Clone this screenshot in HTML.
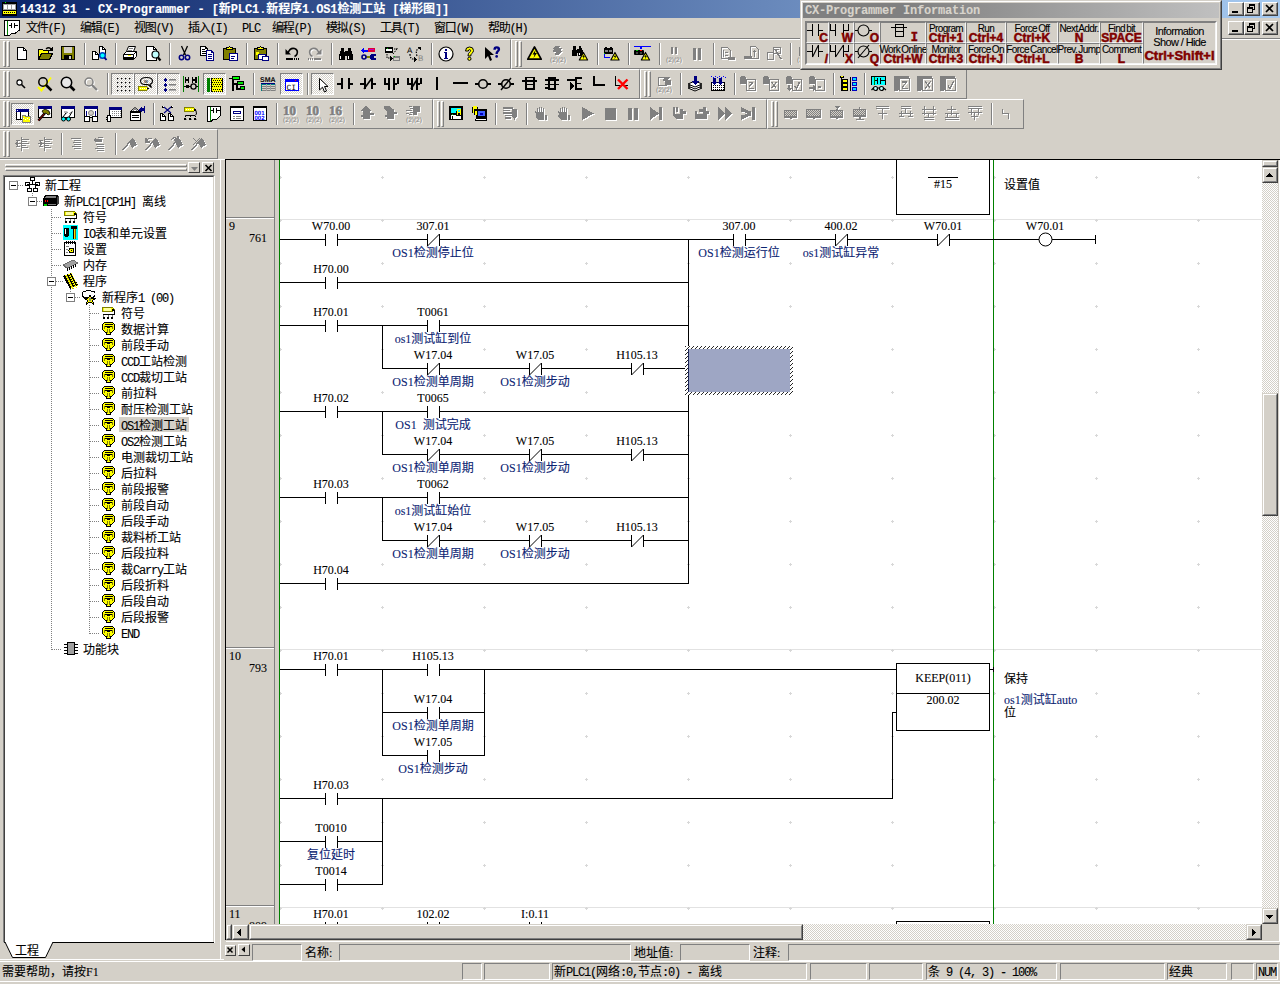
<!DOCTYPE html>
<html lang="zh"><head><meta charset="utf-8"><title>CX-Programmer</title><style>html,body{margin:0;padding:0}
body{width:1280px;height:984px;background:#d4d0c8;position:relative;overflow:hidden;font-family:"Liberation Serif","Noto Sans CJK SC",serif;font-size:12px;line-height:12px;color:#000}
div,svg{position:absolute;box-sizing:border-box}
.t{white-space:nowrap;height:12px;line-height:12px;word-spacing:3px;-webkit-text-stroke:0.1px currentColor}
.m{font-family:"Liberation Mono",monospace;letter-spacing:-1.2px;word-spacing:0}
</style></head><body>
<div style="left:0px;top:0px;width:1280px;height:18px;background:linear-gradient(90deg,#0a246a 0,#a6caf0 100%)"></div>
<svg style="left:2px;top:1px" width="16" height="16" viewBox="0 0 16 16" shape-rendering="crispEdges"><rect x="0" y="1" width="15" height="14" fill="#000"/><rect x="1" y="3" width="13" height="6" fill="#a0a0a0"/><rect x="2" y="4" width="3" height="4" fill="#fff"/><rect x="6" y="4" width="3" height="4" fill="#fff"/><rect x="10" y="4" width="3" height="4" fill="#fff"/><rect x="3" y="1" width="1" height="1" fill="#00ff00"/><rect x="1" y="10" width="13" height="3" fill="#ffff00"/><rect x="2" y="11" width="1" height="1" fill="#000"/><rect x="4" y="11" width="1" height="1" fill="#000"/><rect x="6" y="11" width="1" height="1" fill="#000"/><rect x="8" y="11" width="1" height="1" fill="#000"/><rect x="10" y="11" width="1" height="1" fill="#000"/><rect x="12" y="11" width="1" height="1" fill="#000"/></svg>
<div class="t" style="left:20px;top:4px;color:#fff;font-weight:bold;font-family:&quot;Liberation Mono&quot;,&quot;Noto Sans CJK SC&quot;,monospace;letter-spacing:-0.1px;word-spacing:0">14312 31 - CX-Programmer - [新PLC1.新程序1.OS1检测工站 [梯形图]]</div>
<div style="left:1228px;top:2px;width:16px;height:14px;border-top:1px solid #fff;border-left:1px solid #fff;border-bottom:1px solid #404040;border-right:1px solid #404040;background:#d4d0c8"><div style="left:0px;top:0px;width:14px;height:12px;border-bottom:1px solid #808080;border-right:1px solid #808080"><svg style="left:0px;top:0px" width="13" height="11" viewBox="0 0 13 11" shape-rendering="crispEdges"><rect x="3" y="8" width="6" height="2" fill="#000"/></svg></div></div>
<div style="left:1244px;top:2px;width:16px;height:14px;border-top:1px solid #fff;border-left:1px solid #fff;border-bottom:1px solid #404040;border-right:1px solid #404040;background:#d4d0c8"><div style="left:0px;top:0px;width:14px;height:12px;border-bottom:1px solid #808080;border-right:1px solid #808080"><svg style="left:0px;top:0px" width="13" height="11" viewBox="0 0 13 11" shape-rendering="crispEdges"><rect x="4" y="1" width="6" height="2" fill="#000"/><rect x="4" y="2" width="1" height="4" fill="#000"/><rect x="9" y="2" width="1" height="5" fill="#000"/><rect x="7" y="6" width="3" height="1" fill="#000"/><rect x="2" y="4" width="6" height="2" fill="#000"/><rect x="2" y="5" width="1" height="5" fill="#000"/><rect x="7" y="5" width="1" height="5" fill="#000"/><rect x="2" y="9" width="6" height="1" fill="#000"/></svg></div></div>
<div style="left:1262px;top:2px;width:16px;height:14px;border-top:1px solid #fff;border-left:1px solid #fff;border-bottom:1px solid #404040;border-right:1px solid #404040;background:#d4d0c8"><div style="left:0px;top:0px;width:14px;height:12px;border-bottom:1px solid #808080;border-right:1px solid #808080"><svg style="left:0px;top:0px" width="13" height="11" viewBox="0 0 13 11" shape-rendering="crispEdges"><path d="M3,2 L10,9 M10,2 L3,9" fill="none" stroke="#000" stroke-width="1.7" shape-rendering="auto"/></svg></div></div>
<div style="left:1228px;top:21px;width:16px;height:14px;border-top:1px solid #fff;border-left:1px solid #fff;border-bottom:1px solid #404040;border-right:1px solid #404040;background:#d4d0c8"><div style="left:0px;top:0px;width:14px;height:12px;border-bottom:1px solid #808080;border-right:1px solid #808080"><svg style="left:0px;top:0px" width="13" height="11" viewBox="0 0 13 11" shape-rendering="crispEdges"><rect x="3" y="8" width="6" height="2" fill="#000"/></svg></div></div>
<div style="left:1244px;top:21px;width:16px;height:14px;border-top:1px solid #fff;border-left:1px solid #fff;border-bottom:1px solid #404040;border-right:1px solid #404040;background:#d4d0c8"><div style="left:0px;top:0px;width:14px;height:12px;border-bottom:1px solid #808080;border-right:1px solid #808080"><svg style="left:0px;top:0px" width="13" height="11" viewBox="0 0 13 11" shape-rendering="crispEdges"><rect x="4" y="1" width="6" height="2" fill="#000"/><rect x="4" y="2" width="1" height="4" fill="#000"/><rect x="9" y="2" width="1" height="5" fill="#000"/><rect x="7" y="6" width="3" height="1" fill="#000"/><rect x="2" y="4" width="6" height="2" fill="#000"/><rect x="2" y="5" width="1" height="5" fill="#000"/><rect x="7" y="5" width="1" height="5" fill="#000"/><rect x="2" y="9" width="6" height="1" fill="#000"/></svg></div></div>
<div style="left:1262px;top:21px;width:16px;height:14px;border-top:1px solid #fff;border-left:1px solid #fff;border-bottom:1px solid #404040;border-right:1px solid #404040;background:#d4d0c8"><div style="left:0px;top:0px;width:14px;height:12px;border-bottom:1px solid #808080;border-right:1px solid #808080"><svg style="left:0px;top:0px" width="13" height="11" viewBox="0 0 13 11" shape-rendering="crispEdges"><path d="M3,2 L10,9 M10,2 L3,9" fill="none" stroke="#000" stroke-width="1.7" shape-rendering="auto"/></svg></div></div>
<svg style="left:4px;top:20px" width="16" height="16" viewBox="0 0 16 16" shape-rendering="crispEdges"><path d="M0.5,0.5 H15.5 V10 L11,13.5 H7.5 L5.5,15.5 H0.5 Z" fill="#fff" stroke="#000" stroke-width="1" /><rect x="3" y="1" width="1" height="14" fill="#008000"/><rect x="5" y="5" width="2" height="1" fill="#000"/><rect x="7" y="3" width="1" height="5" fill="#000"/><rect x="10" y="3" width="1" height="5" fill="#000"/><rect x="11" y="5" width="3" height="1" fill="#000"/></svg>
<div class="t" style="left:26px;top:23px;font-family:&quot;Liberation Mono&quot;,&quot;Noto Sans CJK SC&quot;,monospace;letter-spacing:-1.2px">文件(F)</div>
<div class="t" style="left:80px;top:23px;font-family:&quot;Liberation Mono&quot;,&quot;Noto Sans CJK SC&quot;,monospace;letter-spacing:-1.2px">编辑(E)</div>
<div class="t" style="left:134px;top:23px;font-family:&quot;Liberation Mono&quot;,&quot;Noto Sans CJK SC&quot;,monospace;letter-spacing:-1.2px">视图(V)</div>
<div class="t" style="left:188px;top:23px;font-family:&quot;Liberation Mono&quot;,&quot;Noto Sans CJK SC&quot;,monospace;letter-spacing:-1.2px">插入(I)</div>
<div class="t" style="left:242px;top:23px;font-family:&quot;Liberation Mono&quot;,&quot;Noto Sans CJK SC&quot;,monospace;letter-spacing:-1.2px">PLC</div>
<div class="t" style="left:272px;top:23px;font-family:&quot;Liberation Mono&quot;,&quot;Noto Sans CJK SC&quot;,monospace;letter-spacing:-1.2px">编程(P)</div>
<div class="t" style="left:326px;top:23px;font-family:&quot;Liberation Mono&quot;,&quot;Noto Sans CJK SC&quot;,monospace;letter-spacing:-1.2px">模拟(S)</div>
<div class="t" style="left:380px;top:23px;font-family:&quot;Liberation Mono&quot;,&quot;Noto Sans CJK SC&quot;,monospace;letter-spacing:-1.2px">工具(T)</div>
<div class="t" style="left:434px;top:23px;font-family:&quot;Liberation Mono&quot;,&quot;Noto Sans CJK SC&quot;,monospace;letter-spacing:-1.2px">窗口(W)</div>
<div class="t" style="left:488px;top:23px;font-family:&quot;Liberation Mono&quot;,&quot;Noto Sans CJK SC&quot;,monospace;letter-spacing:-1.2px">帮助(H)</div>
<div style="left:0px;top:38px;width:1280px;height:1px;background:#808080"></div>
<div style="left:0px;top:39px;width:1280px;height:1px;background:#fff"></div>
<div style="left:-1px;top:39px;width:512px;height:30px;border-top:1px solid #fff;border-left:1px solid #fff;border-bottom:1px solid #808080;border-right:1px solid #808080"></div><div style="left:3px;top:41px;width:3px;height:26px;border-top:1px solid #fff;border-left:1px solid #fff;border-bottom:1px solid #808080;border-right:1px solid #808080"></div><div style="left:7px;top:41px;width:3px;height:26px;border-top:1px solid #fff;border-left:1px solid #fff;border-bottom:1px solid #808080;border-right:1px solid #808080"></div><svg style="left:14px;top:46px" width="16" height="16" viewBox="0 0 16 16" shape-rendering="crispEdges" overflow="visible"><path d="M3.5,1.5 H9.5 L12.5,4.5 V13.5 H3.5 Z" fill="#fff" stroke="#000" stroke-width="1" /><path d="M9.5,1.5 V4.5 H12.5" fill="none" stroke="#000" stroke-width="1" /></svg><svg style="left:37px;top:46px" width="16" height="16" viewBox="0 0 16 16" shape-rendering="crispEdges" overflow="visible"><path d="M1.5,13.5 V3.5 H5.5 L6.5,4.5 H11.5 V7.5 H4.5 Z" fill="#ffff00" stroke="#000" stroke-width="1" /><path d="M1.5,13.5 L4.5,7.5 H15.5 L12.5,13.5 Z" fill="#808000" stroke="#000" stroke-width="1" /><g shape-rendering="auto"><path d="M9,3 Q11.5,0.5 14,3" fill="none" stroke="#000" stroke-width="1.2" shape-rendering="auto"/></g><path d="M15.5,0.5 V5 H11 Z" fill="#000" stroke="none" stroke-width="1" /></svg><svg style="left:60px;top:46px" width="16" height="16" viewBox="0 0 16 16" shape-rendering="crispEdges" overflow="visible"><rect x="1" y="0" width="14" height="14" fill="#000"/><rect x="2" y="1" width="12" height="12" fill="#808000"/><rect x="4" y="1" width="8" height="6" fill="#d4d0c8"/><rect x="4" y="9" width="8" height="5" fill="#000"/><rect x="9" y="10" width="2" height="3" fill="#d4d0c8"/></svg><div style="left:84px;top:43px;width:2px;height:22px;border-left:1px solid #808080;border-right:1px solid #fff"></div><svg style="left:91px;top:46px" width="16" height="16" viewBox="0 0 16 16" shape-rendering="crispEdges" overflow="visible"><path d="M1.5,5.5 H4.5 L7.5,8.5 V13.5 H1.5 Z" fill="#fff" stroke="#000" stroke-width="1" /><path d="M4.5,5.5 V8.5 H7.5" fill="none" stroke="#000" stroke-width="1" /><path d="M8.5,0.5 H11.5 L14.5,3.5 V9.5 H8.5 Z" fill="#fff" stroke="#000" stroke-width="1" /><path d="M11.5,0.5 V3.5 H14.5" fill="none" stroke="#000" stroke-width="1" /><g shape-rendering="auto"><circle cx="11.5" cy="9.5" r="2.8" fill="#00ffff" stroke="#0040c0" stroke-width="1.5"/><path d="M13.5,11.5 L15.5,14" fill="none" stroke="#000080" stroke-width="2" shape-rendering="auto"/></g></svg><div style="left:115px;top:43px;width:2px;height:22px;border-left:1px solid #808080;border-right:1px solid #fff"></div><svg style="left:122px;top:46px" width="16" height="16" viewBox="0 0 16 16" shape-rendering="crispEdges" overflow="visible"><g shape-rendering="auto"><path d="M4.5,5.5 L6.5,0.5 H13.5 L11.5,5.5 Z" fill="#fff" stroke="#000" stroke-width="1" /><path d="M1.5,8.5 L4.5,5.5 H14.5 V10.5 L11.5,13.5 H1.5 Z" fill="#fff" stroke="#000" stroke-width="1" /><path d="M1.5,8.5 H11.5 L14.5,5.5 M11.5,8.5 V13.5" fill="none" stroke="#000" stroke-width="1" /></g><rect x="2" y="11" width="9" height="2" fill="#000"/><rect x="6" y="9" width="3" height="1" fill="#ffff00"/><rect x="7" y="2" width="4" height="1" fill="#808080"/><rect x="6" y="4" width="4" height="1" fill="#808080"/></svg><svg style="left:145px;top:46px" width="16" height="16" viewBox="0 0 16 16" shape-rendering="crispEdges" overflow="visible"><path d="M1.5,0.5 H8.5 L11.5,3.5 V14.5 H1.5 Z" fill="#fff" stroke="#000" stroke-width="1" /><path d="M8.5,0.5 V3.5 H11.5" fill="none" stroke="#000" stroke-width="1" /><g shape-rendering="auto"><circle cx="10.5" cy="8.5" r="3.5" fill="#c0ffff" stroke="#000" stroke-width="1.2"/><path d="M13,11.5 L15.5,14.5" fill="none" stroke="#000" stroke-width="2.2" shape-rendering="auto"/></g></svg><div style="left:169px;top:43px;width:2px;height:22px;border-left:1px solid #808080;border-right:1px solid #fff"></div><svg style="left:176px;top:46px" width="16" height="16" viewBox="0 0 16 16" shape-rendering="crispEdges" overflow="visible"><g shape-rendering="auto"><path d="M5.5,0 L9.5,9 M11.5,0 L7.5,9" fill="none" stroke="#000" stroke-width="1.3" shape-rendering="auto"/><circle cx="5.5" cy="11.5" r="2.2" fill="none" stroke="#000080" stroke-width="1.5"/><circle cx="11.5" cy="11.5" r="2.2" fill="none" stroke="#000080" stroke-width="1.5"/></g></svg><svg style="left:199px;top:46px" width="16" height="16" viewBox="0 0 16 16" shape-rendering="crispEdges" overflow="visible"><path d="M1.5,0.5 H6.5 L8.5,2.5 V9.5 H1.5 Z" fill="#fff" stroke="#000" stroke-width="1" /><path d="M6.5,0.5 V2.5 H8.5" fill="none" stroke="#000" stroke-width="1" /><rect x="3" y="3" width="3" height="1" fill="#000"/><rect x="3" y="5" width="4" height="1" fill="#000"/><rect x="3" y="7" width="4" height="1" fill="#000"/><path d="M7.5,4.5 H12.5 L14.5,6.5 V14.5 H7.5 Z" fill="#fff" stroke="#000080" stroke-width="1" /><path d="M12.5,4.5 V6.5 H14.5" fill="none" stroke="#000080" stroke-width="1" /><rect x="9" y="8" width="4" height="1" fill="#000080"/><rect x="9" y="10" width="4" height="1" fill="#000080"/><rect x="9" y="12" width="4" height="1" fill="#000080"/></svg><svg style="left:222px;top:46px" width="16" height="16" viewBox="0 0 16 16" shape-rendering="crispEdges" overflow="visible"><rect x="1" y="2" width="13" height="12" fill="#000"/><rect x="2" y="3" width="11" height="10" fill="#808000"/><path d="M4.5,3.5 V1.5 H6.5 L7.5,0.5 L8.5,1.5 H10.5 V3.5 Z" fill="#ffff00" stroke="#000" stroke-width="1" /><rect x="7" y="7" width="9" height="8" fill="#000080"/><rect x="8" y="8" width="7" height="6" fill="#fff"/><rect x="9" y="10" width="4" height="1" fill="#000080"/><rect x="9" y="12" width="3" height="1" fill="#000080"/></svg><div style="left:246px;top:43px;width:2px;height:22px;border-left:1px solid #808080;border-right:1px solid #fff"></div><svg style="left:253px;top:46px" width="16" height="16" viewBox="0 0 16 16" shape-rendering="crispEdges" overflow="visible"><rect x="1" y="2" width="13" height="12" fill="#000"/><rect x="2" y="3" width="11" height="10" fill="#808000"/><path d="M4.5,3.5 V1.5 H6.5 L7.5,0.5 L8.5,1.5 H10.5 V3.5 Z" fill="#ffff00" stroke="#000" stroke-width="1" /><rect x="3" y="6" width="3" height="3" fill="#ffff00"/><rect x="5" y="8" width="8" height="6" fill="#000080"/><rect x="6" y="9" width="6" height="4" fill="#fff"/><rect x="9" y="10" width="7" height="5" fill="#000080"/><rect x="10" y="11" width="5" height="3" fill="#fff"/></svg><div style="left:277px;top:43px;width:2px;height:22px;border-left:1px solid #808080;border-right:1px solid #fff"></div><svg style="left:284px;top:46px" width="16" height="16" viewBox="0 0 16 16" shape-rendering="crispEdges" overflow="visible"><g shape-rendering="auto"><path d="M4,7 Q6,1.5 10.5,2.5 Q14.5,4 13,8 Q12.5,9.5 10.5,10.5" fill="none" stroke="#000" stroke-width="1.6" shape-rendering="auto"/><path d="M1.5,3 V8.5 H7 Z" fill="#000" stroke="none" stroke-width="1" /></g><rect x="2" y="12" width="7" height="2" fill="#000"/><rect x="10" y="12" width="1" height="2" fill="#000"/><rect x="12" y="12" width="1" height="2" fill="#000"/><rect x="14" y="12" width="1" height="2" fill="#000"/></svg><svg style="left:307px;top:46px" width="16" height="16" viewBox="0 0 16 16" shape-rendering="crispEdges" overflow="visible"><g transform="translate(1,1)"><g transform="translate(16,0) scale(-1,1)"><g shape-rendering="auto"><path d="M4,7 Q6,1.5 10.5,2.5 Q14.5,4 13,8 Q12.5,9.5 10.5,10.5" fill="none" stroke="#fff" stroke-width="1.6" shape-rendering="auto"/><path d="M1.5,3 V8.5 H7 Z" fill="#fff" stroke="none" stroke-width="1" /></g><rect x="2" y="12" width="7" height="2" fill="#fff"/><rect x="10" y="12" width="1" height="2" fill="#fff"/><rect x="12" y="12" width="1" height="2" fill="#fff"/><rect x="14" y="12" width="1" height="2" fill="#fff"/></g></g><g transform="translate(16,0) scale(-1,1)"><g shape-rendering="auto"><path d="M4,7 Q6,1.5 10.5,2.5 Q14.5,4 13,8 Q12.5,9.5 10.5,10.5" fill="none" stroke="#808080" stroke-width="1.6" shape-rendering="auto"/><path d="M1.5,3 V8.5 H7 Z" fill="#808080" stroke="none" stroke-width="1" /></g><rect x="2" y="12" width="7" height="2" fill="#808080"/><rect x="10" y="12" width="1" height="2" fill="#808080"/><rect x="12" y="12" width="1" height="2" fill="#808080"/><rect x="14" y="12" width="1" height="2" fill="#808080"/></g></svg><div style="left:331px;top:43px;width:2px;height:22px;border-left:1px solid #808080;border-right:1px solid #fff"></div><svg style="left:338px;top:46px" width="16" height="16" viewBox="0 0 16 16" shape-rendering="crispEdges" overflow="visible"><path d="M1,14 V9 L3,4 V2 H6 V4 L7,7 V14 Z" fill="#000" stroke="none" stroke-width="1" /><path d="M15,14 V9 L13,4 V2 H10 V4 L9,7 V14 Z" fill="#000" stroke="none" stroke-width="1" /><rect x="7" y="5" width="2" height="5" fill="#000"/><rect x="2" y="10" width="1" height="3" fill="#fff"/><rect x="10" y="10" width="1" height="3" fill="#fff"/></svg><svg style="left:361px;top:46px" width="16" height="16" viewBox="0 0 16 16" shape-rendering="crispEdges" overflow="visible"><path d="M0,4.5 L3,2 V3.5 H7 V5.5 H3 V7 Z" fill="#0000ff" stroke="none" stroke-width="1" /><rect x="7" y="2" width="7" height="4" fill="#e00030"/><rect x="8" y="3" width="5" height="1" fill="#c000c0"/><rect x="4" y="10" width="7" height="2" fill="#808000"/><g shape-rendering="auto"><circle cx="3" cy="11" r="2" fill="none" stroke="#000080" stroke-width="1.6"/></g><path d="M10,8 H15 V10 H13 V12 H15 V14 H10 L9,13 V9 Z" fill="#000080" stroke="none" stroke-width="1" /></svg><svg style="left:384px;top:46px" width="16" height="16" viewBox="0 0 16 16" shape-rendering="crispEdges" overflow="visible"><rect x="1" y="1" width="8" height="6" fill="#000"/><rect x="2" y="3" width="6" height="2" fill="#fff"/><rect x="3" y="2" width="1" height="1" fill="#00c000"/><g shape-rendering="auto"><path d="M10,3 H13 V1 M13,3 L9,8 M3,8 V12 H7" fill="none" stroke="#000" stroke-width="1" stroke-dasharray="1.5,1"/></g><path d="M6,10 L9,12.5 L6,15 Z" fill="#000" stroke="none" stroke-width="1" /><rect x="9" y="10" width="7" height="5" fill="#808080"/><rect x="10" y="12" width="5" height="2" fill="#d4d0c8"/><rect x="10" y="10" width="1" height="1" fill="#00c000"/></svg><svg style="left:407px;top:46px" width="16" height="16" viewBox="0 0 16 16" shape-rendering="crispEdges" overflow="visible"><text x="0" y="7" font-family="Liberation Sans,sans-serif" font-size="8" font-weight="normal" fill="#000" style="text-rendering:geometricPrecision">A</text><g shape-rendering="auto"><path d="M3,8 Q3,14 8,13" fill="none" stroke="#000" stroke-width="1.2" stroke-dasharray="1.5,1.2"/><path d="M10,10 Q8,4 12,2" fill="none" stroke="#000" stroke-width="1.2" stroke-dasharray="1.5,1.2"/></g><path d="M7,11 L10.5,13.5 L7,16 Z" fill="#000" stroke="none" stroke-width="1" /><path d="M10,1 H14 V5 Z" fill="#000" stroke="none" stroke-width="1" /><text x="11" y="15" font-family="Liberation Sans,sans-serif" font-size="8" font-weight="normal" fill="#808080" style="text-rendering:geometricPrecision">B</text></svg><div style="left:431px;top:43px;width:2px;height:22px;border-left:1px solid #808080;border-right:1px solid #fff"></div><svg style="left:438px;top:46px" width="16" height="16" viewBox="0 0 16 16" shape-rendering="crispEdges" overflow="visible"><g shape-rendering="auto"><circle cx="8" cy="8" r="7" fill="#fff" stroke="#000" stroke-width="1.2"/></g><rect x="7" y="3" width="2" height="2" fill="#000080"/><rect x="6" y="6" width="3" height="1" fill="#000080"/><rect x="7" y="7" width="2" height="5" fill="#000080"/><rect x="6" y="12" width="4" height="1" fill="#000080"/></svg><svg style="left:461px;top:46px" width="16" height="16" viewBox="0 0 16 16" shape-rendering="crispEdges" overflow="visible"><g shape-rendering="auto"><path d="M4.5,5 Q4.5,1 8.5,1 Q12.5,1 12.5,4.5 Q12.5,6.5 10.5,7.8 Q9.8,8.3 9.8,10 H7 Q7,7.3 8.6,6.2 Q9.6,5.6 9.6,4.6 Q9.6,3.6 8.5,3.6 Q7.4,3.6 7.4,5 Z" fill="#ffff00" stroke="#000" stroke-width="1" /><circle cx="8.4" cy="12.8" r="1.6" fill="#ffff00" stroke="#000" stroke-width="1"/></g></svg><svg style="left:484px;top:46px" width="16" height="16" viewBox="0 0 16 16" shape-rendering="crispEdges" overflow="visible"><g shape-rendering="auto"><path d="M1,1 V13 L4,10 L6,15 L8,14 L6,9 H10 Z" fill="#000" stroke="none" stroke-width="1" /></g><g transform="translate(5.5,-0.5) scale(0.85)" shape-rendering="auto"><path d="M4.5,5 Q4.5,1 8.5,1 Q12.5,1 12.5,4.5 Q12.5,6.5 10.5,7.8 Q9.8,8.3 9.8,10 H7 Q7,7.3 8.6,6.2 Q9.6,5.6 9.6,4.6 Q9.6,3.6 8.5,3.6 Q7.4,3.6 7.4,5 Z" fill="#000080" stroke="none" stroke-width="1" /><circle cx="8.4" cy="12.8" r="1.6" fill="#000080" stroke="none" stroke-width="1"/></g></svg>
<div style="left:511px;top:39px;width:350px;height:30px;border-top:1px solid #fff;border-left:1px solid #fff;border-bottom:1px solid #808080;border-right:1px solid #808080"></div><div style="left:515px;top:41px;width:3px;height:26px;border-top:1px solid #fff;border-left:1px solid #fff;border-bottom:1px solid #808080;border-right:1px solid #808080"></div><div style="left:519px;top:41px;width:3px;height:26px;border-top:1px solid #fff;border-left:1px solid #fff;border-bottom:1px solid #808080;border-right:1px solid #808080"></div><svg style="left:527px;top:46px" width="16" height="16" viewBox="0 0 16 16" shape-rendering="crispEdges" overflow="visible"><g transform="translate(-0.5,-0.5) scale(1)" shape-rendering="auto"><path d="M8,1.5 L14.7,13.7 H1.3 Z" fill="#ffff00" stroke="#000" stroke-width="1.7" stroke-linejoin="round"/><path d="M9,4.5 L6,9 H8 L7,12.5 L10.5,7.5 H8.5 Z" fill="#000" stroke="none" stroke-width="1" /></g></svg><svg style="left:550px;top:46px" width="16" height="16" viewBox="0 0 16 16" shape-rendering="crispEdges" overflow="visible"><g transform="translate(1,1)"><path d="M5,0 H10 L9,2 H12 L11,5 H12 L9,9 H5 L6,6 H3 L4,3 H3 Z" fill="#fff" stroke="none" stroke-width="1" /><text x="0" y="15.5" font-family="Liberation Sans,sans-serif" font-size="6.5" font-weight="normal" fill="#fff" style="text-rendering:geometricPrecision">(2)(2)</text></g><path d="M5,0 H10 L9,2 H12 L11,5 H12 L9,9 H5 L6,6 H3 L4,3 H3 Z" fill="#808080" stroke="none" stroke-width="1" /><text x="0" y="15.5" font-family="Liberation Sans,sans-serif" font-size="6.5" font-weight="normal" fill="#808080" style="text-rendering:geometricPrecision">(2)(2)</text></svg><svg style="left:573px;top:46px" width="16" height="16" viewBox="0 0 16 16" shape-rendering="crispEdges" overflow="visible"><g transform="translate(-2,-1.5) scale(0.8)"><path d="M1,14 V9 L3,4 V2 H6 V4 L7,7 V14 Z" fill="#000" stroke="none" stroke-width="1" /><path d="M15,14 V9 L13,4 V2 H10 V4 L9,7 V14 Z" fill="#000" stroke="none" stroke-width="1" /><rect x="7" y="5" width="2" height="5" fill="#000"/><rect x="2" y="10" width="1" height="3" fill="#fff"/><rect x="10" y="10" width="1" height="3" fill="#fff"/></g><g transform="translate(5.5,5.5) scale(0.62)" shape-rendering="auto"><path d="M8,1.5 L14.7,13.7 H1.3 Z" fill="#ffff00" stroke="#000" stroke-width="1.774193548387097" stroke-linejoin="round"/><path d="M9,4.5 L6,9 H8 L7,12.5 L10.5,7.5 H8.5 Z" fill="#000" stroke="none" stroke-width="1" /></g></svg><div style="left:597px;top:43px;width:2px;height:22px;border-left:1px solid #808080;border-right:1px solid #fff"></div><svg style="left:604px;top:46px" width="16" height="16" viewBox="0 0 16 16" shape-rendering="crispEdges" overflow="visible"><rect x="0" y="2" width="9" height="6" fill="#000"/><rect x="1" y="4" width="3" height="2" fill="#808080"/><rect x="5" y="4" width="3" height="2" fill="#808080"/><rect x="1" y="1" width="2" height="1" fill="#000"/><rect x="6" y="1" width="2" height="1" fill="#000"/><rect x="0" y="8" width="1" height="4" fill="#0000ff"/><rect x="0" y="11" width="6" height="1" fill="#0000ff"/><rect x="0" y="7" width="1" height="1" fill="#00c000"/><g transform="translate(6,5.5) scale(0.62)" shape-rendering="auto"><path d="M8,1.5 L14.7,13.7 H1.3 Z" fill="#ffff00" stroke="#000" stroke-width="1.774193548387097" stroke-linejoin="round"/><path d="M9,4.5 L6,9 H8 L7,12.5 L10.5,7.5 H8.5 Z" fill="#000" stroke="none" stroke-width="1" /></g></svg><div style="left:628px;top:43px;width:2px;height:22px;border-left:1px solid #808080;border-right:1px solid #fff"></div><svg style="left:635px;top:46px" width="16" height="16" viewBox="0 0 16 16" shape-rendering="crispEdges" overflow="visible"><rect x="-1" y="0" width="17" height="1" fill="#0000ff"/><rect x="5" y="0" width="2" height="3" fill="#0000ff"/><path d="M0,4 Q-1,4 -1,5 V8 Q-1,9 0,9 H8 Q9,9 9,8 V5 Q9,4 8,4 Z" fill="#000" stroke="none" stroke-width="0" shape-rendering="auto"/><rect x="1" y="4" width="2" height="1" fill="#00c000"/><rect x="5" y="4" width="2" height="1" fill="#f00"/><rect x="1" y="6" width="2" height="2" fill="#404040"/><rect x="5" y="6" width="2" height="2" fill="#404040"/><g transform="translate(5.5,5.5) scale(0.62)" shape-rendering="auto"><path d="M8,1.5 L14.7,13.7 H1.3 Z" fill="#ffff00" stroke="#000" stroke-width="1.774193548387097" stroke-linejoin="round"/><path d="M9,4.5 L6,9 H8 L7,12.5 L10.5,7.5 H8.5 Z" fill="#000" stroke="none" stroke-width="1" /></g></svg><div style="left:659px;top:43px;width:2px;height:22px;border-left:1px solid #808080;border-right:1px solid #fff"></div><svg style="left:666px;top:46px" width="16" height="16" viewBox="0 0 16 16" shape-rendering="crispEdges" overflow="visible"><g transform="translate(1,1)"><rect x="5" y="1" width="2" height="7" fill="#fff"/><rect x="9" y="1" width="2" height="7" fill="#fff"/><text x="0" y="15.5" font-family="Liberation Sans,sans-serif" font-size="6.5" font-weight="normal" fill="#fff" style="text-rendering:geometricPrecision">(2)(2)</text></g><rect x="5" y="1" width="2" height="7" fill="#808080"/><rect x="9" y="1" width="2" height="7" fill="#808080"/><text x="0" y="15.5" font-family="Liberation Sans,sans-serif" font-size="6.5" font-weight="normal" fill="#808080" style="text-rendering:geometricPrecision">(2)(2)</text></svg><svg style="left:689px;top:46px" width="16" height="16" viewBox="0 0 16 16" shape-rendering="crispEdges" overflow="visible"><g transform="translate(1,1)"><rect x="4" y="2" width="3" height="12" fill="#fff"/><rect x="9" y="2" width="3" height="12" fill="#fff"/></g><rect x="4" y="2" width="3" height="12" fill="#808080"/><rect x="9" y="2" width="3" height="12" fill="#808080"/></svg><div style="left:713px;top:43px;width:2px;height:22px;border-left:1px solid #808080;border-right:1px solid #fff"></div><svg style="left:720px;top:46px" width="16" height="16" viewBox="0 0 16 16" shape-rendering="crispEdges" overflow="visible"><g transform="translate(1,1)"><path d="M1.5,1.5 H7.5 L10.5,4.5 V12.5 H1.5 Z" fill="none" stroke="#fff" stroke-width="1" /><rect x="3" y="4" width="1" height="7" fill="#fff"/><rect x="5" y="6" width="3" height="1" fill="#fff"/><rect x="5" y="9" width="3" height="1" fill="#fff"/><rect x="8" y="11" width="7" height="3" fill="#fff"/></g><path d="M1.5,1.5 H7.5 L10.5,4.5 V12.5 H1.5 Z" fill="none" stroke="#808080" stroke-width="1" /><rect x="3" y="4" width="1" height="7" fill="#808080"/><rect x="5" y="6" width="3" height="1" fill="#808080"/><rect x="5" y="9" width="3" height="1" fill="#808080"/><rect x="8" y="11" width="7" height="3" fill="#808080"/></svg><svg style="left:743px;top:46px" width="16" height="16" viewBox="0 0 16 16" shape-rendering="crispEdges" overflow="visible"><g transform="translate(1,1)"><path d="M7.5,0.5 H12.5 L15.5,3.5 V12.5 H7.5 Z" fill="none" stroke="#fff" stroke-width="1" /><rect x="11" y="4" width="1" height="7" fill="#fff"/><rect x="10" y="5" width="3" height="1" fill="#fff"/><rect x="1" y="10" width="8" height="3" fill="#fff"/></g><path d="M7.5,0.5 H12.5 L15.5,3.5 V12.5 H7.5 Z" fill="none" stroke="#808080" stroke-width="1" /><rect x="11" y="4" width="1" height="7" fill="#808080"/><rect x="10" y="5" width="3" height="1" fill="#808080"/><rect x="1" y="10" width="8" height="3" fill="#808080"/></svg><svg style="left:766px;top:46px" width="16" height="16" viewBox="0 0 16 16" shape-rendering="crispEdges" overflow="visible"><g transform="translate(1,1)"><path d="M1.5,6.5 H7.5 V13.5 H1.5 Z" fill="none" stroke="#fff" stroke-width="1" /><path d="M7.5,1.5 H14.5 V7.5 H7.5 Z" fill="none" stroke="#fff" stroke-width="1" /><path d="M9,3 L15,13" fill="none" stroke="#fff" stroke-width="1.5" /><rect x="9" y="3" width="4" height="1" fill="#fff"/></g><path d="M1.5,6.5 H7.5 V13.5 H1.5 Z" fill="none" stroke="#808080" stroke-width="1" /><path d="M7.5,1.5 H14.5 V7.5 H7.5 Z" fill="none" stroke="#808080" stroke-width="1" /><path d="M9,3 L15,13" fill="none" stroke="#808080" stroke-width="1.5" /><rect x="9" y="3" width="4" height="1" fill="#808080"/></svg><div style="left:790px;top:43px;width:2px;height:22px;border-left:1px solid #808080;border-right:1px solid #fff"></div><svg style="left:797px;top:46px" width="16" height="16" viewBox="0 0 16 16" shape-rendering="crispEdges" overflow="visible"><g transform="translate(1,1)"><path d="M2.5,1.5 H10.5 V9.5 H2.5 Z" fill="none" stroke="#fff" stroke-width="1" /><path d="M8,1 H14 L12,4 H15 V9 H9 V5 H7 Z" fill="#fff" stroke="none" stroke-width="1" /><text x="0" y="15.5" font-family="Liberation Sans,sans-serif" font-size="6.5" font-weight="normal" fill="#fff" style="text-rendering:geometricPrecision">(2)(2)</text></g><path d="M2.5,1.5 H10.5 V9.5 H2.5 Z" fill="none" stroke="#808080" stroke-width="1" /><path d="M8,1 H14 L12,4 H15 V9 H9 V5 H7 Z" fill="#808080" stroke="none" stroke-width="1" /><text x="0" y="15.5" font-family="Liberation Sans,sans-serif" font-size="6.5" font-weight="normal" fill="#808080" style="text-rendering:geometricPrecision">(2)(2)</text></svg><svg style="left:820px;top:46px" width="16" height="16" viewBox="0 0 16 16" shape-rendering="crispEdges" overflow="visible"><g transform="translate(1,1)"><path d="M1.5,1.5 H7.5 L10.5,4.5 V12.5 H1.5 Z" fill="none" stroke="#fff" stroke-width="1" /><rect x="3" y="4" width="1" height="7" fill="#fff"/><rect x="5" y="6" width="3" height="1" fill="#fff"/><rect x="5" y="9" width="3" height="1" fill="#fff"/><rect x="8" y="11" width="7" height="3" fill="#fff"/></g><path d="M1.5,1.5 H7.5 L10.5,4.5 V12.5 H1.5 Z" fill="none" stroke="#808080" stroke-width="1" /><rect x="3" y="4" width="1" height="7" fill="#808080"/><rect x="5" y="6" width="3" height="1" fill="#808080"/><rect x="5" y="9" width="3" height="1" fill="#808080"/><rect x="8" y="11" width="7" height="3" fill="#808080"/></svg>
<div style="left:-1px;top:69px;width:641px;height:30px;border-top:1px solid #fff;border-left:1px solid #fff;border-bottom:1px solid #808080;border-right:1px solid #808080"></div><div style="left:3px;top:71px;width:3px;height:26px;border-top:1px solid #fff;border-left:1px solid #fff;border-bottom:1px solid #808080;border-right:1px solid #808080"></div><div style="left:7px;top:71px;width:3px;height:26px;border-top:1px solid #fff;border-left:1px solid #fff;border-bottom:1px solid #808080;border-right:1px solid #808080"></div><svg style="left:14px;top:76px" width="16" height="16" viewBox="0 0 16 16" shape-rendering="crispEdges" overflow="visible"><g shape-rendering="auto"><circle cx="5.5" cy="6.5" r="2.6" fill="#fff" stroke="#000" stroke-width="1.1"/><path d="M7.5,8.5 L11,12" fill="none" stroke="#000" stroke-width="1.6" shape-rendering="auto"/></g></svg><svg style="left:37px;top:76px" width="16" height="16" viewBox="0 0 16 16" shape-rendering="crispEdges" overflow="visible"><g shape-rendering="auto"><path d="M1,11 L4.5,14.5 L14,1.5" fill="none" stroke="#ffff00" stroke-width="1.8" shape-rendering="auto"/><circle cx="6" cy="6" r="4.2" fill="none" stroke="#000" stroke-width="1.5"/><path d="M9,9 L14.5,14.5" fill="none" stroke="#000" stroke-width="2.5" shape-rendering="auto"/></g></svg><svg style="left:60px;top:76px" width="16" height="16" viewBox="0 0 16 16" shape-rendering="crispEdges" overflow="visible"><g shape-rendering="auto"><circle cx="6.5" cy="6.5" r="5.2" fill="#e8e8e8" stroke="#000" stroke-width="1.5"/><path d="M10.5,10.5 L14.5,14.5" fill="none" stroke="#000" stroke-width="2.6" shape-rendering="auto"/></g></svg><svg style="left:83px;top:76px" width="16" height="16" viewBox="0 0 16 16" shape-rendering="crispEdges" overflow="visible"><g shape-rendering="auto"><g transform="translate(1,1)"><circle cx="6" cy="6" r="4" fill="none" stroke="#fff" stroke-width="1.5"/><path d="M9,9 L14,14" fill="none" stroke="#fff" stroke-width="2.2" shape-rendering="auto"/></g><circle cx="6" cy="6" r="4" fill="none" stroke="#808080" stroke-width="1.5"/><path d="M9,9 L14,14" fill="none" stroke="#808080" stroke-width="2.2" shape-rendering="auto"/></g></svg><div style="left:107px;top:73px;width:2px;height:22px;border-left:1px solid #808080;border-right:1px solid #fff"></div><div style="left:111px;top:73px;width:23px;height:22px;border-top:1px solid #808080;border-left:1px solid #808080;border-bottom:1px solid #fff;border-right:1px solid #fff;background:repeating-conic-gradient(#fff 0 25%,#d4d0c8 0 50%) 0 0/2px 2px;"></div><svg style="left:115px;top:77px" width="16" height="16" viewBox="0 0 16 16" shape-rendering="crispEdges" overflow="visible"><rect x="2" y="1" width="1" height="1" fill="#000"/><rect x="3" y="1" width="1" height="1" fill="#909090"/><rect x="2" y="2" width="1" height="1" fill="#909090"/><rect x="2" y="5" width="1" height="1" fill="#000"/><rect x="3" y="5" width="1" height="1" fill="#909090"/><rect x="2" y="6" width="1" height="1" fill="#909090"/><rect x="2" y="9" width="1" height="1" fill="#000"/><rect x="3" y="9" width="1" height="1" fill="#909090"/><rect x="2" y="10" width="1" height="1" fill="#909090"/><rect x="2" y="13" width="1" height="1" fill="#000"/><rect x="3" y="13" width="1" height="1" fill="#909090"/><rect x="2" y="14" width="1" height="1" fill="#909090"/><rect x="6" y="1" width="1" height="1" fill="#000"/><rect x="7" y="1" width="1" height="1" fill="#909090"/><rect x="6" y="2" width="1" height="1" fill="#909090"/><rect x="6" y="5" width="1" height="1" fill="#000"/><rect x="7" y="5" width="1" height="1" fill="#909090"/><rect x="6" y="6" width="1" height="1" fill="#909090"/><rect x="6" y="9" width="1" height="1" fill="#000"/><rect x="7" y="9" width="1" height="1" fill="#909090"/><rect x="6" y="10" width="1" height="1" fill="#909090"/><rect x="6" y="13" width="1" height="1" fill="#000"/><rect x="7" y="13" width="1" height="1" fill="#909090"/><rect x="6" y="14" width="1" height="1" fill="#909090"/><rect x="10" y="1" width="1" height="1" fill="#000"/><rect x="11" y="1" width="1" height="1" fill="#909090"/><rect x="10" y="2" width="1" height="1" fill="#909090"/><rect x="10" y="5" width="1" height="1" fill="#000"/><rect x="11" y="5" width="1" height="1" fill="#909090"/><rect x="10" y="6" width="1" height="1" fill="#909090"/><rect x="10" y="9" width="1" height="1" fill="#000"/><rect x="11" y="9" width="1" height="1" fill="#909090"/><rect x="10" y="10" width="1" height="1" fill="#909090"/><rect x="10" y="13" width="1" height="1" fill="#000"/><rect x="11" y="13" width="1" height="1" fill="#909090"/><rect x="10" y="14" width="1" height="1" fill="#909090"/><rect x="14" y="1" width="1" height="1" fill="#000"/><rect x="15" y="1" width="1" height="1" fill="#909090"/><rect x="14" y="2" width="1" height="1" fill="#909090"/><rect x="14" y="5" width="1" height="1" fill="#000"/><rect x="15" y="5" width="1" height="1" fill="#909090"/><rect x="14" y="6" width="1" height="1" fill="#909090"/><rect x="14" y="9" width="1" height="1" fill="#000"/><rect x="15" y="9" width="1" height="1" fill="#909090"/><rect x="14" y="10" width="1" height="1" fill="#909090"/><rect x="14" y="13" width="1" height="1" fill="#000"/><rect x="15" y="13" width="1" height="1" fill="#909090"/><rect x="14" y="14" width="1" height="1" fill="#909090"/></svg><div style="left:134px;top:73px;width:23px;height:22px;border-top:1px solid #808080;border-left:1px solid #808080;border-bottom:1px solid #fff;border-right:1px solid #fff;background:repeating-conic-gradient(#fff 0 25%,#d4d0c8 0 50%) 0 0/2px 2px;"></div><svg style="left:138px;top:77px" width="16" height="16" viewBox="0 0 16 16" shape-rendering="crispEdges" overflow="visible"><g shape-rendering="auto"><path d="M2.5,4 Q2.5,0.5 8.5,0.5 Q14.5,0.5 14.5,4 Q14.5,6.5 12,7.3 L13.5,10.5 L10,7.6 Q2.5,8 2.5,4 Z" fill="none" stroke="#000" stroke-width="1.1" /></g><text x="6" y="5.5" font-family="Liberation Sans,sans-serif" font-size="5.5" font-weight="normal" fill="#000" style="text-rendering:geometricPrecision">w</text><path d="M0.5,9.5 H8.5 L10.5,11.5 L8.5,13.5 H0.5 Z" fill="#ffff00" stroke="#808000" stroke-width="1" /><rect x="2" y="11" width="1" height="1" fill="#fff"/><rect x="4" y="11" width="1" height="1" fill="#fff"/><rect x="6" y="11" width="1" height="1" fill="#fff"/><rect x="8" y="11" width="1" height="1" fill="#fff"/><rect x="9" y="11" width="2" height="1" fill="#000"/></svg><div style="left:157px;top:73px;width:23px;height:22px;border-top:1px solid #808080;border-left:1px solid #808080;border-bottom:1px solid #fff;border-right:1px solid #fff;background:repeating-conic-gradient(#fff 0 25%,#d4d0c8 0 50%) 0 0/2px 2px;"></div><svg style="left:161px;top:77px" width="16" height="16" viewBox="0 0 16 16" shape-rendering="crispEdges" overflow="visible"><path d="M2,3 L4,1 L6,3 L4,5 Z" fill="#000080" stroke="none" stroke-width="1" /><rect x="8" y="2" width="7" height="1" fill="#808080"/><rect x="8" y="3" width="7" height="1" fill="#b0b0b0"/><path d="M2,8 L4,6 L6,8 L4,10 Z" fill="#000080" stroke="none" stroke-width="1" /><rect x="8" y="7" width="7" height="1" fill="#808080"/><rect x="8" y="8" width="7" height="1" fill="#b0b0b0"/><path d="M2,13 L4,11 L6,13 L4,15 Z" fill="#000080" stroke="none" stroke-width="1" /><rect x="8" y="12" width="7" height="1" fill="#808080"/><rect x="8" y="13" width="7" height="1" fill="#b0b0b0"/></svg><svg style="left:183px;top:76px" width="16" height="16" viewBox="0 0 16 16" shape-rendering="crispEdges" overflow="visible"><rect x="0" y="0" width="1" height="16" fill="#008000"/><rect x="15" y="0" width="1" height="16" fill="#008000"/><rect x="2" y="1" width="1" height="6" fill="#000"/><rect x="5" y="1" width="1" height="6" fill="#000"/><rect x="2" y="3" width="4" height="2" fill="#000"/><rect x="9" y="1" width="1" height="6" fill="#000"/><rect x="12" y="1" width="2" height="6" fill="#000"/><rect x="9" y="3" width="4" height="2" fill="#000"/><rect x="1" y="10" width="14" height="1" fill="#000"/><rect x="3" y="9" width="3" height="3" fill="#000"/><g shape-rendering="auto"><circle cx="10.5" cy="10.5" r="2.6" fill="#d4d0c8" stroke="#000" stroke-width="1.3"/></g></svg><div style="left:203px;top:73px;width:23px;height:22px;border-top:1px solid #808080;border-left:1px solid #808080;border-bottom:1px solid #fff;border-right:1px solid #fff;background:repeating-conic-gradient(#fff 0 25%,#d4d0c8 0 50%) 0 0/2px 2px;"></div><svg style="left:207px;top:77px" width="16" height="16" viewBox="0 0 16 16" shape-rendering="crispEdges" overflow="visible"><rect x="0" y="1" width="3" height="14" fill="#008000"/><rect x="4" y="1" width="12" height="14" fill="#000"/><rect x="5" y="2" width="10" height="3" fill="#ffff00"/><rect x="5" y="6" width="10" height="3" fill="#ffff00"/><rect x="5" y="10" width="10" height="4" fill="#ffff00"/><rect x="6" y="1" width="1" height="1" fill="#ffff00"/><rect x="6" y="5" width="1" height="1" fill="#ffff00"/><rect x="6" y="9" width="1" height="1" fill="#ffff00"/><rect x="6" y="14" width="1" height="1" fill="#ffff00"/><rect x="8" y="1" width="1" height="1" fill="#ffff00"/><rect x="8" y="5" width="1" height="1" fill="#ffff00"/><rect x="8" y="9" width="1" height="1" fill="#ffff00"/><rect x="8" y="14" width="1" height="1" fill="#ffff00"/><rect x="10" y="1" width="1" height="1" fill="#ffff00"/><rect x="10" y="5" width="1" height="1" fill="#ffff00"/><rect x="10" y="9" width="1" height="1" fill="#ffff00"/><rect x="10" y="14" width="1" height="1" fill="#ffff00"/><rect x="12" y="1" width="1" height="1" fill="#ffff00"/><rect x="12" y="5" width="1" height="1" fill="#ffff00"/><rect x="12" y="9" width="1" height="1" fill="#ffff00"/><rect x="12" y="14" width="1" height="1" fill="#ffff00"/><rect x="14" y="1" width="1" height="1" fill="#ffff00"/><rect x="14" y="5" width="1" height="1" fill="#ffff00"/><rect x="14" y="9" width="1" height="1" fill="#ffff00"/><rect x="14" y="14" width="1" height="1" fill="#ffff00"/><rect x="6" y="3" width="1" height="1" fill="#000"/><rect x="6" y="7" width="1" height="1" fill="#000"/><rect x="6" y="12" width="1" height="1" fill="#000"/><rect x="8" y="3" width="1" height="1" fill="#000"/><rect x="8" y="7" width="1" height="1" fill="#000"/><rect x="8" y="12" width="1" height="1" fill="#000"/><rect x="10" y="3" width="1" height="1" fill="#000"/><rect x="10" y="7" width="1" height="1" fill="#000"/><rect x="10" y="12" width="1" height="1" fill="#000"/><rect x="12" y="3" width="1" height="1" fill="#000"/><rect x="12" y="7" width="1" height="1" fill="#000"/><rect x="12" y="12" width="1" height="1" fill="#000"/><rect x="14" y="3" width="1" height="1" fill="#000"/><rect x="14" y="7" width="1" height="1" fill="#000"/><rect x="14" y="12" width="1" height="1" fill="#000"/></svg><svg style="left:229px;top:76px" width="16" height="16" viewBox="0 0 16 16" shape-rendering="crispEdges" overflow="visible"><rect x="0" y="2" width="3" height="1" fill="#000"/><rect x="3" y="2" width="2" height="13" fill="#000"/><rect x="5" y="7" width="3" height="2" fill="#000"/><rect x="7" y="7" width="2" height="7" fill="#000"/><rect x="9" y="12" width="2" height="2" fill="#000"/><rect x="3" y="0" width="8" height="4" fill="#000"/><rect x="4" y="1" width="6" height="2" fill="#00ff00"/><rect x="8" y="5" width="7" height="4" fill="#000"/><rect x="9" y="6" width="5" height="2" fill="#00e000"/><rect x="11" y="10" width="5" height="4" fill="#000"/><rect x="12" y="11" width="3" height="2" fill="#00e000"/></svg><div style="left:253px;top:73px;width:2px;height:22px;border-left:1px solid #808080;border-right:1px solid #fff"></div><svg style="left:260px;top:76px" width="16" height="16" viewBox="0 0 16 16" shape-rendering="crispEdges" overflow="visible"><text x="0" y="6" font-family="Liberation Sans,sans-serif" font-size="7" font-weight="bold" fill="#000" style="text-rendering:geometricPrecision">SMA</text><rect x="1" y="7" width="14" height="1" fill="#000080"/><rect x="1" y="8" width="14" height="1" fill="#008080"/><rect x="1" y="10" width="14" height="1" fill="#808080"/><rect x="1" y="12" width="14" height="1" fill="#808080"/><rect x="1" y="14" width="14" height="1" fill="#808080"/><rect x="1.0" y="8" width="1" height="7" fill="#a0a0a0"/><rect x="5.5" y="8" width="1" height="7" fill="#a0a0a0"/><rect x="10.0" y="8" width="1" height="7" fill="#a0a0a0"/><rect x="14.5" y="8" width="1" height="7" fill="#a0a0a0"/><rect x="1" y="8" width="1" height="7" fill="#008080"/></svg><div style="left:280px;top:73px;width:23px;height:22px;border-top:1px solid #808080;border-left:1px solid #808080;border-bottom:1px solid #fff;border-right:1px solid #fff;background:repeating-conic-gradient(#fff 0 25%,#d4d0c8 0 50%) 0 0/2px 2px;"></div><svg style="left:284px;top:77px" width="16" height="16" viewBox="0 0 16 16" shape-rendering="crispEdges" overflow="visible"><rect x="1" y="2" width="14" height="12" fill="#0000ff"/><rect x="2" y="5" width="12" height="8" fill="#fff"/><rect x="11" y="3" width="1" height="1" fill="#f00"/><text x="2.5" y="12.5" font-family="Liberation Mono,sans-serif" font-size="8" font-weight="normal" fill="#000" style="text-rendering:geometricPrecision">CI</text></svg><div style="left:307px;top:73px;width:2px;height:22px;border-left:1px solid #808080;border-right:1px solid #fff"></div><div style="left:311px;top:73px;width:23px;height:22px;border-top:1px solid #808080;border-left:1px solid #808080;border-bottom:1px solid #fff;border-right:1px solid #fff;background:repeating-conic-gradient(#fff 0 25%,#d4d0c8 0 50%) 0 0/2px 2px;"></div><svg style="left:315px;top:77px" width="16" height="16" viewBox="0 0 16 16" shape-rendering="crispEdges" overflow="visible"><g shape-rendering="auto"><path d="M4.5,1.5 V13 L7.5,10.2 L9.5,15 L11.5,14 L9.5,9.5 H13 Z" fill="#fff" stroke="#000" stroke-width="1" /></g></svg><svg style="left:337px;top:76px" width="16" height="16" viewBox="0 0 16 16" shape-rendering="crispEdges" overflow="visible"><rect x="0" y="7" width="4" height="2" fill="#000"/><rect x="4" y="2" width="2" height="11" fill="#000"/><rect x="11" y="2" width="2" height="11" fill="#000"/><rect x="13" y="7" width="3" height="2" fill="#000"/></svg><svg style="left:360px;top:76px" width="16" height="16" viewBox="0 0 16 16" shape-rendering="crispEdges" overflow="visible"><rect x="0" y="7" width="4" height="2" fill="#000"/><rect x="4" y="2" width="2" height="11" fill="#000"/><rect x="11" y="2" width="2" height="11" fill="#000"/><rect x="13" y="7" width="3" height="2" fill="#000"/><g shape-rendering="auto"><path d="M12,2 L4,13" fill="none" stroke="#000" stroke-width="1.6" shape-rendering="auto"/></g></svg><svg style="left:383px;top:76px" width="16" height="16" viewBox="0 0 16 16" shape-rendering="crispEdges" overflow="visible"><rect x="1" y="2" width="2" height="6" fill="#000"/><rect x="1" y="7" width="4" height="2" fill="#000"/><rect x="5" y="2" width="2" height="12" fill="#000"/><rect x="10" y="2" width="2" height="12" fill="#000"/><rect x="10" y="7" width="4" height="2" fill="#000"/><rect x="14" y="2" width="2" height="6" fill="#000"/></svg><svg style="left:406px;top:76px" width="16" height="16" viewBox="0 0 16 16" shape-rendering="crispEdges" overflow="visible"><rect x="1" y="2" width="2" height="6" fill="#000"/><rect x="1" y="7" width="4" height="2" fill="#000"/><rect x="5" y="2" width="2" height="12" fill="#000"/><rect x="10" y="2" width="2" height="12" fill="#000"/><rect x="10" y="7" width="4" height="2" fill="#000"/><rect x="14" y="2" width="2" height="6" fill="#000"/><g shape-rendering="auto"><path d="M12,2 L5,13" fill="none" stroke="#000" stroke-width="1.6" shape-rendering="auto"/></g></svg><svg style="left:429px;top:76px" width="16" height="16" viewBox="0 0 16 16" shape-rendering="crispEdges" overflow="visible"><rect x="7" y="1" width="2" height="13" fill="#000"/></svg><svg style="left:452px;top:76px" width="16" height="16" viewBox="0 0 16 16" shape-rendering="crispEdges" overflow="visible"><rect x="1" y="6" width="15" height="2" fill="#000"/></svg><svg style="left:475px;top:76px" width="16" height="16" viewBox="0 0 16 16" shape-rendering="crispEdges" overflow="visible"><rect x="0" y="7" width="4" height="2" fill="#000"/><rect x="12" y="7" width="4" height="2" fill="#000"/><g shape-rendering="auto"><circle cx="8" cy="8" r="4.3" fill="none" stroke="#000" stroke-width="1.6"/></g></svg><svg style="left:498px;top:76px" width="16" height="16" viewBox="0 0 16 16" shape-rendering="crispEdges" overflow="visible"><rect x="0" y="7" width="4" height="2" fill="#000"/><rect x="12" y="7" width="4" height="2" fill="#000"/><g shape-rendering="auto"><circle cx="8" cy="8" r="4.3" fill="none" stroke="#000" stroke-width="1.6"/><path d="M13,2 L3,14" fill="none" stroke="#000" stroke-width="1.4" shape-rendering="auto"/></g></svg><svg style="left:521px;top:76px" width="16" height="16" viewBox="0 0 16 16" shape-rendering="crispEdges" overflow="visible"><rect x="1" y="4" width="15" height="2" fill="#000"/><rect x="4" y="1" width="2" height="13" fill="#000"/><rect x="12" y="1" width="2" height="13" fill="#000"/><rect x="4" y="1" width="10" height="1" fill="#000"/><rect x="4" y="8" width="10" height="1" fill="#000"/><rect x="4" y="12" width="10" height="2" fill="#000"/></svg><svg style="left:544px;top:76px" width="16" height="16" viewBox="0 0 16 16" shape-rendering="crispEdges" overflow="visible"><rect x="1" y="3" width="14" height="2" fill="#000"/><rect x="1" y="8" width="14" height="1" fill="#000"/><rect x="4" y="1" width="2" height="13" fill="#000"/><rect x="10" y="1" width="2" height="13" fill="#000"/><rect x="4" y="1" width="8" height="2" fill="#000"/><rect x="4" y="12" width="8" height="2" fill="#000"/><rect x="1" y="11" width="3" height="2" fill="#000"/></svg><svg style="left:567px;top:76px" width="16" height="16" viewBox="0 0 16 16" shape-rendering="crispEdges" overflow="visible"><rect x="0" y="3" width="9" height="2" fill="#000"/><path d="M3,6 L8,10 L3,14 Z" fill="#000" stroke="none" stroke-width="1" /><rect x="8" y="1" width="2" height="13" fill="#000"/><rect x="8" y="1" width="7" height="2" fill="#000"/><rect x="8" y="7" width="6" height="1" fill="#000"/><rect x="8" y="12" width="7" height="2" fill="#000"/></svg><svg style="left:590px;top:76px" width="16" height="16" viewBox="0 0 16 16" shape-rendering="crispEdges" overflow="visible"><rect x="3" y="0" width="2" height="10" fill="#000"/><rect x="3" y="8" width="12" height="2" fill="#000"/></svg><svg style="left:613px;top:76px" width="16" height="16" viewBox="0 0 16 16" shape-rendering="crispEdges" overflow="visible"><rect x="2" y="0" width="1" height="10" fill="#000"/><rect x="2" y="9" width="13" height="1" fill="#000"/><g shape-rendering="auto"><path d="M5,3.5 L14.5,13 M14.5,3.5 L5,13" fill="none" stroke="#f00" stroke-width="2.4" shape-rendering="auto"/></g></svg>
<div style="left:640px;top:69px;width:327px;height:30px;border-top:1px solid #fff;border-left:1px solid #fff;border-bottom:1px solid #808080;border-right:1px solid #808080"></div><div style="left:644px;top:71px;width:3px;height:26px;border-top:1px solid #fff;border-left:1px solid #fff;border-bottom:1px solid #808080;border-right:1px solid #808080"></div><div style="left:648px;top:71px;width:3px;height:26px;border-top:1px solid #fff;border-left:1px solid #fff;border-bottom:1px solid #808080;border-right:1px solid #808080"></div><svg style="left:656px;top:76px" width="16" height="16" viewBox="0 0 16 16" shape-rendering="crispEdges" overflow="visible"><g transform="translate(1,1)"><path d="M2.5,1.5 H10.5 V9.5 H2.5 Z" fill="none" stroke="#fff" stroke-width="1" /><path d="M8,1 H14 L12,4 H15 V9 H9 V5 H7 Z" fill="#fff" stroke="none" stroke-width="1" /><text x="0" y="15.5" font-family="Liberation Sans,sans-serif" font-size="6.5" font-weight="normal" fill="#fff" style="text-rendering:geometricPrecision">(2)(2)</text></g><path d="M2.5,1.5 H10.5 V9.5 H2.5 Z" fill="none" stroke="#808080" stroke-width="1" /><path d="M8,1 H14 L12,4 H15 V9 H9 V5 H7 Z" fill="#808080" stroke="none" stroke-width="1" /><text x="0" y="15.5" font-family="Liberation Sans,sans-serif" font-size="6.5" font-weight="normal" fill="#808080" style="text-rendering:geometricPrecision">(2)(2)</text></svg><div style="left:680px;top:73px;width:2px;height:22px;border-left:1px solid #808080;border-right:1px solid #fff"></div><svg style="left:687px;top:76px" width="16" height="16" viewBox="0 0 16 16" shape-rendering="crispEdges" overflow="visible"><g shape-rendering="auto"><path d="M1,12 L8,9 L15,12 L8,15 Z" fill="#fff" stroke="#000" stroke-width="1" /><path d="M1,10 L8,7 L15,10 L8,13 Z" fill="#fff" stroke="#000" stroke-width="1" /><path d="M1,8 L8,5 L15,8 L8,11 Z" fill="#fff" stroke="#000" stroke-width="1" /></g><rect x="7" y="0" width="3" height="5" fill="#000080"/><path d="M4.5,5 H12.5 L8.5,9 Z" fill="#000080" stroke="none" stroke-width="1" /></svg><svg style="left:710px;top:76px" width="16" height="16" viewBox="0 0 16 16" shape-rendering="crispEdges" overflow="visible"><rect x="1" y="6" width="14" height="9" fill="#000"/><rect x="2" y="7" width="12" height="7" fill="#fff"/><rect x="3" y="9" width="1" height="1" fill="#000"/><rect x="3" y="11" width="1" height="1" fill="#000"/><rect x="3" y="13" width="1" height="1" fill="#000"/><rect x="5" y="9" width="1" height="1" fill="#000"/><rect x="5" y="11" width="1" height="1" fill="#000"/><rect x="5" y="13" width="1" height="1" fill="#000"/><rect x="7" y="9" width="1" height="1" fill="#000"/><rect x="7" y="11" width="1" height="1" fill="#000"/><rect x="7" y="13" width="1" height="1" fill="#000"/><rect x="9" y="9" width="1" height="1" fill="#000"/><rect x="9" y="11" width="1" height="1" fill="#000"/><rect x="9" y="13" width="1" height="1" fill="#000"/><rect x="11" y="9" width="1" height="1" fill="#000"/><rect x="11" y="11" width="1" height="1" fill="#000"/><rect x="11" y="13" width="1" height="1" fill="#000"/><rect x="13" y="9" width="1" height="1" fill="#000"/><rect x="13" y="11" width="1" height="1" fill="#000"/><rect x="13" y="13" width="1" height="1" fill="#000"/><rect x="3" y="2" width="3" height="4" fill="#000080"/><path d="M2,6 H7 L4.5,9 Z" fill="#000080" stroke="none" stroke-width="1" /><rect x="9" y="2" width="3" height="4" fill="#000080"/><path d="M8,6 H13 L10.5,9 Z" fill="#000080" stroke="none" stroke-width="1" /><rect x="1" y="0" width="1" height="1" fill="#0000ff"/><rect x="3" y="1" width="1" height="1" fill="#0000ff"/><rect x="5" y="0" width="1" height="1" fill="#0000ff"/><rect x="7" y="1" width="1" height="1" fill="#0000ff"/><rect x="9" y="0" width="1" height="1" fill="#0000ff"/><rect x="11" y="1" width="1" height="1" fill="#0000ff"/><rect x="13" y="0" width="1" height="1" fill="#0000ff"/><rect x="15" y="1" width="1" height="1" fill="#0000ff"/></svg><div style="left:734px;top:73px;width:2px;height:22px;border-left:1px solid #808080;border-right:1px solid #fff"></div><svg style="left:740px;top:76px" width="16" height="16" viewBox="0 0 16 16" shape-rendering="crispEdges" overflow="visible"><g transform="translate(1,1)"><path d="M0,8 V3 Q0,0 3,0 Q6,0 6,3 V5 H7 V8 Z" fill="#fff" stroke="none" stroke-width="1" /><path d="M6.5,3.5 H15.5 V14.5 H6.5 Z" fill="none" stroke="#fff" stroke-width="1" /><path d="M8.5,11.5 L13,6 M8.5,6.5 H13 M8.5,12.5 H13.5" fill="none" stroke="#fff" stroke-width="1.2" /></g><path d="M0,8 V3 Q0,0 3,0 Q6,0 6,3 V5 H7 V8 Z" fill="#808080" stroke="none" stroke-width="1" /><path d="M6.5,3.5 H15.5 V14.5 H6.5 Z" fill="none" stroke="#808080" stroke-width="1" /><path d="M8.5,11.5 L13,6 M8.5,6.5 H13 M8.5,12.5 H13.5" fill="none" stroke="#808080" stroke-width="1.2" /></svg><svg style="left:763px;top:76px" width="16" height="16" viewBox="0 0 16 16" shape-rendering="crispEdges" overflow="visible"><g transform="translate(1,1)"><path d="M0,8 V3 Q0,0 3,0 Q6,0 6,3 V5 H7 V8 Z" fill="#fff" stroke="none" stroke-width="1" /><path d="M6.5,3.5 H15.5 V14.5 H6.5 Z" fill="none" stroke="#fff" stroke-width="1" /><path d="M8.5,6 L13.5,12.5 M13.5,6 L8.5,12.5" fill="none" stroke="#fff" stroke-width="1.2" /></g><path d="M0,8 V3 Q0,0 3,0 Q6,0 6,3 V5 H7 V8 Z" fill="#808080" stroke="none" stroke-width="1" /><path d="M6.5,3.5 H15.5 V14.5 H6.5 Z" fill="none" stroke="#808080" stroke-width="1" /><path d="M8.5,6 L13.5,12.5 M13.5,6 L8.5,12.5" fill="none" stroke="#808080" stroke-width="1.2" /></svg><svg style="left:786px;top:76px" width="16" height="16" viewBox="0 0 16 16" shape-rendering="crispEdges" overflow="visible"><g transform="translate(1,1)"><path d="M0,8 V3 Q0,0 3,0 Q6,0 6,3 V5 H7 V8 Z" fill="#fff" stroke="none" stroke-width="1" /><path d="M6.5,3.5 H15.5 V14.5 H6.5 Z" fill="none" stroke="#fff" stroke-width="1" /><path d="M8.5,10 L10.5,12.5 L13.5,6" fill="none" stroke="#fff" stroke-width="1.4" /><path d="M2,9 H4 V12 H6 L3,15 L0,12 H2 Z" fill="#fff" stroke="none" stroke-width="1" /></g><path d="M0,8 V3 Q0,0 3,0 Q6,0 6,3 V5 H7 V8 Z" fill="#808080" stroke="none" stroke-width="1" /><path d="M6.5,3.5 H15.5 V14.5 H6.5 Z" fill="none" stroke="#808080" stroke-width="1" /><path d="M8.5,10 L10.5,12.5 L13.5,6" fill="none" stroke="#808080" stroke-width="1.4" /><path d="M2,9 H4 V12 H6 L3,15 L0,12 H2 Z" fill="#808080" stroke="none" stroke-width="1" /></svg><svg style="left:809px;top:76px" width="16" height="16" viewBox="0 0 16 16" shape-rendering="crispEdges" overflow="visible"><g transform="translate(1,1)"><path d="M0,8 V3 Q0,0 3,0 Q6,0 6,3 V5 H7 V8 Z" fill="#fff" stroke="none" stroke-width="1" /><path d="M6.5,3.5 H15.5 V14.5 H6.5 Z" fill="none" stroke="#fff" stroke-width="1" /><rect x="9" y="10" width="3" height="2" fill="#fff"/><path d="M0,11 H4 V9 L7,12 L4,15 V13 H0 Z" fill="#fff" stroke="none" stroke-width="1" /></g><path d="M0,8 V3 Q0,0 3,0 Q6,0 6,3 V5 H7 V8 Z" fill="#808080" stroke="none" stroke-width="1" /><path d="M6.5,3.5 H15.5 V14.5 H6.5 Z" fill="none" stroke="#808080" stroke-width="1" /><rect x="9" y="10" width="3" height="2" fill="#808080"/><path d="M0,11 H4 V9 L7,12 L4,15 V13 H0 Z" fill="#808080" stroke="none" stroke-width="1" /></svg><div style="left:833px;top:73px;width:2px;height:22px;border-left:1px solid #808080;border-right:1px solid #fff"></div><svg style="left:840px;top:76px" width="16" height="16" viewBox="0 0 16 16" shape-rendering="crispEdges" overflow="visible"><rect x="0" y="0" width="4" height="2" fill="#000"/><rect x="1" y="0" width="2" height="1" fill="#ffff00"/><rect x="1" y="2" width="1" height="13" fill="#000"/><rect x="2" y="3" width="6" height="4" fill="#000"/><rect x="3" y="4" width="4" height="2" fill="#ffff00"/><rect x="2" y="7" width="6" height="4" fill="#000"/><rect x="3" y="8" width="4" height="2" fill="#ffff00"/><rect x="2" y="11" width="6" height="4" fill="#000"/><rect x="3" y="12" width="4" height="2" fill="#ffff00"/><rect x="10" y="1" width="1" height="14" fill="#000"/><rect x="12" y="1" width="5" height="4" fill="#0000c0"/><rect x="13" y="2" width="3" height="2" fill="#00e0ff"/><rect x="12" y="6" width="5" height="4" fill="#0000c0"/><rect x="13" y="7" width="3" height="2" fill="#00e0ff"/><rect x="12" y="11" width="5" height="4" fill="#0000c0"/><rect x="13" y="12" width="3" height="2" fill="#00e0ff"/></svg><div style="left:864px;top:73px;width:2px;height:22px;border-left:1px solid #808080;border-right:1px solid #fff"></div><svg style="left:871px;top:76px" width="16" height="16" viewBox="0 0 16 16" shape-rendering="crispEdges" overflow="visible"><rect x="0" y="0" width="15" height="9" fill="#000"/><rect x="1" y="1" width="13" height="8" fill="#00ffff"/><rect x="3" y="1" width="1" height="8" fill="#008000"/><rect x="4" y="4" width="2" height="1" fill="#000"/><rect x="6" y="2" width="1" height="6" fill="#000"/><rect x="9" y="2" width="1" height="6" fill="#000"/><rect x="10" y="4" width="4" height="1" fill="#000"/><g shape-rendering="auto"><circle cx="4.5" cy="12.5" r="2" fill="#c0ffff" stroke="#000" stroke-width="1.2"/><circle cx="10.5" cy="12.5" r="2" fill="#c0ffff" stroke="#000" stroke-width="1.2"/><path d="M0.5,14 L2.5,12 M6.5,12 H8.5 M12.5,12 L15,14" fill="none" stroke="#000" stroke-width="1.2" shape-rendering="auto"/></g></svg><svg style="left:894px;top:76px" width="16" height="16" viewBox="0 0 16 16" shape-rendering="crispEdges" overflow="visible"><g transform="translate(1,1)"><path d="M0,0 H15 V2 H5 V13 L3,15 H0 Z" fill="#fff" stroke="none" stroke-width="1" /><path d="M5.5,2.5 H15.5 V14.5 H5.5 Z" fill="none" stroke="#fff" stroke-width="1" /><path d="M8,11.5 L13,5.5 M8,6 H13 M8,12.5 H13.5" fill="none" stroke="#fff" stroke-width="1.2" /></g><path d="M0,0 H15 V2 H5 V13 L3,15 H0 Z" fill="#808080" stroke="none" stroke-width="1" /><path d="M5.5,2.5 H15.5 V14.5 H5.5 Z" fill="none" stroke="#808080" stroke-width="1" /><path d="M8,11.5 L13,5.5 M8,6 H13 M8,12.5 H13.5" fill="none" stroke="#808080" stroke-width="1.2" /></svg><svg style="left:917px;top:76px" width="16" height="16" viewBox="0 0 16 16" shape-rendering="crispEdges" overflow="visible"><g transform="translate(1,1)"><path d="M0,0 H15 V2 H5 V13 L3,15 H0 Z" fill="#fff" stroke="none" stroke-width="1" /><path d="M5.5,2.5 H15.5 V14.5 H5.5 Z" fill="none" stroke="#fff" stroke-width="1" /><path d="M8,5.5 L13.5,12.5 M13.5,5.5 L8,12.5" fill="none" stroke="#fff" stroke-width="1.2" /></g><path d="M0,0 H15 V2 H5 V13 L3,15 H0 Z" fill="#808080" stroke="none" stroke-width="1" /><path d="M5.5,2.5 H15.5 V14.5 H5.5 Z" fill="none" stroke="#808080" stroke-width="1" /><path d="M8,5.5 L13.5,12.5 M13.5,5.5 L8,12.5" fill="none" stroke="#808080" stroke-width="1.2" /></svg><svg style="left:940px;top:76px" width="16" height="16" viewBox="0 0 16 16" shape-rendering="crispEdges" overflow="visible"><g transform="translate(1,1)"><path d="M0,0 H15 V2 H5 V13 L3,15 H0 Z" fill="#fff" stroke="none" stroke-width="1" /><path d="M5.5,2.5 H15.5 V14.5 H5.5 Z" fill="none" stroke="#fff" stroke-width="1" /><path d="M8,9.5 L10,12.5 L13.5,5.5" fill="none" stroke="#fff" stroke-width="1.4" /></g><path d="M0,0 H15 V2 H5 V13 L3,15 H0 Z" fill="#808080" stroke="none" stroke-width="1" /><path d="M5.5,2.5 H15.5 V14.5 H5.5 Z" fill="none" stroke="#808080" stroke-width="1" /><path d="M8,9.5 L10,12.5 L13.5,5.5" fill="none" stroke="#808080" stroke-width="1.4" /></svg>
<div style="left:-1px;top:99px;width:434px;height:30px;border-top:1px solid #fff;border-left:1px solid #fff;border-bottom:1px solid #808080;border-right:1px solid #808080"></div><div style="left:3px;top:101px;width:3px;height:26px;border-top:1px solid #fff;border-left:1px solid #fff;border-bottom:1px solid #808080;border-right:1px solid #808080"></div><div style="left:7px;top:101px;width:3px;height:26px;border-top:1px solid #fff;border-left:1px solid #fff;border-bottom:1px solid #808080;border-right:1px solid #808080"></div><div style="left:11px;top:103px;width:23px;height:22px;border-top:1px solid #808080;border-left:1px solid #808080;border-bottom:1px solid #fff;border-right:1px solid #fff;background:repeating-conic-gradient(#fff 0 25%,#d4d0c8 0 50%) 0 0/2px 2px;"></div><svg style="left:15px;top:107px" width="16" height="16" viewBox="0 0 16 16" shape-rendering="crispEdges" overflow="visible"><rect x="1" y="2" width="13" height="11" fill="#000"/><rect x="2" y="5" width="11" height="7" fill="#fff"/><rect x="1" y="2" width="13" height="3" fill="#000080"/><rect x="2" y="3" width="1" height="1" fill="#fff"/><rect x="5" y="5" width="1" height="7" fill="#000"/><path d="M7.5,8.5 H10 L11,9.5 H15.5 V15.5 H7.5 Z" fill="#ffff00" stroke="#808080" stroke-width="1" /><rect x="8" y="11" width="1" height="1" fill="#fff"/><rect x="10" y="12" width="1" height="1" fill="#fff"/><rect x="12" y="11" width="1" height="1" fill="#fff"/><rect x="14" y="12" width="1" height="1" fill="#fff"/></svg><svg style="left:37px;top:106px" width="16" height="16" viewBox="0 0 16 16" shape-rendering="crispEdges" overflow="visible"><rect x="1" y="0" width="14" height="12" fill="#000"/><rect x="2" y="3" width="12" height="8" fill="#fff"/><rect x="1" y="0" width="14" height="3" fill="#000080"/><g shape-rendering="auto"><path d="M1.5,14.5 L8,7" fill="none" stroke="#000" stroke-width="2.6" shape-rendering="auto"/><path d="M1.5,14.5 L7.5,7.5" fill="none" stroke="#a00000" stroke-width="1" shape-rendering="auto"/><path d="M5,5 L8,3 L12,5 L13,8 L11,9 L9,7 L7,8 Z" fill="#808000" stroke="#000" stroke-width="0.8" /></g></svg><svg style="left:60px;top:106px" width="16" height="16" viewBox="0 0 16 16" shape-rendering="crispEdges" overflow="visible"><rect x="1" y="0" width="14" height="12" fill="#000"/><rect x="2" y="3" width="12" height="8" fill="#fff"/><rect x="1" y="0" width="14" height="3" fill="#000080"/><g shape-rendering="auto"><path d="M4,6 H7 M5,8 L8,6 M9,8 L13,5" fill="none" stroke="#808080" stroke-width="1" shape-rendering="auto"/><circle cx="3.5" cy="13" r="2" fill="#00ffff" stroke="#000" stroke-width="1"/><circle cx="8.5" cy="13" r="2" fill="#00ffff" stroke="#000" stroke-width="1"/><path d="M5.5,12.5 H6.5 M3,11 L6,7 M9,11 L12,6" fill="none" stroke="#000" stroke-width="1" shape-rendering="auto"/></g></svg><svg style="left:83px;top:106px" width="16" height="16" viewBox="0 0 16 16" shape-rendering="crispEdges" overflow="visible"><rect x="1" y="0" width="14" height="12" fill="#000"/><rect x="2" y="3" width="12" height="8" fill="#fff"/><rect x="1" y="0" width="14" height="3" fill="#000080"/><g shape-rendering="auto"><circle cx="8" cy="7" r="2.5" fill="#d4d0c8" stroke="#808080" stroke-width="1"/></g><rect x="3" y="5" width="1" height="5" fill="#000080"/><rect x="12" y="5" width="1" height="5" fill="#000080"/><rect x="1" y="10" width="6" height="6" fill="#000"/><rect x="2" y="11" width="4" height="4" fill="#fff"/><rect x="9" y="10" width="6" height="6" fill="#000"/><rect x="10" y="11" width="4" height="4" fill="#fff"/></svg><svg style="left:106px;top:106px" width="16" height="16" viewBox="0 0 16 16" shape-rendering="crispEdges" overflow="visible"><rect x="3" y="1" width="13" height="11" fill="#000"/><rect x="4" y="4" width="11" height="7" fill="#fff"/><rect x="3" y="1" width="13" height="3" fill="#000080"/><rect x="6" y="5" width="1" height="1" fill="#808080"/><rect x="6" y="7" width="1" height="1" fill="#808080"/><rect x="6" y="9" width="1" height="1" fill="#808080"/><rect x="8" y="5" width="1" height="1" fill="#808080"/><rect x="8" y="7" width="1" height="1" fill="#808080"/><rect x="8" y="9" width="1" height="1" fill="#808080"/><rect x="10" y="5" width="1" height="1" fill="#808080"/><rect x="10" y="7" width="1" height="1" fill="#808080"/><rect x="10" y="9" width="1" height="1" fill="#808080"/><rect x="12" y="5" width="1" height="1" fill="#808080"/><rect x="12" y="7" width="1" height="1" fill="#808080"/><rect x="12" y="9" width="1" height="1" fill="#808080"/><rect x="14" y="5" width="1" height="1" fill="#808080"/><rect x="14" y="7" width="1" height="1" fill="#808080"/><rect x="14" y="9" width="1" height="1" fill="#808080"/><rect x="1" y="9" width="4" height="7" fill="#000"/><rect x="2" y="10" width="2" height="5" fill="#fff"/><rect x="0" y="11" width="1" height="1" fill="#000"/><rect x="0" y="13" width="1" height="1" fill="#000"/></svg><svg style="left:129px;top:106px" width="16" height="16" viewBox="0 0 16 16" shape-rendering="crispEdges" overflow="visible"><rect x="1" y="5" width="11" height="10" fill="#000"/><rect x="2" y="7" width="9" height="7" fill="#fff"/><rect x="3" y="9" width="7" height="1" fill="#000"/><rect x="3" y="11" width="7" height="1" fill="#000"/><g shape-rendering="auto"><path d="M2,5 L6,1.5 L10,5" fill="#fff" stroke="#000" stroke-width="1" /><path d="M4,5 L6,3 L8,5" fill="none" stroke="#808080" stroke-width="1" shape-rendering="auto"/></g><path d="M9,4 L13,1 V2 H15 V0 H16 V7 H15 V5 H13 V6 Z" fill="#000080" stroke="none" stroke-width="1" /></svg><div style="left:153px;top:103px;width:2px;height:22px;border-left:1px solid #808080;border-right:1px solid #fff"></div><svg style="left:160px;top:106px" width="16" height="16" viewBox="0 0 16 16" shape-rendering="crispEdges" overflow="visible"><path d="M0.5,7.5 H2.5 L5.5,10.5 V14.5 H0.5 Z" fill="#fff" stroke="#000" stroke-width="1" /><path d="M2.5,7.5 V10.5 H5.5" fill="none" stroke="#000" stroke-width="1" /><path d="M8.5,7.5 H10.5 L13.5,10.5 V14.5 H8.5 Z" fill="#fff" stroke="#000" stroke-width="1" /><path d="M10.5,7.5 V10.5 H13.5" fill="none" stroke="#000" stroke-width="1" /><g shape-rendering="auto"><path d="M4,1 L11,7 M11,1 L4,7" fill="none" stroke="#000080" stroke-width="1.1" shape-rendering="auto"/></g><rect x="2" y="0" width="2" height="2" fill="#000"/><rect x="11" y="0" width="2" height="2" fill="#000"/><rect x="3" y="0" width="1" height="1" fill="#fff"/><rect x="12" y="0" width="1" height="1" fill="#fff"/></svg><svg style="left:183px;top:106px" width="16" height="16" viewBox="0 0 16 16" shape-rendering="crispEdges" overflow="visible"><path d="M1.5,1.5 H10.5 L12.5,3.5 L10.5,5.5 H1.5 Z" fill="#ffff00" stroke="#808000" stroke-width="1" /><rect x="3" y="3" width="1" height="1" fill="#fff"/><rect x="5" y="3" width="1" height="1" fill="#fff"/><rect x="7" y="3" width="1" height="1" fill="#fff"/><rect x="9" y="3" width="1" height="1" fill="#fff"/><rect x="11" y="3" width="2" height="2" fill="#000"/><g shape-rendering="auto"><path d="M13,4.5 Q14.5,9 12,9.5 H2.5 V11" fill="none" stroke="#000" stroke-width="1" shape-rendering="auto"/></g><path d="M7.5,9.5 V11 M12.5,9.5 V11" fill="none" stroke="#000" stroke-width="1" /><rect x="1" y="12" width="2" height="2" fill="#000"/><rect x="3" y="13" width="1" height="1" fill="#808080"/><rect x="6" y="12" width="2" height="2" fill="#000"/><rect x="8" y="13" width="1" height="1" fill="#808080"/><rect x="11" y="12" width="2" height="2" fill="#000"/><rect x="13" y="13" width="1" height="1" fill="#808080"/></svg><svg style="left:206px;top:106px" width="16" height="16" viewBox="0 0 16 16" shape-rendering="crispEdges" overflow="visible"><path d="M1.5,0.5 H14.5 V9.5 L10.5,13.5 H7 L5,15.5 H1.5 Z" fill="#fff" stroke="#000" stroke-width="1" /><rect x="4" y="1" width="1" height="14" fill="#008000"/><rect x="5" y="4" width="2" height="1" fill="#000"/><rect x="7" y="2" width="1" height="5" fill="#000"/><rect x="10" y="2" width="1" height="5" fill="#000"/><rect x="11" y="4" width="3" height="1" fill="#000"/></svg><svg style="left:229px;top:106px" width="16" height="16" viewBox="0 0 16 16" shape-rendering="crispEdges" overflow="visible"><rect x="1" y="0" width="14" height="15" fill="#000"/><rect x="2" y="2" width="12" height="12" fill="#fff"/><rect x="4" y="5" width="8" height="3" fill="#000080"/><rect x="5" y="6" width="6" height="1" fill="#fff"/><rect x="4" y="10" width="2" height="1" fill="#808080"/><rect x="7" y="10" width="5" height="1" fill="#808080"/><rect x="4" y="12" width="2" height="1" fill="#808080"/><rect x="7" y="12" width="5" height="1" fill="#808080"/></svg><svg style="left:252px;top:106px" width="16" height="16" viewBox="0 0 16 16" shape-rendering="crispEdges" overflow="visible"><rect x="1" y="0" width="14" height="15" fill="#000"/><rect x="2" y="2" width="12" height="12" fill="#fff"/><text x="2.5" y="8.5" font-family="Liberation Sans,sans-serif" font-size="6" font-weight="bold" fill="#0000ff" style="text-rendering:geometricPrecision">001</text><text x="2.5" y="13.5" font-family="Liberation Sans,sans-serif" font-size="6" font-weight="bold" fill="#0000ff" style="text-rendering:geometricPrecision">002</text></svg><div style="left:276px;top:103px;width:2px;height:22px;border-left:1px solid #808080;border-right:1px solid #fff"></div><svg style="left:283px;top:106px" width="16" height="16" viewBox="0 0 16 16" shape-rendering="crispEdges" overflow="visible"><g transform="translate(1,1)"><g stroke="#fff" stroke-width="0.6"><text x="0" y="9" font-family="Liberation Serif,sans-serif" font-size="13" font-weight="bold" fill="#fff" style="text-rendering:geometricPrecision">10</text></g><text x="0" y="15.5" font-family="Liberation Sans,sans-serif" font-size="6.5" font-weight="normal" fill="#fff" style="text-rendering:geometricPrecision">(2)(2)</text></g><g stroke="#808080" stroke-width="0.6"><text x="0" y="9" font-family="Liberation Serif,sans-serif" font-size="13" font-weight="bold" fill="#808080" style="text-rendering:geometricPrecision">10</text></g><text x="0" y="15.5" font-family="Liberation Sans,sans-serif" font-size="6.5" font-weight="normal" fill="#808080" style="text-rendering:geometricPrecision">(2)(2)</text></svg><svg style="left:306px;top:106px" width="16" height="16" viewBox="0 0 16 16" shape-rendering="crispEdges" overflow="visible"><g transform="translate(1,1)"><g stroke="#fff" stroke-width="0.6"><text x="0" y="9" font-family="Liberation Serif,sans-serif" font-size="13" font-weight="bold" fill="#fff" style="text-rendering:geometricPrecision">10</text></g><text x="0" y="15.5" font-family="Liberation Sans,sans-serif" font-size="6.5" font-weight="normal" fill="#fff" style="text-rendering:geometricPrecision">(2)(2)</text></g><g stroke="#808080" stroke-width="0.6"><text x="0" y="9" font-family="Liberation Serif,sans-serif" font-size="13" font-weight="bold" fill="#808080" style="text-rendering:geometricPrecision">10</text></g><text x="0" y="15.5" font-family="Liberation Sans,sans-serif" font-size="6.5" font-weight="normal" fill="#808080" style="text-rendering:geometricPrecision">(2)(2)</text></svg><svg style="left:329px;top:106px" width="16" height="16" viewBox="0 0 16 16" shape-rendering="crispEdges" overflow="visible"><g transform="translate(1,1)"><g stroke="#fff" stroke-width="0.6"><text x="0" y="9" font-family="Liberation Serif,sans-serif" font-size="13" font-weight="bold" fill="#fff" style="text-rendering:geometricPrecision">16</text></g><text x="0" y="15.5" font-family="Liberation Sans,sans-serif" font-size="6.5" font-weight="normal" fill="#fff" style="text-rendering:geometricPrecision">(2)(2)</text></g><g stroke="#808080" stroke-width="0.6"><text x="0" y="9" font-family="Liberation Serif,sans-serif" font-size="13" font-weight="bold" fill="#808080" style="text-rendering:geometricPrecision">16</text></g><text x="0" y="15.5" font-family="Liberation Sans,sans-serif" font-size="6.5" font-weight="normal" fill="#808080" style="text-rendering:geometricPrecision">(2)(2)</text></svg><div style="left:353px;top:103px;width:2px;height:22px;border-left:1px solid #808080;border-right:1px solid #fff"></div><svg style="left:360px;top:106px" width="16" height="16" viewBox="0 0 16 16" shape-rendering="crispEdges" overflow="visible"><g transform="translate(1,1)"><path d="M6,0 L12,5 H10 V7 H14 V9 H10 V13 H3 V11 H1 V9 H3 V5 H0 Z" fill="#fff" stroke="none" stroke-width="1" /></g><path d="M6,0 L12,5 H10 V7 H14 V9 H10 V13 H3 V11 H1 V9 H3 V5 H0 Z" fill="#808080" stroke="none" stroke-width="1" /></svg><svg style="left:383px;top:106px" width="16" height="16" viewBox="0 0 16 16" shape-rendering="crispEdges" overflow="visible"><g transform="translate(1,1)"><path d="M1,0 H7 L9,3 H11 V6 H14 V8 H11 V13 H4 V11 H2 V9 H4 V5 L1,3 Z" fill="#fff" stroke="none" stroke-width="1" /></g><path d="M1,0 H7 L9,3 H11 V6 H14 V8 H11 V13 H4 V11 H2 V9 H4 V5 L1,3 Z" fill="#808080" stroke="none" stroke-width="1" /></svg><svg style="left:406px;top:106px" width="16" height="16" viewBox="0 0 16 16" shape-rendering="crispEdges" overflow="visible"><g transform="translate(1,1)"><rect x="3" y="0" width="3" height="1" fill="#fff"/><rect x="4" y="2" width="3" height="1" fill="#fff"/><rect x="3" y="4" width="3" height="1" fill="#fff"/><rect x="4" y="6" width="3" height="1" fill="#fff"/><rect x="3" y="8" width="3" height="1" fill="#fff"/><path d="M7,0 H14 V6 H11 V9 H7 Z" fill="#fff" stroke="none" stroke-width="1" /><rect x="0" y="4" width="3" height="1" fill="#fff"/><rect x="0" y="7" width="3" height="1" fill="#fff"/><text x="0" y="15.5" font-family="Liberation Sans,sans-serif" font-size="6.5" font-weight="normal" fill="#fff" style="text-rendering:geometricPrecision">(2)(2)</text></g><rect x="3" y="0" width="3" height="1" fill="#808080"/><rect x="4" y="2" width="3" height="1" fill="#808080"/><rect x="3" y="4" width="3" height="1" fill="#808080"/><rect x="4" y="6" width="3" height="1" fill="#808080"/><rect x="3" y="8" width="3" height="1" fill="#808080"/><path d="M7,0 H14 V6 H11 V9 H7 Z" fill="#808080" stroke="none" stroke-width="1" /><rect x="0" y="4" width="3" height="1" fill="#808080"/><rect x="0" y="7" width="3" height="1" fill="#808080"/><text x="0" y="15.5" font-family="Liberation Sans,sans-serif" font-size="6.5" font-weight="normal" fill="#808080" style="text-rendering:geometricPrecision">(2)(2)</text></svg>
<div style="left:433px;top:99px;width:334px;height:30px;border-top:1px solid #fff;border-left:1px solid #fff;border-bottom:1px solid #808080;border-right:1px solid #808080"></div><div style="left:437px;top:101px;width:3px;height:26px;border-top:1px solid #fff;border-left:1px solid #fff;border-bottom:1px solid #808080;border-right:1px solid #808080"></div><div style="left:441px;top:101px;width:3px;height:26px;border-top:1px solid #fff;border-left:1px solid #fff;border-bottom:1px solid #808080;border-right:1px solid #808080"></div><svg style="left:448px;top:106px" width="16" height="16" viewBox="0 0 16 16" shape-rendering="crispEdges" overflow="visible"><rect x="1" y="0" width="14" height="14" fill="#000"/><rect x="3" y="2" width="10" height="5" fill="#00ffff"/><rect x="3" y="9" width="10" height="4" fill="#fff"/><rect x="4" y="10" width="1" height="3" fill="#000"/><rect x="4" y="8" width="1" height="1" fill="#00c000"/><rect x="8" y="5" width="6" height="5" fill="#ffff00"/><rect x="9" y="3" width="4" height="3" fill="#ffff00"/><rect x="10" y="4" width="2" height="2" fill="#00ffff"/><rect x="10" y="7" width="2" height="2" fill="#000"/><rect x="8" y="5" width="1" height="5" fill="#000"/><rect x="13" y="5" width="1" height="5" fill="#000"/><rect x="8" y="9" width="6" height="1" fill="#000"/></svg><svg style="left:471px;top:106px" width="16" height="16" viewBox="0 0 16 16" shape-rendering="crispEdges" overflow="visible"><rect x="1" y="1" width="6" height="6" fill="#ffff00"/><rect x="2" y="0" width="4" height="2" fill="#ffff00"/><rect x="1" y="1" width="1" height="6" fill="#000"/><rect x="6" y="1" width="1" height="6" fill="#000"/><rect x="3" y="3" width="2" height="2" fill="#000"/><rect x="5" y="3" width="11" height="10" fill="#000"/><rect x="7" y="5" width="7" height="5" fill="#4060ff"/><rect x="9" y="7" width="3" height="2" fill="#0000c0"/><rect x="4" y="13" width="12" height="2" fill="#000"/><rect x="5" y="13" width="10" height="1" fill="#fff"/><rect x="3" y="5" width="3" height="4" fill="#ffff00"/><rect x="3" y="5" width="1" height="4" fill="#000"/></svg><div style="left:495px;top:103px;width:2px;height:22px;border-left:1px solid #808080;border-right:1px solid #fff"></div><svg style="left:502px;top:106px" width="16" height="16" viewBox="0 0 16 16" shape-rendering="crispEdges" overflow="visible"><g transform="translate(1,1)"><rect x="1" y="1" width="10" height="2" fill="#fff"/><rect x="1" y="4" width="7" height="1" fill="#fff"/><rect x="1" y="6" width="10" height="2" fill="#fff"/><rect x="3" y="9" width="8" height="1" fill="#fff"/><rect x="3" y="11" width="6" height="2" fill="#fff"/><path d="M10,3 H15 V10 L12.5,14 L10,10 Z" fill="#fff" stroke="none" stroke-width="1" /></g><rect x="1" y="1" width="10" height="2" fill="#808080"/><rect x="1" y="4" width="7" height="1" fill="#808080"/><rect x="1" y="6" width="10" height="2" fill="#808080"/><rect x="3" y="9" width="8" height="1" fill="#808080"/><rect x="3" y="11" width="6" height="2" fill="#808080"/><path d="M10,3 H15 V10 L12.5,14 L10,10 Z" fill="#808080" stroke="none" stroke-width="1" /></svg><div style="left:526px;top:103px;width:2px;height:22px;border-left:1px solid #808080;border-right:1px solid #fff"></div><svg style="left:533px;top:106px" width="16" height="16" viewBox="0 0 16 16" shape-rendering="crispEdges" overflow="visible"><g transform="translate(1,1)"><path d="M3,8 L1,6 L2,5 L4,7 V2 H5 V6 H6 V1 H7 V6 H8 V1 H9 V6 H10 V2 H11 V10 L9,14 H5 L3,11 Z" fill="#fff" stroke="none" stroke-width="1" /><rect x="12" y="9" width="2" height="5" fill="#fff"/><rect x="9" y="11" width="2" height="3" fill="#fff"/></g><path d="M3,8 L1,6 L2,5 L4,7 V2 H5 V6 H6 V1 H7 V6 H8 V1 H9 V6 H10 V2 H11 V10 L9,14 H5 L3,11 Z" fill="#808080" stroke="none" stroke-width="1" /><rect x="12" y="9" width="2" height="5" fill="#808080"/><rect x="9" y="11" width="2" height="3" fill="#808080"/></svg><svg style="left:556px;top:106px" width="16" height="16" viewBox="0 0 16 16" shape-rendering="crispEdges" overflow="visible"><g transform="translate(1,1)"><path d="M3,8 L1,6 L2,5 L4,7 V2 H5 V6 H6 V1 H7 V6 H8 V1 H9 V6 H10 V2 H11 V10 L9,14 H5 L3,11 Z" fill="#fff" stroke="none" stroke-width="1" /><rect x="12" y="9" width="2" height="5" fill="#fff"/><rect x="9" y="11" width="2" height="3" fill="#fff"/><rect x="2" y="9" width="2" height="2" fill="#fff"/><rect x="6" y="7" width="3" height="3" fill="#fff"/></g><path d="M3,8 L1,6 L2,5 L4,7 V2 H5 V6 H6 V1 H7 V6 H8 V1 H9 V6 H10 V2 H11 V10 L9,14 H5 L3,11 Z" fill="#808080" stroke="none" stroke-width="1" /><rect x="12" y="9" width="2" height="5" fill="#808080"/><rect x="9" y="11" width="2" height="3" fill="#808080"/><rect x="2" y="9" width="2" height="2" fill="#808080"/><rect x="6" y="7" width="3" height="3" fill="#808080"/></svg><svg style="left:579px;top:106px" width="16" height="16" viewBox="0 0 16 16" shape-rendering="crispEdges" overflow="visible"><g transform="translate(1,1)"><path d="M3,1 L15,7.5 L3,14 Z" fill="#fff" stroke="none" stroke-width="1" /></g><path d="M3,1 L15,7.5 L3,14 Z" fill="#808080" stroke="none" stroke-width="1" /></svg><svg style="left:602px;top:106px" width="16" height="16" viewBox="0 0 16 16" shape-rendering="crispEdges" overflow="visible"><g transform="translate(1,1)"><rect x="3" y="2" width="11" height="12" fill="#fff"/></g><rect x="3" y="2" width="11" height="12" fill="#808080"/></svg><svg style="left:625px;top:106px" width="16" height="16" viewBox="0 0 16 16" shape-rendering="crispEdges" overflow="visible"><g transform="translate(1,1)"><rect x="3" y="2" width="4" height="12" fill="#fff"/><rect x="9" y="2" width="4" height="12" fill="#fff"/></g><rect x="3" y="2" width="4" height="12" fill="#808080"/><rect x="9" y="2" width="4" height="12" fill="#808080"/></svg><svg style="left:648px;top:106px" width="16" height="16" viewBox="0 0 16 16" shape-rendering="crispEdges" overflow="visible"><g transform="translate(1,1)"><path d="M2,1 L11,7.5 L2,14 Z" fill="#fff" stroke="none" stroke-width="1" /><rect x="11" y="1" width="3" height="13" fill="#fff"/></g><path d="M2,1 L11,7.5 L2,14 Z" fill="#808080" stroke="none" stroke-width="1" /><rect x="11" y="1" width="3" height="13" fill="#808080"/></svg><svg style="left:671px;top:106px" width="16" height="16" viewBox="0 0 16 16" shape-rendering="crispEdges" overflow="visible"><g transform="translate(1,1)"><rect x="2" y="1" width="2" height="7" fill="#fff"/><rect x="5" y="1" width="2" height="5" fill="#fff"/><path d="M2,8 H12 V13 H5 L2,10 Z" fill="#fff" stroke="none" stroke-width="1" /><rect x="9" y="3" width="3" height="6" fill="#fff"/><rect x="12" y="5" width="3" height="3" fill="#fff"/></g><rect x="2" y="1" width="2" height="7" fill="#808080"/><rect x="5" y="1" width="2" height="5" fill="#808080"/><path d="M2,8 H12 V13 H5 L2,10 Z" fill="#808080" stroke="none" stroke-width="1" /><rect x="9" y="3" width="3" height="6" fill="#808080"/><rect x="12" y="5" width="3" height="3" fill="#808080"/></svg><svg style="left:694px;top:106px" width="16" height="16" viewBox="0 0 16 16" shape-rendering="crispEdges" overflow="visible"><g transform="translate(1,1)"><rect x="1" y="5" width="2" height="8" fill="#fff"/><path d="M1,8 H13 V13 H1 Z" fill="#fff" stroke="none" stroke-width="1" /><rect x="9" y="1" width="3" height="8" fill="#fff"/><path d="M5,3 H9 V6 H5 Z" fill="#fff" stroke="none" stroke-width="1" /><rect x="12" y="5" width="3" height="3" fill="#fff"/></g><rect x="1" y="5" width="2" height="8" fill="#808080"/><path d="M1,8 H13 V13 H1 Z" fill="#808080" stroke="none" stroke-width="1" /><rect x="9" y="1" width="3" height="8" fill="#808080"/><path d="M5,3 H9 V6 H5 Z" fill="#808080" stroke="none" stroke-width="1" /><rect x="12" y="5" width="3" height="3" fill="#808080"/></svg><svg style="left:717px;top:106px" width="16" height="16" viewBox="0 0 16 16" shape-rendering="crispEdges" overflow="visible"><g transform="translate(1,1)"><path d="M1,1 L8,7.5 L1,14 Z" fill="#fff" stroke="none" stroke-width="1" /><path d="M8,1 L15,7.5 L8,14 Z" fill="#fff" stroke="none" stroke-width="1" /></g><path d="M1,1 L8,7.5 L1,14 Z" fill="#808080" stroke="none" stroke-width="1" /><path d="M8,1 L15,7.5 L8,14 Z" fill="#808080" stroke="none" stroke-width="1" /></svg><svg style="left:740px;top:106px" width="16" height="16" viewBox="0 0 16 16" shape-rendering="crispEdges" overflow="visible"><g transform="translate(1,1)"><path d="M1,1 L11,6 L1,6 Z" fill="#fff" stroke="none" stroke-width="1" /><path d="M1,9 L11,9 L1,14 Z" fill="#fff" stroke="none" stroke-width="1" /><path d="M2,5 H11 V10 H2 L7,7.5 Z" fill="#fff" stroke="none" stroke-width="1" /><rect x="12" y="1" width="3" height="13" fill="#fff"/></g><path d="M1,1 L11,6 L1,6 Z" fill="#808080" stroke="none" stroke-width="1" /><path d="M1,9 L11,9 L1,14 Z" fill="#808080" stroke="none" stroke-width="1" /><path d="M2,5 H11 V10 H2 L7,7.5 Z" fill="#808080" stroke="none" stroke-width="1" /><rect x="12" y="1" width="3" height="13" fill="#808080"/></svg>
<div style="left:767px;top:99px;width:257px;height:30px;border-top:1px solid #fff;border-left:1px solid #fff;border-bottom:1px solid #808080;border-right:1px solid #808080"></div><div style="left:771px;top:101px;width:3px;height:26px;border-top:1px solid #fff;border-left:1px solid #fff;border-bottom:1px solid #808080;border-right:1px solid #808080"></div><div style="left:775px;top:101px;width:3px;height:26px;border-top:1px solid #fff;border-left:1px solid #fff;border-bottom:1px solid #808080;border-right:1px solid #808080"></div><svg style="left:783px;top:106px" width="16" height="16" viewBox="0 0 16 16" shape-rendering="crispEdges" overflow="visible"><g transform="translate(1,1)"><rect x="1" y="4" width="13" height="8" fill="#fff"/><rect x="7" y="12" width="2" height="1" fill="#fff"/></g><rect x="1" y="4" width="13" height="8" fill="#808080"/><rect x="2" y="5" width="1" height="1" fill="#d4d0c8"/><rect x="2" y="7" width="1" height="1" fill="#d4d0c8"/><rect x="2" y="9" width="1" height="1" fill="#d4d0c8"/><rect x="3" y="6" width="1" height="1" fill="#d4d0c8"/><rect x="3" y="8" width="1" height="1" fill="#d4d0c8"/><rect x="4" y="5" width="1" height="1" fill="#d4d0c8"/><rect x="4" y="7" width="1" height="1" fill="#d4d0c8"/><rect x="4" y="9" width="1" height="1" fill="#d4d0c8"/><rect x="5" y="6" width="1" height="1" fill="#d4d0c8"/><rect x="5" y="8" width="1" height="1" fill="#d4d0c8"/><rect x="6" y="5" width="1" height="1" fill="#d4d0c8"/><rect x="6" y="7" width="1" height="1" fill="#d4d0c8"/><rect x="6" y="9" width="1" height="1" fill="#d4d0c8"/><rect x="7" y="6" width="1" height="1" fill="#d4d0c8"/><rect x="7" y="8" width="1" height="1" fill="#d4d0c8"/><rect x="8" y="5" width="1" height="1" fill="#d4d0c8"/><rect x="8" y="7" width="1" height="1" fill="#d4d0c8"/><rect x="8" y="9" width="1" height="1" fill="#d4d0c8"/><rect x="9" y="6" width="1" height="1" fill="#d4d0c8"/><rect x="9" y="8" width="1" height="1" fill="#d4d0c8"/><rect x="10" y="5" width="1" height="1" fill="#d4d0c8"/><rect x="10" y="7" width="1" height="1" fill="#d4d0c8"/><rect x="10" y="9" width="1" height="1" fill="#d4d0c8"/><rect x="11" y="6" width="1" height="1" fill="#d4d0c8"/><rect x="11" y="8" width="1" height="1" fill="#d4d0c8"/><rect x="12" y="5" width="1" height="1" fill="#d4d0c8"/><rect x="12" y="7" width="1" height="1" fill="#d4d0c8"/><rect x="12" y="9" width="1" height="1" fill="#d4d0c8"/><rect x="7" y="12" width="2" height="1" fill="#808080"/></svg><svg style="left:806px;top:106px" width="16" height="16" viewBox="0 0 16 16" shape-rendering="crispEdges" overflow="visible"><g transform="translate(1,1)"><rect x="0" y="3" width="15" height="9" fill="#fff"/><rect x="7" y="12" width="2" height="1" fill="#fff"/></g><rect x="0" y="3" width="15" height="9" fill="#808080"/><rect x="1" y="4" width="1" height="1" fill="#d4d0c8"/><rect x="1" y="6" width="1" height="1" fill="#d4d0c8"/><rect x="1" y="8" width="1" height="1" fill="#d4d0c8"/><rect x="2" y="5" width="1" height="1" fill="#d4d0c8"/><rect x="2" y="7" width="1" height="1" fill="#d4d0c8"/><rect x="2" y="9" width="1" height="1" fill="#d4d0c8"/><rect x="3" y="4" width="1" height="1" fill="#d4d0c8"/><rect x="3" y="6" width="1" height="1" fill="#d4d0c8"/><rect x="3" y="8" width="1" height="1" fill="#d4d0c8"/><rect x="4" y="5" width="1" height="1" fill="#d4d0c8"/><rect x="4" y="7" width="1" height="1" fill="#d4d0c8"/><rect x="4" y="9" width="1" height="1" fill="#d4d0c8"/><rect x="5" y="4" width="1" height="1" fill="#d4d0c8"/><rect x="5" y="6" width="1" height="1" fill="#d4d0c8"/><rect x="5" y="8" width="1" height="1" fill="#d4d0c8"/><rect x="6" y="5" width="1" height="1" fill="#d4d0c8"/><rect x="6" y="7" width="1" height="1" fill="#d4d0c8"/><rect x="6" y="9" width="1" height="1" fill="#d4d0c8"/><rect x="7" y="4" width="1" height="1" fill="#d4d0c8"/><rect x="7" y="6" width="1" height="1" fill="#d4d0c8"/><rect x="7" y="8" width="1" height="1" fill="#d4d0c8"/><rect x="8" y="5" width="1" height="1" fill="#d4d0c8"/><rect x="8" y="7" width="1" height="1" fill="#d4d0c8"/><rect x="8" y="9" width="1" height="1" fill="#d4d0c8"/><rect x="9" y="4" width="1" height="1" fill="#d4d0c8"/><rect x="9" y="6" width="1" height="1" fill="#d4d0c8"/><rect x="9" y="8" width="1" height="1" fill="#d4d0c8"/><rect x="10" y="5" width="1" height="1" fill="#d4d0c8"/><rect x="10" y="7" width="1" height="1" fill="#d4d0c8"/><rect x="10" y="9" width="1" height="1" fill="#d4d0c8"/><rect x="11" y="4" width="1" height="1" fill="#d4d0c8"/><rect x="11" y="6" width="1" height="1" fill="#d4d0c8"/><rect x="11" y="8" width="1" height="1" fill="#d4d0c8"/><rect x="12" y="5" width="1" height="1" fill="#d4d0c8"/><rect x="12" y="7" width="1" height="1" fill="#d4d0c8"/><rect x="12" y="9" width="1" height="1" fill="#d4d0c8"/><rect x="13" y="4" width="1" height="1" fill="#d4d0c8"/><rect x="13" y="6" width="1" height="1" fill="#d4d0c8"/><rect x="13" y="8" width="1" height="1" fill="#d4d0c8"/><rect x="7" y="12" width="2" height="1" fill="#808080"/></svg><svg style="left:829px;top:106px" width="16" height="16" viewBox="0 0 16 16" shape-rendering="crispEdges" overflow="visible"><g transform="translate(1,1)"><rect x="1" y="4" width="13" height="8" fill="#fff"/><path d="M5,0 H11 L8,3 Z" fill="#fff" stroke="none" stroke-width="1" /><rect x="7" y="3" width="2" height="1" fill="#fff"/><rect x="7" y="12" width="2" height="1" fill="#fff"/></g><rect x="1" y="4" width="13" height="8" fill="#808080"/><rect x="2" y="5" width="1" height="1" fill="#d4d0c8"/><rect x="2" y="7" width="1" height="1" fill="#d4d0c8"/><rect x="2" y="9" width="1" height="1" fill="#d4d0c8"/><rect x="3" y="6" width="1" height="1" fill="#d4d0c8"/><rect x="3" y="8" width="1" height="1" fill="#d4d0c8"/><rect x="4" y="5" width="1" height="1" fill="#d4d0c8"/><rect x="4" y="7" width="1" height="1" fill="#d4d0c8"/><rect x="4" y="9" width="1" height="1" fill="#d4d0c8"/><rect x="5" y="6" width="1" height="1" fill="#d4d0c8"/><rect x="5" y="8" width="1" height="1" fill="#d4d0c8"/><rect x="6" y="5" width="1" height="1" fill="#d4d0c8"/><rect x="6" y="7" width="1" height="1" fill="#d4d0c8"/><rect x="6" y="9" width="1" height="1" fill="#d4d0c8"/><rect x="7" y="6" width="1" height="1" fill="#d4d0c8"/><rect x="7" y="8" width="1" height="1" fill="#d4d0c8"/><rect x="8" y="5" width="1" height="1" fill="#d4d0c8"/><rect x="8" y="7" width="1" height="1" fill="#d4d0c8"/><rect x="8" y="9" width="1" height="1" fill="#d4d0c8"/><rect x="9" y="6" width="1" height="1" fill="#d4d0c8"/><rect x="9" y="8" width="1" height="1" fill="#d4d0c8"/><rect x="10" y="5" width="1" height="1" fill="#d4d0c8"/><rect x="10" y="7" width="1" height="1" fill="#d4d0c8"/><rect x="10" y="9" width="1" height="1" fill="#d4d0c8"/><rect x="11" y="6" width="1" height="1" fill="#d4d0c8"/><rect x="11" y="8" width="1" height="1" fill="#d4d0c8"/><rect x="12" y="5" width="1" height="1" fill="#d4d0c8"/><rect x="12" y="7" width="1" height="1" fill="#d4d0c8"/><rect x="12" y="9" width="1" height="1" fill="#d4d0c8"/><path d="M5,0 H11 L8,3 Z" fill="#808080" stroke="none" stroke-width="1" /><rect x="7" y="3" width="2" height="1" fill="#808080"/><rect x="7" y="12" width="2" height="1" fill="#808080"/></svg><svg style="left:852px;top:106px" width="16" height="16" viewBox="0 0 16 16" shape-rendering="crispEdges" overflow="visible"><g transform="translate(1,1)"><rect x="1" y="3" width="13" height="8" fill="#fff"/><rect x="7" y="1" width="1" height="2" fill="#fff"/><rect x="7" y="11" width="2" height="2" fill="#fff"/><rect x="4" y="13" width="8" height="1" fill="#fff"/></g><rect x="1" y="3" width="13" height="8" fill="#808080"/><rect x="2" y="4" width="1" height="1" fill="#d4d0c8"/><rect x="2" y="6" width="1" height="1" fill="#d4d0c8"/><rect x="2" y="8" width="1" height="1" fill="#d4d0c8"/><rect x="3" y="5" width="1" height="1" fill="#d4d0c8"/><rect x="3" y="7" width="1" height="1" fill="#d4d0c8"/><rect x="4" y="4" width="1" height="1" fill="#d4d0c8"/><rect x="4" y="6" width="1" height="1" fill="#d4d0c8"/><rect x="4" y="8" width="1" height="1" fill="#d4d0c8"/><rect x="5" y="5" width="1" height="1" fill="#d4d0c8"/><rect x="5" y="7" width="1" height="1" fill="#d4d0c8"/><rect x="6" y="4" width="1" height="1" fill="#d4d0c8"/><rect x="6" y="6" width="1" height="1" fill="#d4d0c8"/><rect x="6" y="8" width="1" height="1" fill="#d4d0c8"/><rect x="7" y="5" width="1" height="1" fill="#d4d0c8"/><rect x="7" y="7" width="1" height="1" fill="#d4d0c8"/><rect x="8" y="4" width="1" height="1" fill="#d4d0c8"/><rect x="8" y="6" width="1" height="1" fill="#d4d0c8"/><rect x="8" y="8" width="1" height="1" fill="#d4d0c8"/><rect x="9" y="5" width="1" height="1" fill="#d4d0c8"/><rect x="9" y="7" width="1" height="1" fill="#d4d0c8"/><rect x="10" y="4" width="1" height="1" fill="#d4d0c8"/><rect x="10" y="6" width="1" height="1" fill="#d4d0c8"/><rect x="10" y="8" width="1" height="1" fill="#d4d0c8"/><rect x="11" y="5" width="1" height="1" fill="#d4d0c8"/><rect x="11" y="7" width="1" height="1" fill="#d4d0c8"/><rect x="12" y="4" width="1" height="1" fill="#d4d0c8"/><rect x="12" y="6" width="1" height="1" fill="#d4d0c8"/><rect x="12" y="8" width="1" height="1" fill="#d4d0c8"/><rect x="7" y="1" width="1" height="2" fill="#808080"/><rect x="7" y="11" width="2" height="2" fill="#808080"/><rect x="4" y="13" width="8" height="1" fill="#808080"/></svg><svg style="left:875px;top:106px" width="16" height="16" viewBox="0 0 16 16" shape-rendering="crispEdges" overflow="visible"><g transform="translate(1,1)"><rect x="1" y="2" width="13" height="1" fill="#fff"/><rect x="1" y="0" width="13" height="1" fill="#fff"/><rect x="7" y="2" width="1" height="11" fill="#fff"/><rect x="3" y="7" width="9" height="1" fill="#fff"/></g><rect x="1" y="2" width="13" height="1" fill="#808080"/><rect x="1" y="0" width="13" height="1" fill="#808080"/><rect x="7" y="2" width="1" height="11" fill="#808080"/><rect x="3" y="7" width="9" height="1" fill="#808080"/></svg><svg style="left:898px;top:106px" width="16" height="16" viewBox="0 0 16 16" shape-rendering="crispEdges" overflow="visible"><g transform="translate(1,1)"><rect x="3" y="0" width="10" height="1" fill="#fff"/><rect x="3" y="2" width="10" height="1" fill="#fff"/><rect x="7" y="2" width="1" height="5" fill="#fff"/><rect x="1" y="7" width="14" height="1" fill="#fff"/><rect x="3" y="5" width="1" height="6" fill="#fff"/><rect x="12" y="5" width="1" height="6" fill="#fff"/><rect x="1" y="10" width="5" height="1" fill="#fff"/><rect x="10" y="10" width="5" height="1" fill="#fff"/></g><rect x="3" y="0" width="10" height="1" fill="#808080"/><rect x="3" y="2" width="10" height="1" fill="#808080"/><rect x="7" y="2" width="1" height="5" fill="#808080"/><rect x="1" y="7" width="14" height="1" fill="#808080"/><rect x="3" y="5" width="1" height="6" fill="#808080"/><rect x="12" y="5" width="1" height="6" fill="#808080"/><rect x="1" y="10" width="5" height="1" fill="#808080"/><rect x="10" y="10" width="5" height="1" fill="#808080"/></svg><svg style="left:921px;top:106px" width="16" height="16" viewBox="0 0 16 16" shape-rendering="crispEdges" overflow="visible"><g transform="translate(1,1)"><rect x="3" y="0" width="1" height="9" fill="#fff"/><rect x="12" y="0" width="1" height="9" fill="#fff"/><rect x="1" y="3" width="14" height="1" fill="#fff"/><rect x="1" y="7" width="14" height="1" fill="#fff"/><rect x="3" y="11" width="10" height="1" fill="#fff"/><rect x="3" y="13" width="10" height="1" fill="#fff"/><rect x="7" y="7" width="1" height="4" fill="#fff"/></g><rect x="3" y="0" width="1" height="9" fill="#808080"/><rect x="12" y="0" width="1" height="9" fill="#808080"/><rect x="1" y="3" width="14" height="1" fill="#808080"/><rect x="1" y="7" width="14" height="1" fill="#808080"/><rect x="3" y="11" width="10" height="1" fill="#808080"/><rect x="3" y="13" width="10" height="1" fill="#808080"/><rect x="7" y="7" width="1" height="4" fill="#808080"/></svg><svg style="left:944px;top:106px" width="16" height="16" viewBox="0 0 16 16" shape-rendering="crispEdges" overflow="visible"><g transform="translate(1,1)"><rect x="7" y="0" width="1" height="9" fill="#fff"/><rect x="3" y="3" width="9" height="1" fill="#fff"/><rect x="1" y="7" width="14" height="1" fill="#fff"/><rect x="3" y="7" width="1" height="4" fill="#fff"/><rect x="12" y="7" width="1" height="4" fill="#fff"/><rect x="1" y="11" width="14" height="1" fill="#fff"/><rect x="1" y="13" width="14" height="1" fill="#fff"/></g><rect x="7" y="0" width="1" height="9" fill="#808080"/><rect x="3" y="3" width="9" height="1" fill="#808080"/><rect x="1" y="7" width="14" height="1" fill="#808080"/><rect x="3" y="7" width="1" height="4" fill="#808080"/><rect x="12" y="7" width="1" height="4" fill="#808080"/><rect x="1" y="11" width="14" height="1" fill="#808080"/><rect x="1" y="13" width="14" height="1" fill="#808080"/></svg><svg style="left:967px;top:106px" width="16" height="16" viewBox="0 0 16 16" shape-rendering="crispEdges" overflow="visible"><g transform="translate(1,1)"><rect x="1" y="0" width="14" height="1" fill="#fff"/><rect x="1" y="2" width="14" height="1" fill="#fff"/><rect x="4" y="2" width="1" height="7" fill="#fff"/><rect x="11" y="2" width="1" height="7" fill="#fff"/><rect x="1" y="6" width="14" height="1" fill="#fff"/><rect x="7" y="6" width="1" height="8" fill="#fff"/><rect x="4" y="10" width="7" height="1" fill="#fff"/></g><rect x="1" y="0" width="14" height="1" fill="#808080"/><rect x="1" y="2" width="14" height="1" fill="#808080"/><rect x="4" y="2" width="1" height="7" fill="#808080"/><rect x="11" y="2" width="1" height="7" fill="#808080"/><rect x="1" y="6" width="14" height="1" fill="#808080"/><rect x="7" y="6" width="1" height="8" fill="#808080"/><rect x="4" y="10" width="7" height="1" fill="#808080"/></svg><div style="left:991px;top:103px;width:2px;height:22px;border-left:1px solid #808080;border-right:1px solid #fff"></div><svg style="left:998px;top:106px" width="16" height="16" viewBox="0 0 16 16" shape-rendering="crispEdges" overflow="visible"><g transform="translate(1,1)"><rect x="4" y="3" width="1" height="5" fill="#fff"/><rect x="4" y="7" width="7" height="1" fill="#fff"/><rect x="10" y="7" width="1" height="6" fill="#fff"/></g><rect x="4" y="3" width="1" height="5" fill="#808080"/><rect x="4" y="7" width="7" height="1" fill="#808080"/><rect x="10" y="7" width="1" height="6" fill="#808080"/></svg>
<div style="left:-1px;top:129px;width:219px;height:30px;border-top:1px solid #fff;border-left:1px solid #fff;border-bottom:1px solid #808080;border-right:1px solid #808080"></div><div style="left:3px;top:131px;width:3px;height:26px;border-top:1px solid #fff;border-left:1px solid #fff;border-bottom:1px solid #808080;border-right:1px solid #808080"></div><div style="left:7px;top:131px;width:3px;height:26px;border-top:1px solid #fff;border-left:1px solid #fff;border-bottom:1px solid #808080;border-right:1px solid #808080"></div><svg style="left:14px;top:136px" width="16" height="16" viewBox="0 0 16 16" shape-rendering="crispEdges" overflow="visible"><g transform="translate(1,1)"><rect x="7" y="1" width="1" height="14" fill="#fff"/><rect x="8" y="3" width="7" height="1" fill="#fff"/><rect x="8" y="5" width="5" height="1" fill="#fff"/><rect x="8" y="7" width="7" height="1" fill="#fff"/><rect x="8" y="9" width="4" height="1" fill="#fff"/><rect x="8" y="11" width="6" height="1" fill="#fff"/><rect x="2" y="4" width="4" height="1" fill="#fff"/><rect x="2" y="7" width="4" height="1" fill="#fff"/><rect x="2" y="10" width="4" height="1" fill="#fff"/><path d="M1,7.5 L4,5 V10 Z" fill="#fff" stroke="none" stroke-width="1" /><rect x="1" y="7" width="6" height="1" fill="#fff"/></g><rect x="7" y="1" width="1" height="14" fill="#808080"/><rect x="8" y="3" width="7" height="1" fill="#808080"/><rect x="8" y="5" width="5" height="1" fill="#808080"/><rect x="8" y="7" width="7" height="1" fill="#808080"/><rect x="8" y="9" width="4" height="1" fill="#808080"/><rect x="8" y="11" width="6" height="1" fill="#808080"/><rect x="2" y="4" width="4" height="1" fill="#808080"/><rect x="2" y="7" width="4" height="1" fill="#808080"/><rect x="2" y="10" width="4" height="1" fill="#808080"/><path d="M1,7.5 L4,5 V10 Z" fill="#808080" stroke="none" stroke-width="1" /><rect x="1" y="7" width="6" height="1" fill="#808080"/></svg><svg style="left:37px;top:136px" width="16" height="16" viewBox="0 0 16 16" shape-rendering="crispEdges" overflow="visible"><g transform="translate(1,1)"><rect x="7" y="1" width="1" height="14" fill="#fff"/><rect x="8" y="3" width="7" height="1" fill="#fff"/><rect x="8" y="5" width="5" height="1" fill="#fff"/><rect x="8" y="7" width="7" height="1" fill="#fff"/><rect x="8" y="9" width="4" height="1" fill="#fff"/><rect x="8" y="11" width="6" height="1" fill="#fff"/><rect x="2" y="4" width="4" height="1" fill="#fff"/><rect x="2" y="7" width="4" height="1" fill="#fff"/><rect x="2" y="10" width="4" height="1" fill="#fff"/><path d="M6,7.5 L3,5 V10 Z" fill="#fff" stroke="none" stroke-width="1" /><rect x="1" y="7" width="6" height="1" fill="#fff"/></g><rect x="7" y="1" width="1" height="14" fill="#808080"/><rect x="8" y="3" width="7" height="1" fill="#808080"/><rect x="8" y="5" width="5" height="1" fill="#808080"/><rect x="8" y="7" width="7" height="1" fill="#808080"/><rect x="8" y="9" width="4" height="1" fill="#808080"/><rect x="8" y="11" width="6" height="1" fill="#808080"/><rect x="2" y="4" width="4" height="1" fill="#808080"/><rect x="2" y="7" width="4" height="1" fill="#808080"/><rect x="2" y="10" width="4" height="1" fill="#808080"/><path d="M6,7.5 L3,5 V10 Z" fill="#808080" stroke="none" stroke-width="1" /><rect x="1" y="7" width="6" height="1" fill="#808080"/></svg><div style="left:61px;top:133px;width:2px;height:22px;border-left:1px solid #808080;border-right:1px solid #fff"></div><svg style="left:68px;top:136px" width="16" height="16" viewBox="0 0 16 16" shape-rendering="crispEdges" overflow="visible"><g transform="translate(1,1)"><rect x="3" y="2" width="10" height="1" fill="#fff"/><rect x="6" y="4" width="7" height="1" fill="#fff"/><rect x="5" y="6" width="8" height="1" fill="#fff"/><rect x="6" y="8" width="7" height="1" fill="#fff"/><rect x="4" y="10" width="9" height="1" fill="#fff"/><rect x="6" y="12" width="7" height="1" fill="#fff"/></g><rect x="3" y="2" width="10" height="1" fill="#808080"/><rect x="6" y="4" width="7" height="1" fill="#808080"/><rect x="5" y="6" width="8" height="1" fill="#808080"/><rect x="6" y="8" width="7" height="1" fill="#808080"/><rect x="4" y="10" width="9" height="1" fill="#808080"/><rect x="6" y="12" width="7" height="1" fill="#808080"/></svg><svg style="left:91px;top:136px" width="16" height="16" viewBox="0 0 16 16" shape-rendering="crispEdges" overflow="visible"><g transform="translate(1,1)"><path d="M2,4 L5,1 V3 H11 V6 H5 V7 Z" fill="#fff" stroke="none" stroke-width="1" /><rect x="7" y="1" width="5" height="1" fill="#fff"/><rect x="5" y="8" width="8" height="1" fill="#fff"/><rect x="6" y="10" width="7" height="1" fill="#fff"/><rect x="4" y="12" width="9" height="1" fill="#fff"/><rect x="6" y="14" width="7" height="1" fill="#fff"/></g><path d="M2,4 L5,1 V3 H11 V6 H5 V7 Z" fill="#808080" stroke="none" stroke-width="1" /><rect x="7" y="1" width="5" height="1" fill="#808080"/><rect x="5" y="8" width="8" height="1" fill="#808080"/><rect x="6" y="10" width="7" height="1" fill="#808080"/><rect x="4" y="12" width="9" height="1" fill="#808080"/><rect x="6" y="14" width="7" height="1" fill="#808080"/></svg><div style="left:115px;top:133px;width:2px;height:22px;border-left:1px solid #808080;border-right:1px solid #fff"></div><svg style="left:122px;top:136px" width="16" height="16" viewBox="0 0 16 16" shape-rendering="crispEdges" overflow="visible"><g transform="translate(1,1)"><path d="M1,14 L11,2" fill="none" stroke="#fff" stroke-width="1.4" /><path d="M7,5 L12,3 L15,9 L10,12 Z" fill="#fff" stroke="none" stroke-width="1" /></g><path d="M1,14 L11,2" fill="none" stroke="#808080" stroke-width="1.4" /><path d="M7,5 L12,3 L15,9 L10,12 Z" fill="#808080" stroke="none" stroke-width="1" /></svg><svg style="left:145px;top:136px" width="16" height="16" viewBox="0 0 16 16" shape-rendering="crispEdges" overflow="visible"><g transform="translate(1,1)"><path d="M1,14 L11,2" fill="none" stroke="#fff" stroke-width="1.4" /><path d="M7,5 L12,3 L15,9 L10,12 Z" fill="#fff" stroke="none" stroke-width="1" /><path d="M2,5 Q3,1 7,3 M1,2 V6 H5" fill="none" stroke="#fff" stroke-width="1.2" /></g><path d="M1,14 L11,2" fill="none" stroke="#808080" stroke-width="1.4" /><path d="M7,5 L12,3 L15,9 L10,12 Z" fill="#808080" stroke="none" stroke-width="1" /><path d="M2,5 Q3,1 7,3 M1,2 V6 H5" fill="none" stroke="#808080" stroke-width="1.2" /></svg><svg style="left:168px;top:136px" width="16" height="16" viewBox="0 0 16 16" shape-rendering="crispEdges" overflow="visible"><g transform="translate(1,1)"><path d="M1,14 L11,2" fill="none" stroke="#fff" stroke-width="1.4" /><path d="M7,5 L12,3 L15,9 L10,12 Z" fill="#fff" stroke="none" stroke-width="1" /><path d="M3,4 Q6,0 9,3 M10,0 V4 H6" fill="none" stroke="#fff" stroke-width="1.2" /></g><path d="M1,14 L11,2" fill="none" stroke="#808080" stroke-width="1.4" /><path d="M7,5 L12,3 L15,9 L10,12 Z" fill="#808080" stroke="none" stroke-width="1" /><path d="M3,4 Q6,0 9,3 M10,0 V4 H6" fill="none" stroke="#808080" stroke-width="1.2" /></svg><svg style="left:191px;top:136px" width="16" height="16" viewBox="0 0 16 16" shape-rendering="crispEdges" overflow="visible"><g transform="translate(1,1)"><path d="M1,14 L11,2" fill="none" stroke="#fff" stroke-width="1.4" /><path d="M7,5 L12,3 L15,9 L10,12 Z" fill="#fff" stroke="none" stroke-width="1" /><path d="M2,2 L9,9 M9,2 L2,9" fill="none" stroke="#fff" stroke-width="1.2" /></g><path d="M1,14 L11,2" fill="none" stroke="#808080" stroke-width="1.4" /><path d="M7,5 L12,3 L15,9 L10,12 Z" fill="#808080" stroke="none" stroke-width="1" /><path d="M2,2 L9,9 M9,2 L2,9" fill="none" stroke="#808080" stroke-width="1.2" /></svg>
<div style="left:800px;top:0px;width:422px;height:70px;background:#d4d0c8;border-top:1px solid #d4d0c8;border-left:1px solid #d4d0c8;border-bottom:1px solid #404040;border-right:1px solid #404040"></div><div style="left:801px;top:1px;width:420px;height:68px;border-top:1px solid #fff;border-left:1px solid #fff;border-bottom:1px solid #808080;border-right:1px solid #808080"></div><div style="left:803px;top:3px;width:416px;height:15px;background:linear-gradient(90deg,#808080 0,#808080 25%,#c0c0c0 100%)"></div><div class="t" style="left:805px;top:5px;color:#d8d4cc;font-weight:bold;font-family:&quot;Liberation Mono&quot;,monospace;letter-spacing:-0.2px;word-spacing:0">CX-Programmer Information</div><div style="left:805px;top:21px;width:412px;height:44px;border-top:1px solid #808080;border-left:1px solid #808080;border-bottom:1px solid #fff;border-right:1px solid #fff"></div><div style="left:806px;top:22px;width:23px;height:21px;border-top:1px solid #808080;border-left:1px solid #808080;border-bottom:1px solid #f4f4f4;border-right:1px solid #f4f4f4;"></div><svg style="left:806px;top:22px" width="23" height="21" viewBox="0 0 23 21" shape-rendering="crispEdges"><rect x="1" y="8" width="5" height="1" fill="#000"/><rect x="6" y="2" width="1" height="12" fill="#000"/><rect x="12" y="2" width="1" height="12" fill="#000"/><rect x="13" y="8" width="4" height="1" fill="#000"/></svg><div class="t" style="left:806px;top:32px;width:22px;font-family:&quot;Liberation Sans&quot;,sans-serif;font-size:12px;font-weight:bold;color:#800000;-webkit-text-stroke:0.5px #800000;word-spacing:0;text-align:center;text-align:right;">C</div><div style="left:806px;top:43px;width:23px;height:21px;border-top:1px solid #808080;border-left:1px solid #808080;border-bottom:1px solid #f4f4f4;border-right:1px solid #f4f4f4;"></div><svg style="left:806px;top:43px" width="23" height="21" viewBox="0 0 23 21" shape-rendering="crispEdges"><rect x="1" y="8" width="5" height="1" fill="#000"/><rect x="6" y="2" width="1" height="12" fill="#000"/><rect x="12" y="2" width="1" height="12" fill="#000"/><rect x="13" y="8" width="4" height="1" fill="#000"/><line x1="12.5" y1="2" x2="6.5" y2="14" stroke="#000" stroke-width="1.1" shape-rendering="auto"/></svg><div class="t" style="left:806px;top:53px;width:22px;font-family:&quot;Liberation Sans&quot;,sans-serif;font-size:12px;font-weight:bold;color:#800000;-webkit-text-stroke:0.5px #800000;word-spacing:0;text-align:center;text-align:right;">/</div><div style="left:829px;top:22px;width:25px;height:21px;border-top:1px solid #808080;border-left:1px solid #808080;border-bottom:1px solid #f4f4f4;border-right:1px solid #f4f4f4;"></div><svg style="left:829px;top:22px" width="25" height="21" viewBox="0 0 25 21" shape-rendering="crispEdges"><rect x="1" y="2" width="1" height="7" fill="#000"/><rect x="1" y="8" width="6" height="1" fill="#000"/><rect x="6" y="2" width="1" height="12" fill="#000"/><rect x="14" y="2" width="1" height="12" fill="#000"/><rect x="14" y="8" width="6" height="1" fill="#000"/><rect x="19" y="2" width="1" height="7" fill="#000"/></svg><div class="t" style="left:829px;top:32px;width:24px;font-family:&quot;Liberation Sans&quot;,sans-serif;font-size:12px;font-weight:bold;color:#800000;-webkit-text-stroke:0.5px #800000;word-spacing:0;text-align:center;text-align:right;">W</div><div style="left:829px;top:43px;width:25px;height:21px;border-top:1px solid #808080;border-left:1px solid #808080;border-bottom:1px solid #f4f4f4;border-right:1px solid #f4f4f4;"></div><svg style="left:829px;top:43px" width="25" height="21" viewBox="0 0 25 21" shape-rendering="crispEdges"><rect x="1" y="2" width="1" height="7" fill="#000"/><rect x="1" y="8" width="6" height="1" fill="#000"/><rect x="6" y="2" width="1" height="12" fill="#000"/><rect x="14" y="2" width="1" height="12" fill="#000"/><rect x="14" y="8" width="6" height="1" fill="#000"/><rect x="19" y="2" width="1" height="7" fill="#000"/><line x1="14.5" y1="2" x2="6.5" y2="14" stroke="#000" stroke-width="1.1" shape-rendering="auto"/></svg><div class="t" style="left:829px;top:53px;width:24px;font-family:&quot;Liberation Sans&quot;,sans-serif;font-size:12px;font-weight:bold;color:#800000;-webkit-text-stroke:0.5px #800000;word-spacing:0;text-align:center;text-align:right;">X</div><div style="left:854px;top:22px;width:26px;height:21px;border-top:1px solid #808080;border-left:1px solid #808080;border-bottom:1px solid #f4f4f4;border-right:1px solid #f4f4f4;"></div><svg style="left:854px;top:22px" width="26" height="21" viewBox="0 0 26 21" shape-rendering="crispEdges"><rect x="1" y="8" width="3" height="1" fill="#000"/><rect x="15" y="8" width="3" height="1" fill="#000"/><circle cx="9.5" cy="8.5" r="5.5" fill="none" stroke="#000" stroke-width="1.1" shape-rendering="auto"/></svg><div class="t" style="left:854px;top:32px;width:25px;font-family:&quot;Liberation Sans&quot;,sans-serif;font-size:12px;font-weight:bold;color:#800000;-webkit-text-stroke:0.5px #800000;word-spacing:0;text-align:center;text-align:right;">O</div><div style="left:854px;top:43px;width:26px;height:21px;border-top:1px solid #808080;border-left:1px solid #808080;border-bottom:1px solid #f4f4f4;border-right:1px solid #f4f4f4;"></div><svg style="left:854px;top:43px" width="26" height="21" viewBox="0 0 26 21" shape-rendering="crispEdges"><rect x="1" y="8" width="3" height="1" fill="#000"/><rect x="15" y="8" width="3" height="1" fill="#000"/><circle cx="9.5" cy="8.5" r="5.5" fill="none" stroke="#000" stroke-width="1.1" shape-rendering="auto"/><line x1="15" y1="2" x2="4" y2="15" stroke="#000" stroke-width="1.1" shape-rendering="auto"/></svg><div class="t" style="left:854px;top:53px;width:25px;font-family:&quot;Liberation Sans&quot;,sans-serif;font-size:12px;font-weight:bold;color:#800000;-webkit-text-stroke:0.5px #800000;word-spacing:0;text-align:center;text-align:right;">Q</div><div style="left:880px;top:22px;width:46px;height:21px;border-top:1px solid #808080;border-left:1px solid #808080;border-bottom:1px solid #f4f4f4;border-right:1px solid #f4f4f4;"></div><svg style="left:880px;top:22px" width="46" height="21" viewBox="0 0 46 21" shape-rendering="crispEdges"><rect x="11" y="5" width="16" height="1" fill="#000"/><rect x="15" y="2" width="1" height="13" fill="#000"/><rect x="23" y="2" width="1" height="13" fill="#000"/><rect x="15" y="2" width="9" height="1" fill="#000"/><rect x="15" y="9" width="9" height="1" fill="#000"/><rect x="15" y="14" width="9" height="1" fill="#000"/></svg><div class="t" style="left:880px;top:32px;width:38px;font-family:&quot;Liberation Sans&quot;,sans-serif;font-size:12px;font-weight:bold;color:#800000;-webkit-text-stroke:0.5px #800000;word-spacing:0;text-align:center;text-align:right;font-family:&quot;Liberation Mono&quot;,monospace;">I</div><div style="left:880px;top:43px;width:46px;height:21px;border-top:1px solid #808080;border-left:1px solid #808080;border-bottom:1px solid #f4f4f4;border-right:1px solid #f4f4f4;"></div><div class="t" style="left:870px;top:44px;width:66px;font-family:&quot;Liberation Sans&quot;,sans-serif;font-size:10px;letter-spacing:-0.6px;word-spacing:-1px;text-align:center;">Work Online</div><div class="t" style="left:870px;top:53px;width:66px;font-family:&quot;Liberation Sans&quot;,sans-serif;font-size:12px;font-weight:bold;color:#800000;-webkit-text-stroke:0.5px #800000;word-spacing:0;text-align:center;">Ctrl+W</div><div style="left:926px;top:22px;width:40px;height:21px;border-top:1px solid #808080;border-left:1px solid #808080;border-bottom:1px solid #f4f4f4;border-right:1px solid #f4f4f4;"></div><div class="t" style="left:916px;top:23px;width:60px;font-family:&quot;Liberation Sans&quot;,sans-serif;font-size:10px;letter-spacing:-0.6px;word-spacing:-1px;text-align:center;">Program</div><div class="t" style="left:916px;top:32px;width:60px;font-family:&quot;Liberation Sans&quot;,sans-serif;font-size:12px;font-weight:bold;color:#800000;-webkit-text-stroke:0.5px #800000;word-spacing:0;text-align:center;">Ctrl+1</div><div style="left:926px;top:43px;width:40px;height:21px;border-top:1px solid #808080;border-left:1px solid #808080;border-bottom:1px solid #f4f4f4;border-right:1px solid #f4f4f4;"></div><div class="t" style="left:916px;top:44px;width:60px;font-family:&quot;Liberation Sans&quot;,sans-serif;font-size:10px;letter-spacing:-0.6px;word-spacing:-1px;text-align:center;">Monitor</div><div class="t" style="left:916px;top:53px;width:60px;font-family:&quot;Liberation Sans&quot;,sans-serif;font-size:12px;font-weight:bold;color:#800000;-webkit-text-stroke:0.5px #800000;word-spacing:0;text-align:center;">Ctrl+3</div><div style="left:966px;top:22px;width:40px;height:21px;border-top:1px solid #808080;border-left:1px solid #808080;border-bottom:1px solid #f4f4f4;border-right:1px solid #f4f4f4;"></div><div class="t" style="left:956px;top:23px;width:60px;font-family:&quot;Liberation Sans&quot;,sans-serif;font-size:10px;letter-spacing:-0.6px;word-spacing:-1px;text-align:center;">Run</div><div class="t" style="left:956px;top:32px;width:60px;font-family:&quot;Liberation Sans&quot;,sans-serif;font-size:12px;font-weight:bold;color:#800000;-webkit-text-stroke:0.5px #800000;word-spacing:0;text-align:center;">Ctrl+4</div><div style="left:966px;top:43px;width:40px;height:21px;border-top:1px solid #808080;border-left:1px solid #808080;border-bottom:1px solid #f4f4f4;border-right:1px solid #f4f4f4;"></div><div class="t" style="left:956px;top:44px;width:60px;font-family:&quot;Liberation Sans&quot;,sans-serif;font-size:10px;letter-spacing:-0.6px;word-spacing:-1px;text-align:center;">Force On</div><div class="t" style="left:956px;top:53px;width:60px;font-family:&quot;Liberation Sans&quot;,sans-serif;font-size:12px;font-weight:bold;color:#800000;-webkit-text-stroke:0.5px #800000;word-spacing:0;text-align:center;">Ctrl+J</div><div style="left:1006px;top:22px;width:52px;height:21px;border-top:1px solid #808080;border-left:1px solid #808080;border-bottom:1px solid #f4f4f4;border-right:1px solid #f4f4f4;"></div><div class="t" style="left:996px;top:23px;width:72px;font-family:&quot;Liberation Sans&quot;,sans-serif;font-size:10px;letter-spacing:-0.6px;word-spacing:-1px;text-align:center;">Force Off</div><div class="t" style="left:996px;top:32px;width:72px;font-family:&quot;Liberation Sans&quot;,sans-serif;font-size:12px;font-weight:bold;color:#800000;-webkit-text-stroke:0.5px #800000;word-spacing:0;text-align:center;">Ctrl+K</div><div style="left:1006px;top:43px;width:52px;height:21px;border-top:1px solid #808080;border-left:1px solid #808080;border-bottom:1px solid #f4f4f4;border-right:1px solid #f4f4f4;"></div><div class="t" style="left:996px;top:44px;width:72px;font-family:&quot;Liberation Sans&quot;,sans-serif;font-size:10px;letter-spacing:-0.6px;word-spacing:-1px;text-align:center;">Force Cancel</div><div class="t" style="left:996px;top:53px;width:72px;font-family:&quot;Liberation Sans&quot;,sans-serif;font-size:12px;font-weight:bold;color:#800000;-webkit-text-stroke:0.5px #800000;word-spacing:0;text-align:center;">Ctrl+L</div><div style="left:1058px;top:22px;width:42px;height:21px;border-top:1px solid #808080;border-left:1px solid #808080;border-bottom:1px solid #f4f4f4;border-right:1px solid #f4f4f4;"></div><div class="t" style="left:1048px;top:23px;width:62px;font-family:&quot;Liberation Sans&quot;,sans-serif;font-size:10px;letter-spacing:-0.6px;word-spacing:-1px;text-align:center;">Next Addr.</div><div class="t" style="left:1048px;top:32px;width:62px;font-family:&quot;Liberation Sans&quot;,sans-serif;font-size:12px;font-weight:bold;color:#800000;-webkit-text-stroke:0.5px #800000;word-spacing:0;text-align:center;">N</div><div style="left:1058px;top:43px;width:42px;height:21px;border-top:1px solid #808080;border-left:1px solid #808080;border-bottom:1px solid #f4f4f4;border-right:1px solid #f4f4f4;"></div><div class="t" style="left:1048px;top:44px;width:62px;font-family:&quot;Liberation Sans&quot;,sans-serif;font-size:10px;letter-spacing:-0.6px;word-spacing:-1px;text-align:center;">Prev. Jump</div><div class="t" style="left:1048px;top:53px;width:62px;font-family:&quot;Liberation Sans&quot;,sans-serif;font-size:12px;font-weight:bold;color:#800000;-webkit-text-stroke:0.5px #800000;word-spacing:0;text-align:center;">B</div><div style="left:1100px;top:22px;width:43px;height:21px;border-top:1px solid #808080;border-left:1px solid #808080;border-bottom:1px solid #f4f4f4;border-right:1px solid #f4f4f4;"></div><div class="t" style="left:1090px;top:23px;width:63px;font-family:&quot;Liberation Sans&quot;,sans-serif;font-size:10px;letter-spacing:-0.6px;word-spacing:-1px;text-align:center;">Find bit</div><div class="t" style="left:1090px;top:32px;width:63px;font-family:&quot;Liberation Sans&quot;,sans-serif;font-size:12px;font-weight:bold;color:#800000;-webkit-text-stroke:0.5px #800000;word-spacing:0;text-align:center;">SPACE</div><div style="left:1100px;top:43px;width:43px;height:21px;border-top:1px solid #808080;border-left:1px solid #808080;border-bottom:1px solid #f4f4f4;border-right:1px solid #f4f4f4;"></div><div class="t" style="left:1090px;top:44px;width:63px;font-family:&quot;Liberation Sans&quot;,sans-serif;font-size:10px;letter-spacing:-0.6px;word-spacing:-1px;text-align:center;">Comment</div><div class="t" style="left:1090px;top:53px;width:63px;font-family:&quot;Liberation Sans&quot;,sans-serif;font-size:12px;font-weight:bold;color:#800000;-webkit-text-stroke:0.5px #800000;word-spacing:0;text-align:center;">L</div><div style="left:1143px;top:22px;width:73px;height:42px;border-top:1px solid #808080;border-left:1px solid #808080;border-bottom:1px solid #f4f4f4;border-right:1px solid #f4f4f4;"></div><div class="t" style="left:1143px;top:25px;width:73px;font-family:&quot;Liberation Sans&quot;,sans-serif;font-size:11px;letter-spacing:-0.6px;word-spacing:0;text-align:center;">Information</div><div class="t" style="left:1143px;top:36px;width:73px;font-family:&quot;Liberation Sans&quot;,sans-serif;font-size:11px;letter-spacing:-0.6px;word-spacing:0;text-align:center;">Show / Hide</div><div class="t" style="left:1143px;top:50px;width:73px;font-family:&quot;Liberation Sans&quot;,sans-serif;font-size:12px;font-weight:bold;color:#800000;-webkit-text-stroke:0.5px #800000;word-spacing:0;text-align:center;font-size:13px;">Ctrl+Shift+I</div>
<div style="left:0px;top:159px;width:225px;height:1px;background:#fff"></div><div style="left:5px;top:164px;width:182px;height:3px;border-top:1px solid #fff;border-left:1px solid #fff;border-bottom:1px solid #808080;border-right:1px solid #808080"></div><div style="left:5px;top:168px;width:182px;height:3px;border-top:1px solid #fff;border-left:1px solid #fff;border-bottom:1px solid #808080;border-right:1px solid #808080"></div><div style="left:188px;top:162px;width:12px;height:11px;border-top:1px solid #fff;border-left:1px solid #fff;border-bottom:1px solid #404040;border-right:1px solid #404040;background:#d4d0c8"><svg style="left:1px;top:1px" width="9" height="9" viewBox="0 0 9 9" ><path d="M1,3 H8 L4.5,7 Z" fill="#808080" stroke="none" stroke-width="1" /><path d="M2,4 H9 L5.5,8 Z" fill="#fff" stroke="none" stroke-width="0" opacity="0.0"/></svg></div><div style="left:202px;top:162px;width:12px;height:11px;border-top:1px solid #fff;border-left:1px solid #fff;border-bottom:1px solid #404040;border-right:1px solid #404040;background:#d4d0c8"><svg style="left:1px;top:0px" width="9" height="9" viewBox="0 0 9 9" ><path d="M1.5,2 L7.5,8 M7.5,2 L1.5,8" fill="none" stroke="#000" stroke-width="1.6" /></svg></div><div style="left:3px;top:175px;width:212px;height:768px;border-top:1px solid #808080;border-left:1px solid #808080;border-right:1px solid #fff;border-bottom:1px solid #fff"></div><div style="left:4px;top:176px;width:210px;height:767px;border-top:1px solid #404040;border-left:1px solid #404040;border-right:1px solid #d4d0c8;border-bottom:1px solid #000;background:#fff"></div><div style="left:220px;top:160px;width:1px;height:800px;background:#fff"></div><div style="left:5px;top:942px;width:209px;height:1px;background:#000"></div><svg style="left:4px;top:942px" width="60" height="17" viewBox="0 0 60 17" shape-rendering="auto"><path d="M1,0 L8.5,15.5 H41.5 L49,0" fill="#fff" stroke="#000" stroke-width="1" /><rect x="2" y="0" width="46" height="1" fill="#fff"/></svg><div class="t" style="left:15px;top:945px;">工程</div><div style="left:0px;top:959px;width:224px;height:1px;background:#fff"></div><div style="left:18px;top:185px;width:6px;height:1px;background:repeating-linear-gradient(90deg,#808080 0 1px,transparent 1px 2px)"></div><div style="left:32px;top:193px;width:1px;height:4px;background:repeating-linear-gradient(180deg,#808080 0 1px,transparent 1px 2px)"></div><div style="left:37px;top:201px;width:6px;height:1px;background:repeating-linear-gradient(90deg,#808080 0 1px,transparent 1px 2px)"></div><div style="left:51px;top:209px;width:1px;height:441px;background:repeating-linear-gradient(180deg,#808080 0 1px,transparent 1px 2px)"></div><div style="left:70px;top:289px;width:1px;height:4px;background:repeating-linear-gradient(180deg,#808080 0 1px,transparent 1px 2px)"></div><div style="left:89px;top:305px;width:1px;height:329px;background:repeating-linear-gradient(180deg,#808080 0 1px,transparent 1px 2px)"></div><div style="left:9px;top:181px;width:9px;height:9px;border:1px solid #808080;background:#fff"></div><div style="left:11px;top:185px;width:5px;height:1px;background:#000"></div><svg style="left:24px;top:177px" width="16" height="16" viewBox="0 0 16 16" shape-rendering="crispEdges"><rect x="6" y="0" width="5" height="4" fill="#000"/><rect x="7" y="1" width="3" height="2" fill="#fff"/><rect x="1" y="5" width="5" height="4" fill="#000"/><rect x="2" y="6" width="3" height="2" fill="#fff"/><rect x="11" y="5" width="5" height="4" fill="#000"/><rect x="12" y="6" width="3" height="2" fill="#fff"/><rect x="3" y="11" width="5" height="4" fill="#000"/><rect x="4" y="12" width="3" height="2" fill="#fff"/><rect x="9" y="11" width="5" height="4" fill="#000"/><rect x="10" y="12" width="3" height="2" fill="#fff"/><rect x="8" y="4" width="1" height="3" fill="#000"/><rect x="3" y="7" width="11" height="1" fill="#000"/><rect x="5" y="9" width="1" height="2" fill="#000"/><rect x="11" y="9" width="1" height="2" fill="#000"/><rect x="3" y="8" width="1" height="1" fill="#000"/><rect x="13" y="8" width="1" height="1" fill="#000"/></svg><div class="t" style="left:45px;top:180px;">新工程</div><div style="left:28px;top:197px;width:9px;height:9px;border:1px solid #808080;background:#fff"></div><div style="left:30px;top:201px;width:5px;height:1px;background:#000"></div><svg style="left:43px;top:193px" width="16" height="16" viewBox="0 0 16 16" shape-rendering="crispEdges"><path d="M1,5 L3,2 H15 L13,5 Z" fill="#808080" stroke="#000" stroke-width="1" /><rect x="0" y="5" width="14" height="8" fill="#000"/><path d="M14,5 L16,2 V10 L14,13 Z" fill="#404040" stroke="none" stroke-width="1" /><rect x="2" y="7" width="1" height="2" fill="#f00"/><rect x="4" y="7" width="1" height="2" fill="#f00"/><rect x="1" y="11" width="3" height="2" fill="#00d000"/><rect x="5" y="11" width="8" height="1" fill="#808080"/></svg><div class="t" style="left:64px;top:196px;">新<span class="m">PLC1[CP1H] </span>离线</div><div style="left:52px;top:217px;width:10px;height:1px;background:repeating-linear-gradient(90deg,#808080 0 1px,transparent 1px 2px)"></div><svg style="left:63px;top:209px" width="16" height="16" viewBox="0 0 16 16" shape-rendering="crispEdges"><path d="M1.5,2.5 H11.5 L13.5,4.5 L11.5,6.5 H1.5 Z" fill="#ffff00" stroke="#808000" stroke-width="1" /><rect x="3" y="3" width="7" height="3" fill="#ffffa0"/><rect x="11" y="4" width="2" height="2" fill="#000"/><path d="M13.5,5 V9.5 H2.5 V11" fill="none" stroke="#000" stroke-width="1" /><rect x="2" y="12" width="2" height="2" fill="#000"/><rect x="6" y="12" width="2" height="2" fill="#000"/><rect x="10" y="12" width="2" height="2" fill="#000"/><rect x="2" y="10" width="1" height="2" fill="#808080"/><rect x="7" y="10" width="1" height="2" fill="#808080"/><rect x="11" y="10" width="1" height="2" fill="#808080"/></svg><div class="t" style="left:83px;top:212px;">符号</div><div style="left:52px;top:233px;width:10px;height:1px;background:repeating-linear-gradient(90deg,#808080 0 1px,transparent 1px 2px)"></div><svg style="left:63px;top:225px" width="16" height="16" viewBox="0 0 16 16" shape-rendering="crispEdges"><rect x="0" y="0" width="15" height="15" fill="#00ffff"/><path d="M1,3 H6 V10 L5,12 H2 L1,10 Z" fill="#000" stroke="none" stroke-width="1" /><rect x="2" y="4" width="1" height="5" fill="#fff"/><rect x="8" y="1" width="6" height="3" fill="#000"/><rect x="10" y="4" width="2" height="10" fill="#ffd800"/><rect x="10" y="4" width="1" height="10" fill="#000"/><rect x="12" y="4" width="1" height="10" fill="#806000"/></svg><div class="t" style="left:83px;top:228px;"><span class="m">IO</span>表和单元设置</div><div style="left:52px;top:249px;width:10px;height:1px;background:repeating-linear-gradient(90deg,#808080 0 1px,transparent 1px 2px)"></div><svg style="left:63px;top:241px" width="16" height="16" viewBox="0 0 16 16" shape-rendering="crispEdges"><path d="M1.5,1.5 H12.5 V14.5 H1.5 Z" fill="#fff" stroke="#000" stroke-width="1" /><rect x="3" y="0" width="1" height="3" fill="#000"/><rect x="5" y="0" width="1" height="3" fill="#000"/><rect x="7" y="0" width="1" height="3" fill="#000"/><rect x="9" y="0" width="1" height="3" fill="#000"/><rect x="11" y="0" width="1" height="3" fill="#000"/><rect x="3" y="5" width="3" height="1" fill="#808080"/><rect x="3" y="8" width="2" height="1" fill="#808080"/><rect x="3" y="11" width="2" height="1" fill="#808080"/><circle cx="8.5" cy="9.5" r="2.5" fill="#ffff00" stroke="#000" stroke-width="1"/><rect x="8" y="9" width="1" height="1" fill="#000"/></svg><div class="t" style="left:83px;top:244px;">设置</div><div style="left:52px;top:265px;width:10px;height:1px;background:repeating-linear-gradient(90deg,#808080 0 1px,transparent 1px 2px)"></div><svg style="left:63px;top:257px" width="16" height="16" viewBox="0 0 16 16" shape-rendering="crispEdges"><path d="M0,8 L10,3 L15,6 L5,11 Z" fill="#a0a0a0" stroke="#707070" stroke-width="1" /><path d="M0,8 L5,11 V12 L0,9 Z" fill="#606060" stroke="none" stroke-width="1" /><rect x="4" y="11" width="1" height="3" fill="#000"/><rect x="6" y="10" width="1" height="3" fill="#000"/><rect x="8" y="9" width="1" height="3" fill="#000"/><rect x="10" y="8" width="1" height="3" fill="#000"/><rect x="12" y="7" width="1" height="3" fill="#000"/></svg><div class="t" style="left:83px;top:260px;">内存</div><div style="left:56px;top:281px;width:7px;height:1px;background:repeating-linear-gradient(90deg,#808080 0 1px,transparent 1px 2px)"></div><div style="left:47px;top:277px;width:9px;height:9px;border:1px solid #808080;background:#fff"></div><div style="left:49px;top:281px;width:5px;height:1px;background:#000"></div><svg style="left:63px;top:273px" width="16" height="16" viewBox="0 0 16 16" shape-rendering="crispEdges"><path d="M0,3 L8,0 L15,12 L7,16 Z" fill="#000" stroke="none" stroke-width="1" /><rect x="2" y="2" width="2" height="1" fill="#ffff00"/><rect x="5" y="1" width="2" height="1" fill="#ffff00"/><rect x="8" y="0" width="1" height="1" fill="#ffff00"/><rect x="3" y="3" width="2" height="1" fill="#c0c000"/><rect x="7" y="2" width="1" height="1" fill="#ffff00"/><rect x="3" y="4" width="2" height="1" fill="#ffff00"/><rect x="6" y="3" width="2" height="1" fill="#ffff00"/><rect x="9" y="2" width="1" height="1" fill="#ffff00"/><rect x="4" y="5" width="2" height="1" fill="#c0c000"/><rect x="8" y="4" width="1" height="1" fill="#ffff00"/><rect x="4" y="6" width="2" height="1" fill="#ffff00"/><rect x="7" y="5" width="2" height="1" fill="#ffff00"/><rect x="10" y="4" width="1" height="1" fill="#ffff00"/><rect x="5" y="7" width="2" height="1" fill="#c0c000"/><rect x="9" y="6" width="1" height="1" fill="#ffff00"/><rect x="5" y="8" width="2" height="1" fill="#ffff00"/><rect x="8" y="7" width="2" height="1" fill="#ffff00"/><rect x="11" y="6" width="1" height="1" fill="#ffff00"/><rect x="6" y="9" width="2" height="1" fill="#c0c000"/><rect x="10" y="8" width="1" height="1" fill="#ffff00"/><rect x="6" y="10" width="2" height="1" fill="#ffff00"/><rect x="9" y="9" width="2" height="1" fill="#ffff00"/><rect x="12" y="8" width="1" height="1" fill="#ffff00"/><rect x="7" y="11" width="2" height="1" fill="#c0c000"/><rect x="11" y="10" width="1" height="1" fill="#ffff00"/><rect x="7" y="12" width="2" height="1" fill="#ffff00"/><rect x="10" y="11" width="2" height="1" fill="#ffff00"/><rect x="13" y="10" width="1" height="1" fill="#ffff00"/><rect x="8" y="13" width="2" height="1" fill="#c0c000"/><rect x="12" y="12" width="1" height="1" fill="#ffff00"/><rect x="8" y="14" width="2" height="1" fill="#ffff00"/><rect x="11" y="13" width="2" height="1" fill="#ffff00"/><rect x="14" y="12" width="1" height="1" fill="#ffff00"/><rect x="9" y="15" width="2" height="1" fill="#c0c000"/><rect x="13" y="14" width="1" height="1" fill="#ffff00"/></svg><div class="t" style="left:83px;top:276px;">程序</div><div style="left:75px;top:297px;width:6px;height:1px;background:repeating-linear-gradient(90deg,#808080 0 1px,transparent 1px 2px)"></div><div style="left:66px;top:293px;width:9px;height:9px;border:1px solid #808080;background:#fff"></div><div style="left:68px;top:297px;width:5px;height:1px;background:#000"></div><svg style="left:81px;top:289px" width="16" height="16" viewBox="0 0 16 16" shape-rendering="crispEdges"><path d="M3.5,2.5 Q1,2.5 1.5,5 Q1,8 4,8.5 H11 Q14.5,8 14,5 Q14.5,2.5 11.5,2.5 Q8,0.5 3.5,2.5 Z" fill="#fff" stroke="#000" stroke-width="1" /><path d="M9,6 L10.5,9 L14,9.5 L11.5,11.5 L12.5,15 L9,13 L5.5,15 L6.5,11.5 L4,9.5 L7.5,9 Z" fill="#ffff00" stroke="#000" stroke-width="1" /><rect x="8" y="9" width="2" height="3" fill="#808080"/></svg><div class="t" style="left:102px;top:292px;">新程序<span class="m">1 (00)</span></div><div style="left:90px;top:313px;width:10px;height:1px;background:repeating-linear-gradient(90deg,#808080 0 1px,transparent 1px 2px)"></div><svg style="left:101px;top:305px" width="16" height="16" viewBox="0 0 16 16" shape-rendering="crispEdges"><path d="M1.5,2.5 H11.5 L13.5,4.5 L11.5,6.5 H1.5 Z" fill="#ffff00" stroke="#808000" stroke-width="1" /><rect x="3" y="3" width="7" height="3" fill="#ffffa0"/><rect x="11" y="4" width="2" height="2" fill="#000"/><path d="M13.5,5 V9.5 H2.5 V11" fill="none" stroke="#000" stroke-width="1" /><rect x="2" y="12" width="2" height="2" fill="#000"/><rect x="6" y="12" width="2" height="2" fill="#000"/><rect x="10" y="12" width="2" height="2" fill="#000"/><rect x="2" y="10" width="1" height="2" fill="#808080"/><rect x="7" y="10" width="1" height="2" fill="#808080"/><rect x="11" y="10" width="1" height="2" fill="#808080"/></svg><div class="t" style="left:121px;top:308px;">符号</div><div style="left:90px;top:329px;width:10px;height:1px;background:repeating-linear-gradient(90deg,#808080 0 1px,transparent 1px 2px)"></div><svg style="left:101px;top:321px" width="16" height="16" viewBox="0 0 16 16" shape-rendering="crispEdges"><path d="M1.5,3.5 L3.5,1.5 H11.5 L13.5,3.5 V8.5 L10.5,11.5 H9.5 V13.5 H5.5 V11.5 H4.5 L1.5,8.5 Z" fill="#ffff00" stroke="#000" stroke-width="1" /><path d="M3.5,3.5 H11.5 M3.5,5.5 H11.5" fill="none" stroke="#000" stroke-width="1" /><rect x="6" y="6" width="3" height="1" fill="#000"/><rect x="6" y="8" width="1" height="4" fill="#808000"/><rect x="8" y="8" width="1" height="4" fill="#808000"/><rect x="3" y="5" width="1" height="3" fill="#808000"/><rect x="11" y="5" width="1" height="3" fill="#808000"/></svg><div class="t" style="left:121px;top:324px;">数据计算</div><div style="left:90px;top:345px;width:10px;height:1px;background:repeating-linear-gradient(90deg,#808080 0 1px,transparent 1px 2px)"></div><svg style="left:101px;top:337px" width="16" height="16" viewBox="0 0 16 16" shape-rendering="crispEdges"><path d="M1.5,3.5 L3.5,1.5 H11.5 L13.5,3.5 V8.5 L10.5,11.5 H9.5 V13.5 H5.5 V11.5 H4.5 L1.5,8.5 Z" fill="#ffff00" stroke="#000" stroke-width="1" /><path d="M3.5,3.5 H11.5 M3.5,5.5 H11.5" fill="none" stroke="#000" stroke-width="1" /><rect x="6" y="6" width="3" height="1" fill="#000"/><rect x="6" y="8" width="1" height="4" fill="#808000"/><rect x="8" y="8" width="1" height="4" fill="#808000"/><rect x="3" y="5" width="1" height="3" fill="#808000"/><rect x="11" y="5" width="1" height="3" fill="#808000"/></svg><div class="t" style="left:121px;top:340px;">前段手动</div><div style="left:90px;top:361px;width:10px;height:1px;background:repeating-linear-gradient(90deg,#808080 0 1px,transparent 1px 2px)"></div><svg style="left:101px;top:353px" width="16" height="16" viewBox="0 0 16 16" shape-rendering="crispEdges"><path d="M1.5,3.5 L3.5,1.5 H11.5 L13.5,3.5 V8.5 L10.5,11.5 H9.5 V13.5 H5.5 V11.5 H4.5 L1.5,8.5 Z" fill="#ffff00" stroke="#000" stroke-width="1" /><path d="M3.5,3.5 H11.5 M3.5,5.5 H11.5" fill="none" stroke="#000" stroke-width="1" /><rect x="6" y="6" width="3" height="1" fill="#000"/><rect x="6" y="8" width="1" height="4" fill="#808000"/><rect x="8" y="8" width="1" height="4" fill="#808000"/><rect x="3" y="5" width="1" height="3" fill="#808000"/><rect x="11" y="5" width="1" height="3" fill="#808000"/></svg><div class="t" style="left:121px;top:356px;"><span class="m">CCD</span>工站检测</div><div style="left:90px;top:377px;width:10px;height:1px;background:repeating-linear-gradient(90deg,#808080 0 1px,transparent 1px 2px)"></div><svg style="left:101px;top:369px" width="16" height="16" viewBox="0 0 16 16" shape-rendering="crispEdges"><path d="M1.5,3.5 L3.5,1.5 H11.5 L13.5,3.5 V8.5 L10.5,11.5 H9.5 V13.5 H5.5 V11.5 H4.5 L1.5,8.5 Z" fill="#ffff00" stroke="#000" stroke-width="1" /><path d="M3.5,3.5 H11.5 M3.5,5.5 H11.5" fill="none" stroke="#000" stroke-width="1" /><rect x="6" y="6" width="3" height="1" fill="#000"/><rect x="6" y="8" width="1" height="4" fill="#808000"/><rect x="8" y="8" width="1" height="4" fill="#808000"/><rect x="3" y="5" width="1" height="3" fill="#808000"/><rect x="11" y="5" width="1" height="3" fill="#808000"/></svg><div class="t" style="left:121px;top:372px;"><span class="m">CCD</span>裁切工站</div><div style="left:90px;top:393px;width:10px;height:1px;background:repeating-linear-gradient(90deg,#808080 0 1px,transparent 1px 2px)"></div><svg style="left:101px;top:385px" width="16" height="16" viewBox="0 0 16 16" shape-rendering="crispEdges"><path d="M1.5,3.5 L3.5,1.5 H11.5 L13.5,3.5 V8.5 L10.5,11.5 H9.5 V13.5 H5.5 V11.5 H4.5 L1.5,8.5 Z" fill="#ffff00" stroke="#000" stroke-width="1" /><path d="M3.5,3.5 H11.5 M3.5,5.5 H11.5" fill="none" stroke="#000" stroke-width="1" /><rect x="6" y="6" width="3" height="1" fill="#000"/><rect x="6" y="8" width="1" height="4" fill="#808000"/><rect x="8" y="8" width="1" height="4" fill="#808000"/><rect x="3" y="5" width="1" height="3" fill="#808000"/><rect x="11" y="5" width="1" height="3" fill="#808000"/></svg><div class="t" style="left:121px;top:388px;">前拉料</div><div style="left:90px;top:409px;width:10px;height:1px;background:repeating-linear-gradient(90deg,#808080 0 1px,transparent 1px 2px)"></div><svg style="left:101px;top:401px" width="16" height="16" viewBox="0 0 16 16" shape-rendering="crispEdges"><path d="M1.5,3.5 L3.5,1.5 H11.5 L13.5,3.5 V8.5 L10.5,11.5 H9.5 V13.5 H5.5 V11.5 H4.5 L1.5,8.5 Z" fill="#ffff00" stroke="#000" stroke-width="1" /><path d="M3.5,3.5 H11.5 M3.5,5.5 H11.5" fill="none" stroke="#000" stroke-width="1" /><rect x="6" y="6" width="3" height="1" fill="#000"/><rect x="6" y="8" width="1" height="4" fill="#808000"/><rect x="8" y="8" width="1" height="4" fill="#808000"/><rect x="3" y="5" width="1" height="3" fill="#808000"/><rect x="11" y="5" width="1" height="3" fill="#808000"/></svg><div class="t" style="left:121px;top:404px;">耐压检测工站</div><div style="left:90px;top:425px;width:10px;height:1px;background:repeating-linear-gradient(90deg,#808080 0 1px,transparent 1px 2px)"></div><div style="left:119px;top:417px;width:70px;height:15px;background:#d4d0c8"></div><svg style="left:101px;top:417px" width="16" height="16" viewBox="0 0 16 16" shape-rendering="crispEdges"><path d="M1.5,3.5 L3.5,1.5 H11.5 L13.5,3.5 V8.5 L10.5,11.5 H9.5 V13.5 H5.5 V11.5 H4.5 L1.5,8.5 Z" fill="#ffff00" stroke="#000" stroke-width="1" /><path d="M3.5,3.5 H11.5 M3.5,5.5 H11.5" fill="none" stroke="#000" stroke-width="1" /><rect x="6" y="6" width="3" height="1" fill="#000"/><rect x="6" y="8" width="1" height="4" fill="#808000"/><rect x="8" y="8" width="1" height="4" fill="#808000"/><rect x="3" y="5" width="1" height="3" fill="#808000"/><rect x="11" y="5" width="1" height="3" fill="#808000"/></svg><div class="t" style="left:121px;top:420px;"><span class="m">OS1</span>检测工站</div><div style="left:90px;top:441px;width:10px;height:1px;background:repeating-linear-gradient(90deg,#808080 0 1px,transparent 1px 2px)"></div><svg style="left:101px;top:433px" width="16" height="16" viewBox="0 0 16 16" shape-rendering="crispEdges"><path d="M1.5,3.5 L3.5,1.5 H11.5 L13.5,3.5 V8.5 L10.5,11.5 H9.5 V13.5 H5.5 V11.5 H4.5 L1.5,8.5 Z" fill="#ffff00" stroke="#000" stroke-width="1" /><path d="M3.5,3.5 H11.5 M3.5,5.5 H11.5" fill="none" stroke="#000" stroke-width="1" /><rect x="6" y="6" width="3" height="1" fill="#000"/><rect x="6" y="8" width="1" height="4" fill="#808000"/><rect x="8" y="8" width="1" height="4" fill="#808000"/><rect x="3" y="5" width="1" height="3" fill="#808000"/><rect x="11" y="5" width="1" height="3" fill="#808000"/></svg><div class="t" style="left:121px;top:436px;"><span class="m">OS2</span>检测工站</div><div style="left:90px;top:457px;width:10px;height:1px;background:repeating-linear-gradient(90deg,#808080 0 1px,transparent 1px 2px)"></div><svg style="left:101px;top:449px" width="16" height="16" viewBox="0 0 16 16" shape-rendering="crispEdges"><path d="M1.5,3.5 L3.5,1.5 H11.5 L13.5,3.5 V8.5 L10.5,11.5 H9.5 V13.5 H5.5 V11.5 H4.5 L1.5,8.5 Z" fill="#ffff00" stroke="#000" stroke-width="1" /><path d="M3.5,3.5 H11.5 M3.5,5.5 H11.5" fill="none" stroke="#000" stroke-width="1" /><rect x="6" y="6" width="3" height="1" fill="#000"/><rect x="6" y="8" width="1" height="4" fill="#808000"/><rect x="8" y="8" width="1" height="4" fill="#808000"/><rect x="3" y="5" width="1" height="3" fill="#808000"/><rect x="11" y="5" width="1" height="3" fill="#808000"/></svg><div class="t" style="left:121px;top:452px;">电测裁切工站</div><div style="left:90px;top:473px;width:10px;height:1px;background:repeating-linear-gradient(90deg,#808080 0 1px,transparent 1px 2px)"></div><svg style="left:101px;top:465px" width="16" height="16" viewBox="0 0 16 16" shape-rendering="crispEdges"><path d="M1.5,3.5 L3.5,1.5 H11.5 L13.5,3.5 V8.5 L10.5,11.5 H9.5 V13.5 H5.5 V11.5 H4.5 L1.5,8.5 Z" fill="#ffff00" stroke="#000" stroke-width="1" /><path d="M3.5,3.5 H11.5 M3.5,5.5 H11.5" fill="none" stroke="#000" stroke-width="1" /><rect x="6" y="6" width="3" height="1" fill="#000"/><rect x="6" y="8" width="1" height="4" fill="#808000"/><rect x="8" y="8" width="1" height="4" fill="#808000"/><rect x="3" y="5" width="1" height="3" fill="#808000"/><rect x="11" y="5" width="1" height="3" fill="#808000"/></svg><div class="t" style="left:121px;top:468px;">后拉料</div><div style="left:90px;top:489px;width:10px;height:1px;background:repeating-linear-gradient(90deg,#808080 0 1px,transparent 1px 2px)"></div><svg style="left:101px;top:481px" width="16" height="16" viewBox="0 0 16 16" shape-rendering="crispEdges"><path d="M1.5,3.5 L3.5,1.5 H11.5 L13.5,3.5 V8.5 L10.5,11.5 H9.5 V13.5 H5.5 V11.5 H4.5 L1.5,8.5 Z" fill="#ffff00" stroke="#000" stroke-width="1" /><path d="M3.5,3.5 H11.5 M3.5,5.5 H11.5" fill="none" stroke="#000" stroke-width="1" /><rect x="6" y="6" width="3" height="1" fill="#000"/><rect x="6" y="8" width="1" height="4" fill="#808000"/><rect x="8" y="8" width="1" height="4" fill="#808000"/><rect x="3" y="5" width="1" height="3" fill="#808000"/><rect x="11" y="5" width="1" height="3" fill="#808000"/></svg><div class="t" style="left:121px;top:484px;">前段报警</div><div style="left:90px;top:505px;width:10px;height:1px;background:repeating-linear-gradient(90deg,#808080 0 1px,transparent 1px 2px)"></div><svg style="left:101px;top:497px" width="16" height="16" viewBox="0 0 16 16" shape-rendering="crispEdges"><path d="M1.5,3.5 L3.5,1.5 H11.5 L13.5,3.5 V8.5 L10.5,11.5 H9.5 V13.5 H5.5 V11.5 H4.5 L1.5,8.5 Z" fill="#ffff00" stroke="#000" stroke-width="1" /><path d="M3.5,3.5 H11.5 M3.5,5.5 H11.5" fill="none" stroke="#000" stroke-width="1" /><rect x="6" y="6" width="3" height="1" fill="#000"/><rect x="6" y="8" width="1" height="4" fill="#808000"/><rect x="8" y="8" width="1" height="4" fill="#808000"/><rect x="3" y="5" width="1" height="3" fill="#808000"/><rect x="11" y="5" width="1" height="3" fill="#808000"/></svg><div class="t" style="left:121px;top:500px;">前段自动</div><div style="left:90px;top:521px;width:10px;height:1px;background:repeating-linear-gradient(90deg,#808080 0 1px,transparent 1px 2px)"></div><svg style="left:101px;top:513px" width="16" height="16" viewBox="0 0 16 16" shape-rendering="crispEdges"><path d="M1.5,3.5 L3.5,1.5 H11.5 L13.5,3.5 V8.5 L10.5,11.5 H9.5 V13.5 H5.5 V11.5 H4.5 L1.5,8.5 Z" fill="#ffff00" stroke="#000" stroke-width="1" /><path d="M3.5,3.5 H11.5 M3.5,5.5 H11.5" fill="none" stroke="#000" stroke-width="1" /><rect x="6" y="6" width="3" height="1" fill="#000"/><rect x="6" y="8" width="1" height="4" fill="#808000"/><rect x="8" y="8" width="1" height="4" fill="#808000"/><rect x="3" y="5" width="1" height="3" fill="#808000"/><rect x="11" y="5" width="1" height="3" fill="#808000"/></svg><div class="t" style="left:121px;top:516px;">后段手动</div><div style="left:90px;top:537px;width:10px;height:1px;background:repeating-linear-gradient(90deg,#808080 0 1px,transparent 1px 2px)"></div><svg style="left:101px;top:529px" width="16" height="16" viewBox="0 0 16 16" shape-rendering="crispEdges"><path d="M1.5,3.5 L3.5,1.5 H11.5 L13.5,3.5 V8.5 L10.5,11.5 H9.5 V13.5 H5.5 V11.5 H4.5 L1.5,8.5 Z" fill="#ffff00" stroke="#000" stroke-width="1" /><path d="M3.5,3.5 H11.5 M3.5,5.5 H11.5" fill="none" stroke="#000" stroke-width="1" /><rect x="6" y="6" width="3" height="1" fill="#000"/><rect x="6" y="8" width="1" height="4" fill="#808000"/><rect x="8" y="8" width="1" height="4" fill="#808000"/><rect x="3" y="5" width="1" height="3" fill="#808000"/><rect x="11" y="5" width="1" height="3" fill="#808000"/></svg><div class="t" style="left:121px;top:532px;">裁料桥工站</div><div style="left:90px;top:553px;width:10px;height:1px;background:repeating-linear-gradient(90deg,#808080 0 1px,transparent 1px 2px)"></div><svg style="left:101px;top:545px" width="16" height="16" viewBox="0 0 16 16" shape-rendering="crispEdges"><path d="M1.5,3.5 L3.5,1.5 H11.5 L13.5,3.5 V8.5 L10.5,11.5 H9.5 V13.5 H5.5 V11.5 H4.5 L1.5,8.5 Z" fill="#ffff00" stroke="#000" stroke-width="1" /><path d="M3.5,3.5 H11.5 M3.5,5.5 H11.5" fill="none" stroke="#000" stroke-width="1" /><rect x="6" y="6" width="3" height="1" fill="#000"/><rect x="6" y="8" width="1" height="4" fill="#808000"/><rect x="8" y="8" width="1" height="4" fill="#808000"/><rect x="3" y="5" width="1" height="3" fill="#808000"/><rect x="11" y="5" width="1" height="3" fill="#808000"/></svg><div class="t" style="left:121px;top:548px;">后段拉料</div><div style="left:90px;top:569px;width:10px;height:1px;background:repeating-linear-gradient(90deg,#808080 0 1px,transparent 1px 2px)"></div><svg style="left:101px;top:561px" width="16" height="16" viewBox="0 0 16 16" shape-rendering="crispEdges"><path d="M1.5,3.5 L3.5,1.5 H11.5 L13.5,3.5 V8.5 L10.5,11.5 H9.5 V13.5 H5.5 V11.5 H4.5 L1.5,8.5 Z" fill="#ffff00" stroke="#000" stroke-width="1" /><path d="M3.5,3.5 H11.5 M3.5,5.5 H11.5" fill="none" stroke="#000" stroke-width="1" /><rect x="6" y="6" width="3" height="1" fill="#000"/><rect x="6" y="8" width="1" height="4" fill="#808000"/><rect x="8" y="8" width="1" height="4" fill="#808000"/><rect x="3" y="5" width="1" height="3" fill="#808000"/><rect x="11" y="5" width="1" height="3" fill="#808000"/></svg><div class="t" style="left:121px;top:564px;">裁<span class="m">Carry</span>工站</div><div style="left:90px;top:585px;width:10px;height:1px;background:repeating-linear-gradient(90deg,#808080 0 1px,transparent 1px 2px)"></div><svg style="left:101px;top:577px" width="16" height="16" viewBox="0 0 16 16" shape-rendering="crispEdges"><path d="M1.5,3.5 L3.5,1.5 H11.5 L13.5,3.5 V8.5 L10.5,11.5 H9.5 V13.5 H5.5 V11.5 H4.5 L1.5,8.5 Z" fill="#ffff00" stroke="#000" stroke-width="1" /><path d="M3.5,3.5 H11.5 M3.5,5.5 H11.5" fill="none" stroke="#000" stroke-width="1" /><rect x="6" y="6" width="3" height="1" fill="#000"/><rect x="6" y="8" width="1" height="4" fill="#808000"/><rect x="8" y="8" width="1" height="4" fill="#808000"/><rect x="3" y="5" width="1" height="3" fill="#808000"/><rect x="11" y="5" width="1" height="3" fill="#808000"/></svg><div class="t" style="left:121px;top:580px;">后段折料</div><div style="left:90px;top:601px;width:10px;height:1px;background:repeating-linear-gradient(90deg,#808080 0 1px,transparent 1px 2px)"></div><svg style="left:101px;top:593px" width="16" height="16" viewBox="0 0 16 16" shape-rendering="crispEdges"><path d="M1.5,3.5 L3.5,1.5 H11.5 L13.5,3.5 V8.5 L10.5,11.5 H9.5 V13.5 H5.5 V11.5 H4.5 L1.5,8.5 Z" fill="#ffff00" stroke="#000" stroke-width="1" /><path d="M3.5,3.5 H11.5 M3.5,5.5 H11.5" fill="none" stroke="#000" stroke-width="1" /><rect x="6" y="6" width="3" height="1" fill="#000"/><rect x="6" y="8" width="1" height="4" fill="#808000"/><rect x="8" y="8" width="1" height="4" fill="#808000"/><rect x="3" y="5" width="1" height="3" fill="#808000"/><rect x="11" y="5" width="1" height="3" fill="#808000"/></svg><div class="t" style="left:121px;top:596px;">后段自动</div><div style="left:90px;top:617px;width:10px;height:1px;background:repeating-linear-gradient(90deg,#808080 0 1px,transparent 1px 2px)"></div><svg style="left:101px;top:609px" width="16" height="16" viewBox="0 0 16 16" shape-rendering="crispEdges"><path d="M1.5,3.5 L3.5,1.5 H11.5 L13.5,3.5 V8.5 L10.5,11.5 H9.5 V13.5 H5.5 V11.5 H4.5 L1.5,8.5 Z" fill="#ffff00" stroke="#000" stroke-width="1" /><path d="M3.5,3.5 H11.5 M3.5,5.5 H11.5" fill="none" stroke="#000" stroke-width="1" /><rect x="6" y="6" width="3" height="1" fill="#000"/><rect x="6" y="8" width="1" height="4" fill="#808000"/><rect x="8" y="8" width="1" height="4" fill="#808000"/><rect x="3" y="5" width="1" height="3" fill="#808000"/><rect x="11" y="5" width="1" height="3" fill="#808000"/></svg><div class="t" style="left:121px;top:612px;">后段报警</div><div style="left:90px;top:633px;width:10px;height:1px;background:repeating-linear-gradient(90deg,#808080 0 1px,transparent 1px 2px)"></div><svg style="left:101px;top:625px" width="16" height="16" viewBox="0 0 16 16" shape-rendering="crispEdges"><path d="M1.5,3.5 L3.5,1.5 H11.5 L13.5,3.5 V8.5 L10.5,11.5 H9.5 V13.5 H5.5 V11.5 H4.5 L1.5,8.5 Z" fill="#ffff00" stroke="#000" stroke-width="1" /><path d="M3.5,3.5 H11.5 M3.5,5.5 H11.5" fill="none" stroke="#000" stroke-width="1" /><rect x="6" y="6" width="3" height="1" fill="#000"/><rect x="6" y="8" width="1" height="4" fill="#808000"/><rect x="8" y="8" width="1" height="4" fill="#808000"/><rect x="3" y="5" width="1" height="3" fill="#808000"/><rect x="11" y="5" width="1" height="3" fill="#808000"/></svg><div class="t" style="left:121px;top:628px;"><span class="m">END</span></div><div style="left:52px;top:649px;width:10px;height:1px;background:repeating-linear-gradient(90deg,#808080 0 1px,transparent 1px 2px)"></div><svg style="left:63px;top:641px" width="16" height="16" viewBox="0 0 16 16" shape-rendering="crispEdges"><rect x="4" y="1" width="8" height="13" fill="#a0a0a0"/><path d="M4.5,1.5 H11.5 V13.5 H4.5 Z" fill="none" stroke="#000" stroke-width="1" /><rect x="1" y="3" width="3" height="1" fill="#000"/><rect x="12" y="3" width="3" height="1" fill="#000"/><rect x="1" y="6" width="3" height="1" fill="#000"/><rect x="12" y="6" width="3" height="1" fill="#000"/><rect x="1" y="9" width="3" height="1" fill="#000"/><rect x="12" y="9" width="3" height="1" fill="#000"/><rect x="1" y="12" width="3" height="1" fill="#000"/><rect x="12" y="12" width="3" height="1" fill="#000"/></svg><div class="t" style="left:83px;top:644px;">功能块</div>
<div style="left:225px;top:159px;width:1055px;height:1px;background:#000"></div>
<div style="left:225px;top:159px;width:1px;height:781px;background:#000"></div>
<div style="left:226px;top:941px;width:1054px;height:1px;background:#fff"></div>
<div style="left:1278px;top:160px;width:1px;height:780px;background:#d4d0c8"></div>
<div style="left:1279px;top:160px;width:1px;height:781px;background:#fff"></div>
<svg style="left:226px;top:160px" width="1036" height="764" viewBox="226 160 1036 764" shape-rendering="crispEdges"><rect x="226" y="160" width="49" height="764" fill="#d4d0c8"/><rect x="274" y="160" width="1" height="764" fill="#808080"/><rect x="275" y="160" width="4" height="764" fill="#d4d0c8"/><rect x="280" y="160" width="982" height="764" fill="#fff"/><rect x="226" y="217" width="48" height="1" fill="#808080"/><rect x="226" y="218" width="48" height="1" fill="#fff"/><rect x="280" y="219" width="982" height="1" fill="#e2e2e2"/><rect x="226" y="647" width="48" height="1" fill="#808080"/><rect x="226" y="648" width="48" height="1" fill="#fff"/><rect x="280" y="649" width="982" height="1" fill="#e2e2e2"/><rect x="226" y="905" width="48" height="1" fill="#808080"/><rect x="226" y="906" width="48" height="1" fill="#fff"/><rect x="280" y="907" width="982" height="1" fill="#e2e2e2"/><rect x="279" y="177" width="3" height="1" fill="#d8d8d8"/><rect x="280" y="176" width="1" height="3" fill="#d8d8d8"/><rect x="279" y="220" width="3" height="1" fill="#d8d8d8"/><rect x="280" y="219" width="1" height="3" fill="#d8d8d8"/><rect x="279" y="263" width="3" height="1" fill="#d8d8d8"/><rect x="280" y="262" width="1" height="3" fill="#d8d8d8"/><rect x="279" y="306" width="3" height="1" fill="#d8d8d8"/><rect x="280" y="305" width="1" height="3" fill="#d8d8d8"/><rect x="279" y="349" width="3" height="1" fill="#d8d8d8"/><rect x="280" y="348" width="1" height="3" fill="#d8d8d8"/><rect x="279" y="392" width="3" height="1" fill="#d8d8d8"/><rect x="280" y="391" width="1" height="3" fill="#d8d8d8"/><rect x="279" y="435" width="3" height="1" fill="#d8d8d8"/><rect x="280" y="434" width="1" height="3" fill="#d8d8d8"/><rect x="279" y="478" width="3" height="1" fill="#d8d8d8"/><rect x="280" y="477" width="1" height="3" fill="#d8d8d8"/><rect x="279" y="521" width="3" height="1" fill="#d8d8d8"/><rect x="280" y="520" width="1" height="3" fill="#d8d8d8"/><rect x="279" y="564" width="3" height="1" fill="#d8d8d8"/><rect x="280" y="563" width="1" height="3" fill="#d8d8d8"/><rect x="279" y="607" width="3" height="1" fill="#d8d8d8"/><rect x="280" y="606" width="1" height="3" fill="#d8d8d8"/><rect x="279" y="650" width="3" height="1" fill="#d8d8d8"/><rect x="280" y="649" width="1" height="3" fill="#d8d8d8"/><rect x="279" y="693" width="3" height="1" fill="#d8d8d8"/><rect x="280" y="692" width="1" height="3" fill="#d8d8d8"/><rect x="279" y="736" width="3" height="1" fill="#d8d8d8"/><rect x="280" y="735" width="1" height="3" fill="#d8d8d8"/><rect x="279" y="779" width="3" height="1" fill="#d8d8d8"/><rect x="280" y="778" width="1" height="3" fill="#d8d8d8"/><rect x="279" y="822" width="3" height="1" fill="#d8d8d8"/><rect x="280" y="821" width="1" height="3" fill="#d8d8d8"/><rect x="279" y="865" width="3" height="1" fill="#d8d8d8"/><rect x="280" y="864" width="1" height="3" fill="#d8d8d8"/><rect x="279" y="908" width="3" height="1" fill="#d8d8d8"/><rect x="280" y="907" width="1" height="3" fill="#d8d8d8"/><rect x="381" y="177" width="3" height="1" fill="#d8d8d8"/><rect x="382" y="176" width="1" height="3" fill="#d8d8d8"/><rect x="381" y="220" width="3" height="1" fill="#d8d8d8"/><rect x="382" y="219" width="1" height="3" fill="#d8d8d8"/><rect x="381" y="263" width="3" height="1" fill="#d8d8d8"/><rect x="382" y="262" width="1" height="3" fill="#d8d8d8"/><rect x="381" y="306" width="3" height="1" fill="#d8d8d8"/><rect x="382" y="305" width="1" height="3" fill="#d8d8d8"/><rect x="381" y="349" width="3" height="1" fill="#d8d8d8"/><rect x="382" y="348" width="1" height="3" fill="#d8d8d8"/><rect x="381" y="392" width="3" height="1" fill="#d8d8d8"/><rect x="382" y="391" width="1" height="3" fill="#d8d8d8"/><rect x="381" y="435" width="3" height="1" fill="#d8d8d8"/><rect x="382" y="434" width="1" height="3" fill="#d8d8d8"/><rect x="381" y="478" width="3" height="1" fill="#d8d8d8"/><rect x="382" y="477" width="1" height="3" fill="#d8d8d8"/><rect x="381" y="521" width="3" height="1" fill="#d8d8d8"/><rect x="382" y="520" width="1" height="3" fill="#d8d8d8"/><rect x="381" y="564" width="3" height="1" fill="#d8d8d8"/><rect x="382" y="563" width="1" height="3" fill="#d8d8d8"/><rect x="381" y="607" width="3" height="1" fill="#d8d8d8"/><rect x="382" y="606" width="1" height="3" fill="#d8d8d8"/><rect x="381" y="650" width="3" height="1" fill="#d8d8d8"/><rect x="382" y="649" width="1" height="3" fill="#d8d8d8"/><rect x="381" y="693" width="3" height="1" fill="#d8d8d8"/><rect x="382" y="692" width="1" height="3" fill="#d8d8d8"/><rect x="381" y="736" width="3" height="1" fill="#d8d8d8"/><rect x="382" y="735" width="1" height="3" fill="#d8d8d8"/><rect x="381" y="779" width="3" height="1" fill="#d8d8d8"/><rect x="382" y="778" width="1" height="3" fill="#d8d8d8"/><rect x="381" y="822" width="3" height="1" fill="#d8d8d8"/><rect x="382" y="821" width="1" height="3" fill="#d8d8d8"/><rect x="381" y="865" width="3" height="1" fill="#d8d8d8"/><rect x="382" y="864" width="1" height="3" fill="#d8d8d8"/><rect x="381" y="908" width="3" height="1" fill="#d8d8d8"/><rect x="382" y="907" width="1" height="3" fill="#d8d8d8"/><rect x="483" y="177" width="3" height="1" fill="#d8d8d8"/><rect x="484" y="176" width="1" height="3" fill="#d8d8d8"/><rect x="483" y="220" width="3" height="1" fill="#d8d8d8"/><rect x="484" y="219" width="1" height="3" fill="#d8d8d8"/><rect x="483" y="263" width="3" height="1" fill="#d8d8d8"/><rect x="484" y="262" width="1" height="3" fill="#d8d8d8"/><rect x="483" y="306" width="3" height="1" fill="#d8d8d8"/><rect x="484" y="305" width="1" height="3" fill="#d8d8d8"/><rect x="483" y="349" width="3" height="1" fill="#d8d8d8"/><rect x="484" y="348" width="1" height="3" fill="#d8d8d8"/><rect x="483" y="392" width="3" height="1" fill="#d8d8d8"/><rect x="484" y="391" width="1" height="3" fill="#d8d8d8"/><rect x="483" y="435" width="3" height="1" fill="#d8d8d8"/><rect x="484" y="434" width="1" height="3" fill="#d8d8d8"/><rect x="483" y="478" width="3" height="1" fill="#d8d8d8"/><rect x="484" y="477" width="1" height="3" fill="#d8d8d8"/><rect x="483" y="521" width="3" height="1" fill="#d8d8d8"/><rect x="484" y="520" width="1" height="3" fill="#d8d8d8"/><rect x="483" y="564" width="3" height="1" fill="#d8d8d8"/><rect x="484" y="563" width="1" height="3" fill="#d8d8d8"/><rect x="483" y="607" width="3" height="1" fill="#d8d8d8"/><rect x="484" y="606" width="1" height="3" fill="#d8d8d8"/><rect x="483" y="650" width="3" height="1" fill="#d8d8d8"/><rect x="484" y="649" width="1" height="3" fill="#d8d8d8"/><rect x="483" y="693" width="3" height="1" fill="#d8d8d8"/><rect x="484" y="692" width="1" height="3" fill="#d8d8d8"/><rect x="483" y="736" width="3" height="1" fill="#d8d8d8"/><rect x="484" y="735" width="1" height="3" fill="#d8d8d8"/><rect x="483" y="779" width="3" height="1" fill="#d8d8d8"/><rect x="484" y="778" width="1" height="3" fill="#d8d8d8"/><rect x="483" y="822" width="3" height="1" fill="#d8d8d8"/><rect x="484" y="821" width="1" height="3" fill="#d8d8d8"/><rect x="483" y="865" width="3" height="1" fill="#d8d8d8"/><rect x="484" y="864" width="1" height="3" fill="#d8d8d8"/><rect x="483" y="908" width="3" height="1" fill="#d8d8d8"/><rect x="484" y="907" width="1" height="3" fill="#d8d8d8"/><rect x="585" y="177" width="3" height="1" fill="#d8d8d8"/><rect x="586" y="176" width="1" height="3" fill="#d8d8d8"/><rect x="585" y="220" width="3" height="1" fill="#d8d8d8"/><rect x="586" y="219" width="1" height="3" fill="#d8d8d8"/><rect x="585" y="263" width="3" height="1" fill="#d8d8d8"/><rect x="586" y="262" width="1" height="3" fill="#d8d8d8"/><rect x="585" y="306" width="3" height="1" fill="#d8d8d8"/><rect x="586" y="305" width="1" height="3" fill="#d8d8d8"/><rect x="585" y="349" width="3" height="1" fill="#d8d8d8"/><rect x="586" y="348" width="1" height="3" fill="#d8d8d8"/><rect x="585" y="392" width="3" height="1" fill="#d8d8d8"/><rect x="586" y="391" width="1" height="3" fill="#d8d8d8"/><rect x="585" y="435" width="3" height="1" fill="#d8d8d8"/><rect x="586" y="434" width="1" height="3" fill="#d8d8d8"/><rect x="585" y="478" width="3" height="1" fill="#d8d8d8"/><rect x="586" y="477" width="1" height="3" fill="#d8d8d8"/><rect x="585" y="521" width="3" height="1" fill="#d8d8d8"/><rect x="586" y="520" width="1" height="3" fill="#d8d8d8"/><rect x="585" y="564" width="3" height="1" fill="#d8d8d8"/><rect x="586" y="563" width="1" height="3" fill="#d8d8d8"/><rect x="585" y="607" width="3" height="1" fill="#d8d8d8"/><rect x="586" y="606" width="1" height="3" fill="#d8d8d8"/><rect x="585" y="650" width="3" height="1" fill="#d8d8d8"/><rect x="586" y="649" width="1" height="3" fill="#d8d8d8"/><rect x="585" y="693" width="3" height="1" fill="#d8d8d8"/><rect x="586" y="692" width="1" height="3" fill="#d8d8d8"/><rect x="585" y="736" width="3" height="1" fill="#d8d8d8"/><rect x="586" y="735" width="1" height="3" fill="#d8d8d8"/><rect x="585" y="779" width="3" height="1" fill="#d8d8d8"/><rect x="586" y="778" width="1" height="3" fill="#d8d8d8"/><rect x="585" y="822" width="3" height="1" fill="#d8d8d8"/><rect x="586" y="821" width="1" height="3" fill="#d8d8d8"/><rect x="585" y="865" width="3" height="1" fill="#d8d8d8"/><rect x="586" y="864" width="1" height="3" fill="#d8d8d8"/><rect x="585" y="908" width="3" height="1" fill="#d8d8d8"/><rect x="586" y="907" width="1" height="3" fill="#d8d8d8"/><rect x="687" y="177" width="3" height="1" fill="#d8d8d8"/><rect x="688" y="176" width="1" height="3" fill="#d8d8d8"/><rect x="687" y="220" width="3" height="1" fill="#d8d8d8"/><rect x="688" y="219" width="1" height="3" fill="#d8d8d8"/><rect x="687" y="263" width="3" height="1" fill="#d8d8d8"/><rect x="688" y="262" width="1" height="3" fill="#d8d8d8"/><rect x="687" y="306" width="3" height="1" fill="#d8d8d8"/><rect x="688" y="305" width="1" height="3" fill="#d8d8d8"/><rect x="687" y="349" width="3" height="1" fill="#d8d8d8"/><rect x="688" y="348" width="1" height="3" fill="#d8d8d8"/><rect x="687" y="392" width="3" height="1" fill="#d8d8d8"/><rect x="688" y="391" width="1" height="3" fill="#d8d8d8"/><rect x="687" y="435" width="3" height="1" fill="#d8d8d8"/><rect x="688" y="434" width="1" height="3" fill="#d8d8d8"/><rect x="687" y="478" width="3" height="1" fill="#d8d8d8"/><rect x="688" y="477" width="1" height="3" fill="#d8d8d8"/><rect x="687" y="521" width="3" height="1" fill="#d8d8d8"/><rect x="688" y="520" width="1" height="3" fill="#d8d8d8"/><rect x="687" y="564" width="3" height="1" fill="#d8d8d8"/><rect x="688" y="563" width="1" height="3" fill="#d8d8d8"/><rect x="687" y="607" width="3" height="1" fill="#d8d8d8"/><rect x="688" y="606" width="1" height="3" fill="#d8d8d8"/><rect x="687" y="650" width="3" height="1" fill="#d8d8d8"/><rect x="688" y="649" width="1" height="3" fill="#d8d8d8"/><rect x="687" y="693" width="3" height="1" fill="#d8d8d8"/><rect x="688" y="692" width="1" height="3" fill="#d8d8d8"/><rect x="687" y="736" width="3" height="1" fill="#d8d8d8"/><rect x="688" y="735" width="1" height="3" fill="#d8d8d8"/><rect x="687" y="779" width="3" height="1" fill="#d8d8d8"/><rect x="688" y="778" width="1" height="3" fill="#d8d8d8"/><rect x="687" y="822" width="3" height="1" fill="#d8d8d8"/><rect x="688" y="821" width="1" height="3" fill="#d8d8d8"/><rect x="687" y="865" width="3" height="1" fill="#d8d8d8"/><rect x="688" y="864" width="1" height="3" fill="#d8d8d8"/><rect x="687" y="908" width="3" height="1" fill="#d8d8d8"/><rect x="688" y="907" width="1" height="3" fill="#d8d8d8"/><rect x="789" y="177" width="3" height="1" fill="#d8d8d8"/><rect x="790" y="176" width="1" height="3" fill="#d8d8d8"/><rect x="789" y="220" width="3" height="1" fill="#d8d8d8"/><rect x="790" y="219" width="1" height="3" fill="#d8d8d8"/><rect x="789" y="263" width="3" height="1" fill="#d8d8d8"/><rect x="790" y="262" width="1" height="3" fill="#d8d8d8"/><rect x="789" y="306" width="3" height="1" fill="#d8d8d8"/><rect x="790" y="305" width="1" height="3" fill="#d8d8d8"/><rect x="789" y="349" width="3" height="1" fill="#d8d8d8"/><rect x="790" y="348" width="1" height="3" fill="#d8d8d8"/><rect x="789" y="392" width="3" height="1" fill="#d8d8d8"/><rect x="790" y="391" width="1" height="3" fill="#d8d8d8"/><rect x="789" y="435" width="3" height="1" fill="#d8d8d8"/><rect x="790" y="434" width="1" height="3" fill="#d8d8d8"/><rect x="789" y="478" width="3" height="1" fill="#d8d8d8"/><rect x="790" y="477" width="1" height="3" fill="#d8d8d8"/><rect x="789" y="521" width="3" height="1" fill="#d8d8d8"/><rect x="790" y="520" width="1" height="3" fill="#d8d8d8"/><rect x="789" y="564" width="3" height="1" fill="#d8d8d8"/><rect x="790" y="563" width="1" height="3" fill="#d8d8d8"/><rect x="789" y="607" width="3" height="1" fill="#d8d8d8"/><rect x="790" y="606" width="1" height="3" fill="#d8d8d8"/><rect x="789" y="650" width="3" height="1" fill="#d8d8d8"/><rect x="790" y="649" width="1" height="3" fill="#d8d8d8"/><rect x="789" y="693" width="3" height="1" fill="#d8d8d8"/><rect x="790" y="692" width="1" height="3" fill="#d8d8d8"/><rect x="789" y="736" width="3" height="1" fill="#d8d8d8"/><rect x="790" y="735" width="1" height="3" fill="#d8d8d8"/><rect x="789" y="779" width="3" height="1" fill="#d8d8d8"/><rect x="790" y="778" width="1" height="3" fill="#d8d8d8"/><rect x="789" y="822" width="3" height="1" fill="#d8d8d8"/><rect x="790" y="821" width="1" height="3" fill="#d8d8d8"/><rect x="789" y="865" width="3" height="1" fill="#d8d8d8"/><rect x="790" y="864" width="1" height="3" fill="#d8d8d8"/><rect x="789" y="908" width="3" height="1" fill="#d8d8d8"/><rect x="790" y="907" width="1" height="3" fill="#d8d8d8"/><rect x="891" y="177" width="3" height="1" fill="#d8d8d8"/><rect x="892" y="176" width="1" height="3" fill="#d8d8d8"/><rect x="891" y="220" width="3" height="1" fill="#d8d8d8"/><rect x="892" y="219" width="1" height="3" fill="#d8d8d8"/><rect x="891" y="263" width="3" height="1" fill="#d8d8d8"/><rect x="892" y="262" width="1" height="3" fill="#d8d8d8"/><rect x="891" y="306" width="3" height="1" fill="#d8d8d8"/><rect x="892" y="305" width="1" height="3" fill="#d8d8d8"/><rect x="891" y="349" width="3" height="1" fill="#d8d8d8"/><rect x="892" y="348" width="1" height="3" fill="#d8d8d8"/><rect x="891" y="392" width="3" height="1" fill="#d8d8d8"/><rect x="892" y="391" width="1" height="3" fill="#d8d8d8"/><rect x="891" y="435" width="3" height="1" fill="#d8d8d8"/><rect x="892" y="434" width="1" height="3" fill="#d8d8d8"/><rect x="891" y="478" width="3" height="1" fill="#d8d8d8"/><rect x="892" y="477" width="1" height="3" fill="#d8d8d8"/><rect x="891" y="521" width="3" height="1" fill="#d8d8d8"/><rect x="892" y="520" width="1" height="3" fill="#d8d8d8"/><rect x="891" y="564" width="3" height="1" fill="#d8d8d8"/><rect x="892" y="563" width="1" height="3" fill="#d8d8d8"/><rect x="891" y="607" width="3" height="1" fill="#d8d8d8"/><rect x="892" y="606" width="1" height="3" fill="#d8d8d8"/><rect x="891" y="650" width="3" height="1" fill="#d8d8d8"/><rect x="892" y="649" width="1" height="3" fill="#d8d8d8"/><rect x="891" y="693" width="3" height="1" fill="#d8d8d8"/><rect x="892" y="692" width="1" height="3" fill="#d8d8d8"/><rect x="891" y="736" width="3" height="1" fill="#d8d8d8"/><rect x="892" y="735" width="1" height="3" fill="#d8d8d8"/><rect x="891" y="779" width="3" height="1" fill="#d8d8d8"/><rect x="892" y="778" width="1" height="3" fill="#d8d8d8"/><rect x="891" y="822" width="3" height="1" fill="#d8d8d8"/><rect x="892" y="821" width="1" height="3" fill="#d8d8d8"/><rect x="891" y="865" width="3" height="1" fill="#d8d8d8"/><rect x="892" y="864" width="1" height="3" fill="#d8d8d8"/><rect x="891" y="908" width="3" height="1" fill="#d8d8d8"/><rect x="892" y="907" width="1" height="3" fill="#d8d8d8"/><rect x="993" y="177" width="3" height="1" fill="#d8d8d8"/><rect x="994" y="176" width="1" height="3" fill="#d8d8d8"/><rect x="993" y="220" width="3" height="1" fill="#d8d8d8"/><rect x="994" y="219" width="1" height="3" fill="#d8d8d8"/><rect x="993" y="263" width="3" height="1" fill="#d8d8d8"/><rect x="994" y="262" width="1" height="3" fill="#d8d8d8"/><rect x="993" y="306" width="3" height="1" fill="#d8d8d8"/><rect x="994" y="305" width="1" height="3" fill="#d8d8d8"/><rect x="993" y="349" width="3" height="1" fill="#d8d8d8"/><rect x="994" y="348" width="1" height="3" fill="#d8d8d8"/><rect x="993" y="392" width="3" height="1" fill="#d8d8d8"/><rect x="994" y="391" width="1" height="3" fill="#d8d8d8"/><rect x="993" y="435" width="3" height="1" fill="#d8d8d8"/><rect x="994" y="434" width="1" height="3" fill="#d8d8d8"/><rect x="993" y="478" width="3" height="1" fill="#d8d8d8"/><rect x="994" y="477" width="1" height="3" fill="#d8d8d8"/><rect x="993" y="521" width="3" height="1" fill="#d8d8d8"/><rect x="994" y="520" width="1" height="3" fill="#d8d8d8"/><rect x="993" y="564" width="3" height="1" fill="#d8d8d8"/><rect x="994" y="563" width="1" height="3" fill="#d8d8d8"/><rect x="993" y="607" width="3" height="1" fill="#d8d8d8"/><rect x="994" y="606" width="1" height="3" fill="#d8d8d8"/><rect x="993" y="650" width="3" height="1" fill="#d8d8d8"/><rect x="994" y="649" width="1" height="3" fill="#d8d8d8"/><rect x="993" y="693" width="3" height="1" fill="#d8d8d8"/><rect x="994" y="692" width="1" height="3" fill="#d8d8d8"/><rect x="993" y="736" width="3" height="1" fill="#d8d8d8"/><rect x="994" y="735" width="1" height="3" fill="#d8d8d8"/><rect x="993" y="779" width="3" height="1" fill="#d8d8d8"/><rect x="994" y="778" width="1" height="3" fill="#d8d8d8"/><rect x="993" y="822" width="3" height="1" fill="#d8d8d8"/><rect x="994" y="821" width="1" height="3" fill="#d8d8d8"/><rect x="993" y="865" width="3" height="1" fill="#d8d8d8"/><rect x="994" y="864" width="1" height="3" fill="#d8d8d8"/><rect x="993" y="908" width="3" height="1" fill="#d8d8d8"/><rect x="994" y="907" width="1" height="3" fill="#d8d8d8"/><rect x="1095" y="177" width="3" height="1" fill="#d8d8d8"/><rect x="1096" y="176" width="1" height="3" fill="#d8d8d8"/><rect x="1095" y="220" width="3" height="1" fill="#d8d8d8"/><rect x="1096" y="219" width="1" height="3" fill="#d8d8d8"/><rect x="1095" y="263" width="3" height="1" fill="#d8d8d8"/><rect x="1096" y="262" width="1" height="3" fill="#d8d8d8"/><rect x="1095" y="306" width="3" height="1" fill="#d8d8d8"/><rect x="1096" y="305" width="1" height="3" fill="#d8d8d8"/><rect x="1095" y="349" width="3" height="1" fill="#d8d8d8"/><rect x="1096" y="348" width="1" height="3" fill="#d8d8d8"/><rect x="1095" y="392" width="3" height="1" fill="#d8d8d8"/><rect x="1096" y="391" width="1" height="3" fill="#d8d8d8"/><rect x="1095" y="435" width="3" height="1" fill="#d8d8d8"/><rect x="1096" y="434" width="1" height="3" fill="#d8d8d8"/><rect x="1095" y="478" width="3" height="1" fill="#d8d8d8"/><rect x="1096" y="477" width="1" height="3" fill="#d8d8d8"/><rect x="1095" y="521" width="3" height="1" fill="#d8d8d8"/><rect x="1096" y="520" width="1" height="3" fill="#d8d8d8"/><rect x="1095" y="564" width="3" height="1" fill="#d8d8d8"/><rect x="1096" y="563" width="1" height="3" fill="#d8d8d8"/><rect x="1095" y="607" width="3" height="1" fill="#d8d8d8"/><rect x="1096" y="606" width="1" height="3" fill="#d8d8d8"/><rect x="1095" y="650" width="3" height="1" fill="#d8d8d8"/><rect x="1096" y="649" width="1" height="3" fill="#d8d8d8"/><rect x="1095" y="693" width="3" height="1" fill="#d8d8d8"/><rect x="1096" y="692" width="1" height="3" fill="#d8d8d8"/><rect x="1095" y="736" width="3" height="1" fill="#d8d8d8"/><rect x="1096" y="735" width="1" height="3" fill="#d8d8d8"/><rect x="1095" y="779" width="3" height="1" fill="#d8d8d8"/><rect x="1096" y="778" width="1" height="3" fill="#d8d8d8"/><rect x="1095" y="822" width="3" height="1" fill="#d8d8d8"/><rect x="1096" y="821" width="1" height="3" fill="#d8d8d8"/><rect x="1095" y="865" width="3" height="1" fill="#d8d8d8"/><rect x="1096" y="864" width="1" height="3" fill="#d8d8d8"/><rect x="1095" y="908" width="3" height="1" fill="#d8d8d8"/><rect x="1096" y="907" width="1" height="3" fill="#d8d8d8"/><rect x="1197" y="177" width="3" height="1" fill="#d8d8d8"/><rect x="1198" y="176" width="1" height="3" fill="#d8d8d8"/><rect x="1197" y="220" width="3" height="1" fill="#d8d8d8"/><rect x="1198" y="219" width="1" height="3" fill="#d8d8d8"/><rect x="1197" y="263" width="3" height="1" fill="#d8d8d8"/><rect x="1198" y="262" width="1" height="3" fill="#d8d8d8"/><rect x="1197" y="306" width="3" height="1" fill="#d8d8d8"/><rect x="1198" y="305" width="1" height="3" fill="#d8d8d8"/><rect x="1197" y="349" width="3" height="1" fill="#d8d8d8"/><rect x="1198" y="348" width="1" height="3" fill="#d8d8d8"/><rect x="1197" y="392" width="3" height="1" fill="#d8d8d8"/><rect x="1198" y="391" width="1" height="3" fill="#d8d8d8"/><rect x="1197" y="435" width="3" height="1" fill="#d8d8d8"/><rect x="1198" y="434" width="1" height="3" fill="#d8d8d8"/><rect x="1197" y="478" width="3" height="1" fill="#d8d8d8"/><rect x="1198" y="477" width="1" height="3" fill="#d8d8d8"/><rect x="1197" y="521" width="3" height="1" fill="#d8d8d8"/><rect x="1198" y="520" width="1" height="3" fill="#d8d8d8"/><rect x="1197" y="564" width="3" height="1" fill="#d8d8d8"/><rect x="1198" y="563" width="1" height="3" fill="#d8d8d8"/><rect x="1197" y="607" width="3" height="1" fill="#d8d8d8"/><rect x="1198" y="606" width="1" height="3" fill="#d8d8d8"/><rect x="1197" y="650" width="3" height="1" fill="#d8d8d8"/><rect x="1198" y="649" width="1" height="3" fill="#d8d8d8"/><rect x="1197" y="693" width="3" height="1" fill="#d8d8d8"/><rect x="1198" y="692" width="1" height="3" fill="#d8d8d8"/><rect x="1197" y="736" width="3" height="1" fill="#d8d8d8"/><rect x="1198" y="735" width="1" height="3" fill="#d8d8d8"/><rect x="1197" y="779" width="3" height="1" fill="#d8d8d8"/><rect x="1198" y="778" width="1" height="3" fill="#d8d8d8"/><rect x="1197" y="822" width="3" height="1" fill="#d8d8d8"/><rect x="1198" y="821" width="1" height="3" fill="#d8d8d8"/><rect x="1197" y="865" width="3" height="1" fill="#d8d8d8"/><rect x="1198" y="864" width="1" height="3" fill="#d8d8d8"/><rect x="1197" y="908" width="3" height="1" fill="#d8d8d8"/><rect x="1198" y="907" width="1" height="3" fill="#d8d8d8"/><rect x="279" y="160" width="1" height="764" fill="#008000"/><rect x="993" y="160" width="1" height="764" fill="#008000"/><rect x="896" y="160" width="1" height="55" fill="#000"/><rect x="989" y="160" width="1" height="55" fill="#000"/><rect x="896" y="214" width="94" height="1" fill="#000"/><rect x="928" y="177" width="30" height="1" fill="#000"/><rect x="280" y="239" width="46" height="1" fill="#000"/><rect x="337" y="239" width="46" height="1" fill="#000"/><rect x="325" y="234" width="1" height="12" fill="#000"/><rect x="337" y="234" width="1" height="12" fill="#000"/><rect x="382" y="239" width="46" height="1" fill="#000"/><rect x="439" y="239" width="46" height="1" fill="#000"/><rect x="427" y="234" width="1" height="12" fill="#000"/><rect x="439" y="234" width="1" height="12" fill="#000"/><line x1="439.5" y1="234" x2="427.5" y2="246" stroke="#000" stroke-width="1" shape-rendering="auto"/><rect x="484" y="239" width="205" height="1" fill="#000"/><rect x="688" y="239" width="46" height="1" fill="#000"/><rect x="745" y="239" width="46" height="1" fill="#000"/><rect x="733" y="234" width="1" height="12" fill="#000"/><rect x="745" y="234" width="1" height="12" fill="#000"/><rect x="790" y="239" width="46" height="1" fill="#000"/><rect x="847" y="239" width="46" height="1" fill="#000"/><rect x="835" y="234" width="1" height="12" fill="#000"/><rect x="847" y="234" width="1" height="12" fill="#000"/><line x1="847.5" y1="234" x2="835.5" y2="246" stroke="#000" stroke-width="1" shape-rendering="auto"/><rect x="892" y="239" width="46" height="1" fill="#000"/><rect x="949" y="239" width="46" height="1" fill="#000"/><rect x="937" y="234" width="1" height="12" fill="#000"/><rect x="949" y="234" width="1" height="12" fill="#000"/><line x1="949.5" y1="234" x2="937.5" y2="246" stroke="#000" stroke-width="1" shape-rendering="auto"/><rect x="994" y="239" width="45" height="1" fill="#000"/><rect x="1052" y="239" width="44" height="1" fill="#000"/><rect x="1095" y="235" width="1" height="9" fill="#000"/><circle cx="1045.5" cy="239.5" r="6.5" fill="#fff" stroke="#000" stroke-width="1" shape-rendering="auto"/><rect x="280" y="282" width="46" height="1" fill="#000"/><rect x="337" y="282" width="46" height="1" fill="#000"/><rect x="325" y="277" width="1" height="12" fill="#000"/><rect x="337" y="277" width="1" height="12" fill="#000"/><rect x="382" y="282" width="307" height="1" fill="#000"/><rect x="280" y="325" width="46" height="1" fill="#000"/><rect x="337" y="325" width="46" height="1" fill="#000"/><rect x="325" y="320" width="1" height="12" fill="#000"/><rect x="337" y="320" width="1" height="12" fill="#000"/><rect x="382" y="325" width="46" height="1" fill="#000"/><rect x="439" y="325" width="46" height="1" fill="#000"/><rect x="427" y="320" width="1" height="12" fill="#000"/><rect x="439" y="320" width="1" height="12" fill="#000"/><rect x="484" y="325" width="205" height="1" fill="#000"/><rect x="382" y="325" width="1" height="44" fill="#000"/><rect x="382" y="368" width="46" height="1" fill="#000"/><rect x="439" y="368" width="46" height="1" fill="#000"/><rect x="427" y="363" width="1" height="12" fill="#000"/><rect x="439" y="363" width="1" height="12" fill="#000"/><line x1="439.5" y1="363" x2="427.5" y2="375" stroke="#000" stroke-width="1" shape-rendering="auto"/><rect x="484" y="368" width="46" height="1" fill="#000"/><rect x="541" y="368" width="46" height="1" fill="#000"/><rect x="529" y="363" width="1" height="12" fill="#000"/><rect x="541" y="363" width="1" height="12" fill="#000"/><line x1="541.5" y1="363" x2="529.5" y2="375" stroke="#000" stroke-width="1" shape-rendering="auto"/><rect x="586" y="368" width="46" height="1" fill="#000"/><rect x="643" y="368" width="46" height="1" fill="#000"/><rect x="631" y="363" width="1" height="12" fill="#000"/><rect x="643" y="363" width="1" height="12" fill="#000"/><line x1="643.5" y1="363" x2="631.5" y2="375" stroke="#000" stroke-width="1" shape-rendering="auto"/><rect x="280" y="411" width="46" height="1" fill="#000"/><rect x="337" y="411" width="46" height="1" fill="#000"/><rect x="325" y="406" width="1" height="12" fill="#000"/><rect x="337" y="406" width="1" height="12" fill="#000"/><rect x="382" y="411" width="46" height="1" fill="#000"/><rect x="439" y="411" width="46" height="1" fill="#000"/><rect x="427" y="406" width="1" height="12" fill="#000"/><rect x="439" y="406" width="1" height="12" fill="#000"/><rect x="484" y="411" width="205" height="1" fill="#000"/><rect x="382" y="411" width="1" height="44" fill="#000"/><rect x="382" y="454" width="46" height="1" fill="#000"/><rect x="439" y="454" width="46" height="1" fill="#000"/><rect x="427" y="449" width="1" height="12" fill="#000"/><rect x="439" y="449" width="1" height="12" fill="#000"/><line x1="439.5" y1="449" x2="427.5" y2="461" stroke="#000" stroke-width="1" shape-rendering="auto"/><rect x="484" y="454" width="46" height="1" fill="#000"/><rect x="541" y="454" width="46" height="1" fill="#000"/><rect x="529" y="449" width="1" height="12" fill="#000"/><rect x="541" y="449" width="1" height="12" fill="#000"/><line x1="541.5" y1="449" x2="529.5" y2="461" stroke="#000" stroke-width="1" shape-rendering="auto"/><rect x="586" y="454" width="46" height="1" fill="#000"/><rect x="643" y="454" width="46" height="1" fill="#000"/><rect x="631" y="449" width="1" height="12" fill="#000"/><rect x="643" y="449" width="1" height="12" fill="#000"/><line x1="643.5" y1="449" x2="631.5" y2="461" stroke="#000" stroke-width="1" shape-rendering="auto"/><rect x="280" y="497" width="46" height="1" fill="#000"/><rect x="337" y="497" width="46" height="1" fill="#000"/><rect x="325" y="492" width="1" height="12" fill="#000"/><rect x="337" y="492" width="1" height="12" fill="#000"/><rect x="382" y="497" width="46" height="1" fill="#000"/><rect x="439" y="497" width="46" height="1" fill="#000"/><rect x="427" y="492" width="1" height="12" fill="#000"/><rect x="439" y="492" width="1" height="12" fill="#000"/><rect x="484" y="497" width="205" height="1" fill="#000"/><rect x="382" y="497" width="1" height="44" fill="#000"/><rect x="382" y="540" width="46" height="1" fill="#000"/><rect x="439" y="540" width="46" height="1" fill="#000"/><rect x="427" y="535" width="1" height="12" fill="#000"/><rect x="439" y="535" width="1" height="12" fill="#000"/><line x1="439.5" y1="535" x2="427.5" y2="547" stroke="#000" stroke-width="1" shape-rendering="auto"/><rect x="484" y="540" width="46" height="1" fill="#000"/><rect x="541" y="540" width="46" height="1" fill="#000"/><rect x="529" y="535" width="1" height="12" fill="#000"/><rect x="541" y="535" width="1" height="12" fill="#000"/><line x1="541.5" y1="535" x2="529.5" y2="547" stroke="#000" stroke-width="1" shape-rendering="auto"/><rect x="586" y="540" width="46" height="1" fill="#000"/><rect x="643" y="540" width="46" height="1" fill="#000"/><rect x="631" y="535" width="1" height="12" fill="#000"/><rect x="643" y="535" width="1" height="12" fill="#000"/><line x1="643.5" y1="535" x2="631.5" y2="547" stroke="#000" stroke-width="1" shape-rendering="auto"/><rect x="280" y="583" width="46" height="1" fill="#000"/><rect x="337" y="583" width="46" height="1" fill="#000"/><rect x="325" y="578" width="1" height="12" fill="#000"/><rect x="337" y="578" width="1" height="12" fill="#000"/><rect x="382" y="583" width="307" height="1" fill="#000"/><rect x="688" y="239" width="1" height="345" fill="#000"/><defs><pattern id="hat" width="4" height="4" patternUnits="userSpaceOnUse"><rect width="4" height="4" fill="#fff"/><path d="M-1,1 L1,-1 M0,4 L4,0 M3,5 L5,3" stroke="#000" stroke-width="0.85" shape-rendering="auto"/></pattern></defs><rect x="685" y="346" width="108" height="49" fill="url(#hat)"/><rect x="688" y="349" width="102" height="43" fill="#9ea6c4"/><rect x="688" y="349" width="1" height="43" fill="#1a2456"/><rect x="280" y="669" width="46" height="1" fill="#000"/><rect x="337" y="669" width="46" height="1" fill="#000"/><rect x="325" y="664" width="1" height="12" fill="#000"/><rect x="337" y="664" width="1" height="12" fill="#000"/><rect x="382" y="669" width="46" height="1" fill="#000"/><rect x="439" y="669" width="46" height="1" fill="#000"/><rect x="427" y="664" width="1" height="12" fill="#000"/><rect x="439" y="664" width="1" height="12" fill="#000"/><rect x="484" y="669" width="413" height="1" fill="#000"/><rect x="382" y="712" width="46" height="1" fill="#000"/><rect x="439" y="712" width="46" height="1" fill="#000"/><rect x="427" y="707" width="1" height="12" fill="#000"/><rect x="439" y="707" width="1" height="12" fill="#000"/><rect x="382" y="755" width="46" height="1" fill="#000"/><rect x="439" y="755" width="46" height="1" fill="#000"/><rect x="427" y="750" width="1" height="12" fill="#000"/><rect x="439" y="750" width="1" height="12" fill="#000"/><rect x="382" y="669" width="1" height="87" fill="#000"/><rect x="484" y="669" width="1" height="87" fill="#000"/><rect x="280" y="798" width="46" height="1" fill="#000"/><rect x="337" y="798" width="46" height="1" fill="#000"/><rect x="325" y="793" width="1" height="12" fill="#000"/><rect x="337" y="793" width="1" height="12" fill="#000"/><rect x="382" y="798" width="511" height="1" fill="#000"/><rect x="892" y="712" width="1" height="87" fill="#000"/><rect x="892" y="712" width="5" height="1" fill="#000"/><rect x="280" y="841" width="46" height="1" fill="#000"/><rect x="337" y="841" width="46" height="1" fill="#000"/><rect x="325" y="836" width="1" height="12" fill="#000"/><rect x="337" y="836" width="1" height="12" fill="#000"/><rect x="280" y="884" width="46" height="1" fill="#000"/><rect x="337" y="884" width="46" height="1" fill="#000"/><rect x="325" y="879" width="1" height="12" fill="#000"/><rect x="337" y="879" width="1" height="12" fill="#000"/><rect x="382" y="798" width="1" height="87" fill="#000"/><rect x="896" y="663" width="1" height="68" fill="#000"/><rect x="989" y="663" width="1" height="68" fill="#000"/><rect x="896" y="663" width="94" height="1" fill="#000"/><rect x="896" y="730" width="94" height="1" fill="#000"/><rect x="896" y="693" width="94" height="1" fill="#000"/><rect x="989" y="669" width="5" height="1" fill="#000"/><rect x="993" y="667" width="1" height="5" fill="#000"/><rect x="280" y="927" width="46" height="1" fill="#000"/><rect x="337" y="927" width="46" height="1" fill="#000"/><rect x="325" y="922" width="1" height="12" fill="#000"/><rect x="337" y="922" width="1" height="12" fill="#000"/><rect x="382" y="927" width="46" height="1" fill="#000"/><rect x="439" y="927" width="46" height="1" fill="#000"/><rect x="427" y="922" width="1" height="12" fill="#000"/><rect x="439" y="922" width="1" height="12" fill="#000"/><rect x="484" y="927" width="46" height="1" fill="#000"/><rect x="541" y="927" width="46" height="1" fill="#000"/><rect x="529" y="922" width="1" height="12" fill="#000"/><rect x="541" y="922" width="1" height="12" fill="#000"/><rect x="586" y="927" width="311" height="1" fill="#000"/><rect x="896" y="921" width="1" height="4" fill="#000"/><rect x="989" y="921" width="1" height="4" fill="#000"/><rect x="896" y="921" width="94" height="1" fill="#000"/></svg><div style="left:226px;top:160px;width:1036px;height:764px;overflow:hidden"><div style="left:-226px;top:-160px;width:1280px;height:984px"><div class="t" style="left:896px;top:178px;width:94px;text-align:center;">#15</div><div class="t" style="left:1004px;top:179px;">设置值</div><div class="t" style="left:229px;top:220px;">9</div><div class="t" style="left:226px;top:232px;width:41px;text-align:right;">761</div><div class="t" style="left:260px;top:220px;width:142px;text-align:center;">W70.00</div><div class="t" style="left:362px;top:220px;width:142px;text-align:center;">307.01</div><div class="t" style="left:362px;top:247px;width:142px;text-align:center;color:#0c2472;">OS1检测停止位</div><div class="t" style="left:668px;top:220px;width:142px;text-align:center;">307.00</div><div class="t" style="left:668px;top:247px;width:142px;text-align:center;color:#0c2472;">OS1检测运行位</div><div class="t" style="left:770px;top:220px;width:142px;text-align:center;">400.02</div><div class="t" style="left:770px;top:247px;width:142px;text-align:center;color:#0c2472;">os1测试缸异常</div><div class="t" style="left:872px;top:220px;width:142px;text-align:center;">W70.01</div><div class="t" style="left:974px;top:220px;width:142px;text-align:center;">W70.01</div><div class="t" style="left:260px;top:263px;width:142px;text-align:center;">H70.00</div><div class="t" style="left:260px;top:306px;width:142px;text-align:center;">H70.01</div><div class="t" style="left:362px;top:306px;width:142px;text-align:center;">T0061</div><div class="t" style="left:362px;top:333px;width:142px;text-align:center;color:#0c2472;">os1测试缸到位</div><div class="t" style="left:362px;top:349px;width:142px;text-align:center;">W17.04</div><div class="t" style="left:362px;top:376px;width:142px;text-align:center;color:#0c2472;">OS1检测单周期</div><div class="t" style="left:464px;top:349px;width:142px;text-align:center;">W17.05</div><div class="t" style="left:464px;top:376px;width:142px;text-align:center;color:#0c2472;">OS1检测步动</div><div class="t" style="left:566px;top:349px;width:142px;text-align:center;">H105.13</div><div class="t" style="left:260px;top:392px;width:142px;text-align:center;">H70.02</div><div class="t" style="left:362px;top:392px;width:142px;text-align:center;">T0065</div><div class="t" style="left:362px;top:419px;width:142px;text-align:center;color:#0c2472;">OS1 测试完成</div><div class="t" style="left:362px;top:435px;width:142px;text-align:center;">W17.04</div><div class="t" style="left:362px;top:462px;width:142px;text-align:center;color:#0c2472;">OS1检测单周期</div><div class="t" style="left:464px;top:435px;width:142px;text-align:center;">W17.05</div><div class="t" style="left:464px;top:462px;width:142px;text-align:center;color:#0c2472;">OS1检测步动</div><div class="t" style="left:566px;top:435px;width:142px;text-align:center;">H105.13</div><div class="t" style="left:260px;top:478px;width:142px;text-align:center;">H70.03</div><div class="t" style="left:362px;top:478px;width:142px;text-align:center;">T0062</div><div class="t" style="left:362px;top:505px;width:142px;text-align:center;color:#0c2472;">os1测试缸始位</div><div class="t" style="left:362px;top:521px;width:142px;text-align:center;">W17.04</div><div class="t" style="left:362px;top:548px;width:142px;text-align:center;color:#0c2472;">OS1检测单周期</div><div class="t" style="left:464px;top:521px;width:142px;text-align:center;">W17.05</div><div class="t" style="left:464px;top:548px;width:142px;text-align:center;color:#0c2472;">OS1检测步动</div><div class="t" style="left:566px;top:521px;width:142px;text-align:center;">H105.13</div><div class="t" style="left:260px;top:564px;width:142px;text-align:center;">H70.04</div><div class="t" style="left:229px;top:650px;">10</div><div class="t" style="left:226px;top:662px;width:41px;text-align:right;">793</div><div class="t" style="left:260px;top:650px;width:142px;text-align:center;">H70.01</div><div class="t" style="left:362px;top:650px;width:142px;text-align:center;">H105.13</div><div class="t" style="left:362px;top:693px;width:142px;text-align:center;">W17.04</div><div class="t" style="left:362px;top:720px;width:142px;text-align:center;color:#0c2472;">OS1检测单周期</div><div class="t" style="left:362px;top:736px;width:142px;text-align:center;">W17.05</div><div class="t" style="left:362px;top:763px;width:142px;text-align:center;color:#0c2472;">OS1检测步动</div><div class="t" style="left:260px;top:779px;width:142px;text-align:center;">H70.03</div><div class="t" style="left:260px;top:822px;width:142px;text-align:center;">T0010</div><div class="t" style="left:260px;top:849px;width:142px;text-align:center;color:#0c2472;">复位延时</div><div class="t" style="left:260px;top:865px;width:142px;text-align:center;">T0014</div><div class="t" style="left:896px;top:672px;width:94px;text-align:center;">KEEP(011)</div><div class="t" style="left:896px;top:694px;width:94px;text-align:center;">200.02</div><div class="t" style="left:1004px;top:673px;">保持</div><div class="t" style="left:1004px;top:694px;color:#0c2472;">os1测试缸auto</div><div class="t" style="left:1004px;top:707px;">位</div><div class="t" style="left:229px;top:908px;">11</div><div class="t" style="left:226px;top:920px;width:41px;text-align:right;">809</div><div class="t" style="left:260px;top:908px;width:142px;text-align:center;">H70.01</div><div class="t" style="left:362px;top:908px;width:142px;text-align:center;">102.02</div><div class="t" style="left:464px;top:908px;width:142px;text-align:center;">I:0.11</div></div></div>
<div style="left:1262px;top:160px;width:16px;height:764px;background:repeating-conic-gradient(#fff 0 25%,#d4d0c8 0 50%) 0 0/2px 2px;"></div>
<div style="left:1262px;top:160px;width:16px;height:7px;background:#d4d0c8;border-top:1px solid #d4d0c8;border-left:1px solid #d4d0c8;border-bottom:1px solid #404040;border-right:1px solid #404040"><div style="left:0px;top:0px;width:14px;height:5px;border-top:1px solid #fff;border-left:1px solid #fff;border-bottom:1px solid #808080;border-right:1px solid #808080"></div></div>
<div style="left:1262px;top:167px;width:16px;height:16px;background:#d4d0c8;border-top:1px solid #d4d0c8;border-left:1px solid #d4d0c8;border-bottom:1px solid #404040;border-right:1px solid #404040"><div style="left:0px;top:0px;width:14px;height:14px;border-top:1px solid #fff;border-left:1px solid #fff;border-bottom:1px solid #808080;border-right:1px solid #808080"><svg style="left:0px;top:0px" width="14" height="14" viewBox="0 0 14 14" shape-rendering="crispEdges"><path d="M2,8 L5.5,4 L9,8 Z" fill="#000" stroke="none" stroke-width="1" /></svg></div></div>
<div style="left:1262px;top:393px;width:16px;height:123px;background:#d4d0c8;border-top:1px solid #d4d0c8;border-left:1px solid #d4d0c8;border-bottom:1px solid #404040;border-right:1px solid #404040"><div style="left:0px;top:0px;width:14px;height:121px;border-top:1px solid #fff;border-left:1px solid #fff;border-bottom:1px solid #808080;border-right:1px solid #808080"></div></div>
<div style="left:1262px;top:908px;width:16px;height:16px;background:#d4d0c8;border-top:1px solid #d4d0c8;border-left:1px solid #d4d0c8;border-bottom:1px solid #404040;border-right:1px solid #404040"><div style="left:0px;top:0px;width:14px;height:14px;border-top:1px solid #fff;border-left:1px solid #fff;border-bottom:1px solid #808080;border-right:1px solid #808080"><svg style="left:0px;top:0px" width="14" height="14" viewBox="0 0 14 14" shape-rendering="crispEdges"><path d="M2,5 L9,5 L5.5,9 Z" fill="#000" stroke="none" stroke-width="1" /></svg></div></div>
<div style="left:226px;top:924px;width:1036px;height:16px;background:repeating-conic-gradient(#fff 0 25%,#d4d0c8 0 50%) 0 0/2px 2px;"></div>
<div style="left:226px;top:924px;width:6px;height:16px;background:#d4d0c8;border-top:1px solid #d4d0c8;border-left:1px solid #d4d0c8;border-bottom:1px solid #404040;border-right:1px solid #404040"><div style="left:0px;top:0px;width:4px;height:14px;border-top:1px solid #fff;border-left:1px solid #fff;border-bottom:1px solid #808080;border-right:1px solid #808080"></div></div>
<div style="left:232px;top:924px;width:17px;height:16px;background:#d4d0c8;border-top:1px solid #d4d0c8;border-left:1px solid #d4d0c8;border-bottom:1px solid #404040;border-right:1px solid #404040"><div style="left:0px;top:0px;width:15px;height:14px;border-top:1px solid #fff;border-left:1px solid #fff;border-bottom:1px solid #808080;border-right:1px solid #808080"><svg style="left:0px;top:0px" width="14" height="14" viewBox="0 0 14 14" shape-rendering="crispEdges"><path d="M7,3 L3,6.5 L7,10 Z" fill="#000" stroke="none" stroke-width="1" /></svg></div></div>
<div style="left:249px;top:924px;width:554px;height:16px;background:#d4d0c8;border-top:1px solid #d4d0c8;border-left:1px solid #d4d0c8;border-bottom:1px solid #404040;border-right:1px solid #404040"><div style="left:0px;top:0px;width:552px;height:14px;border-top:1px solid #fff;border-left:1px solid #fff;border-bottom:1px solid #808080;border-right:1px solid #808080"></div></div>
<div style="left:1246px;top:924px;width:16px;height:16px;background:#d4d0c8;border-top:1px solid #d4d0c8;border-left:1px solid #d4d0c8;border-bottom:1px solid #404040;border-right:1px solid #404040"><div style="left:0px;top:0px;width:14px;height:14px;border-top:1px solid #fff;border-left:1px solid #fff;border-bottom:1px solid #808080;border-right:1px solid #808080"><svg style="left:0px;top:0px" width="14" height="14" viewBox="0 0 14 14" shape-rendering="crispEdges"><path d="M4,3 L8,6.5 L4,10 Z" fill="#000" stroke="none" stroke-width="1" /></svg></div></div>
<div style="left:1262px;top:924px;width:16px;height:16px;background:#d4d0c8"></div>
<div style="left:225px;top:945px;width:11px;height:11px;border-top:1px solid #fff;border-left:1px solid #fff;border-bottom:1px solid #404040;border-right:1px solid #404040;"><svg style="left:0px;top:0px" width="8" height="8" viewBox="0 0 8 8" ><path d="M1.5,1.5 L6.5,6.5 M6.5,1.5 L1.5,6.5" fill="none" stroke="#000" stroke-width="1.5" shape-rendering="auto"/></svg></div>
<div style="left:238px;top:944px;width:12px;height:12px;border-top:1px solid #fff;border-left:1px solid #fff;border-bottom:1px solid #404040;border-right:1px solid #404040;"><svg style="left:0px;top:0px" width="10" height="9" viewBox="0 0 10 9" ><path d="M6,1.5 L2.5,4.5 L6,7.5 Z" fill="#000" stroke="none" stroke-width="1" /></svg></div>
<div style="left:252px;top:944px;width:50px;height:17px;border-top:1px solid #808080;border-left:1px solid #808080;border-bottom:1px solid #fff;border-right:1px solid #fff;"></div>
<div class="t" style="left:305px;top:947px;">名称:</div>
<div style="left:339px;top:944px;width:292px;height:17px;border-top:1px solid #808080;border-left:1px solid #808080;border-bottom:1px solid #fff;border-right:1px solid #fff;"></div>
<div class="t" style="left:634px;top:947px;">地址值:</div>
<div style="left:680px;top:944px;width:70px;height:17px;border-top:1px solid #808080;border-left:1px solid #808080;border-bottom:1px solid #fff;border-right:1px solid #fff;"></div>
<div class="t" style="left:753px;top:947px;">注释:</div>
<div style="left:788px;top:944px;width:492px;height:17px;border-top:1px solid #808080;border-left:1px solid #808080;border-bottom:1px solid #fff;border-right:1px solid #fff;"></div>
<div style="left:0px;top:961px;width:1280px;height:1px;background:#fff"></div>
<div class="t" style="left:2px;top:966px;">需要帮助，请按F1</div>
<div style="left:462px;top:963px;width:20px;height:17px;border-top:1px solid #808080;border-left:1px solid #808080;border-bottom:1px solid #fff;border-right:1px solid #fff;"></div>
<div style="left:484px;top:963px;width:66px;height:17px;border-top:1px solid #808080;border-left:1px solid #808080;border-bottom:1px solid #fff;border-right:1px solid #fff;"></div>
<div style="left:552px;top:963px;width:255px;height:17px;border-top:1px solid #808080;border-left:1px solid #808080;border-bottom:1px solid #fff;border-right:1px solid #fff;"></div>
<div style="left:810px;top:963px;width:57px;height:17px;border-top:1px solid #808080;border-left:1px solid #808080;border-bottom:1px solid #fff;border-right:1px solid #fff;"></div>
<div style="left:869px;top:963px;width:54px;height:17px;border-top:1px solid #808080;border-left:1px solid #808080;border-bottom:1px solid #fff;border-right:1px solid #fff;"></div>
<div style="left:926px;top:963px;width:131px;height:17px;border-top:1px solid #808080;border-left:1px solid #808080;border-bottom:1px solid #fff;border-right:1px solid #fff;"></div>
<div style="left:1060px;top:963px;width:105px;height:17px;border-top:1px solid #808080;border-left:1px solid #808080;border-bottom:1px solid #fff;border-right:1px solid #fff;"></div>
<div style="left:1167px;top:963px;width:60px;height:17px;border-top:1px solid #808080;border-left:1px solid #808080;border-bottom:1px solid #fff;border-right:1px solid #fff;"></div>
<div style="left:1231px;top:963px;width:23px;height:17px;border-top:1px solid #808080;border-left:1px solid #808080;border-bottom:1px solid #fff;border-right:1px solid #fff;"></div>
<div style="left:1256px;top:963px;width:22px;height:17px;border-top:1px solid #808080;border-left:1px solid #808080;border-bottom:1px solid #fff;border-right:1px solid #fff;"></div>
<div class="t" style="left:554px;top:966px;">新<span class="m">PLC1(</span>网络<span class="m">:0,</span>节点<span class="m">:0) - </span>离线</div>
<div class="t" style="left:928px;top:966px;">条<span class="m"> 9 (4, 3)  - 100%</span></div>
<div class="t" style="left:1169px;top:966px;">经典</div>
<div class="t" style="left:1258px;top:966px;"><span class="m">NUM</span></div>
<div style="left:0px;top:981px;width:1280px;height:1px;background:#fff"></div>
</body></html>
